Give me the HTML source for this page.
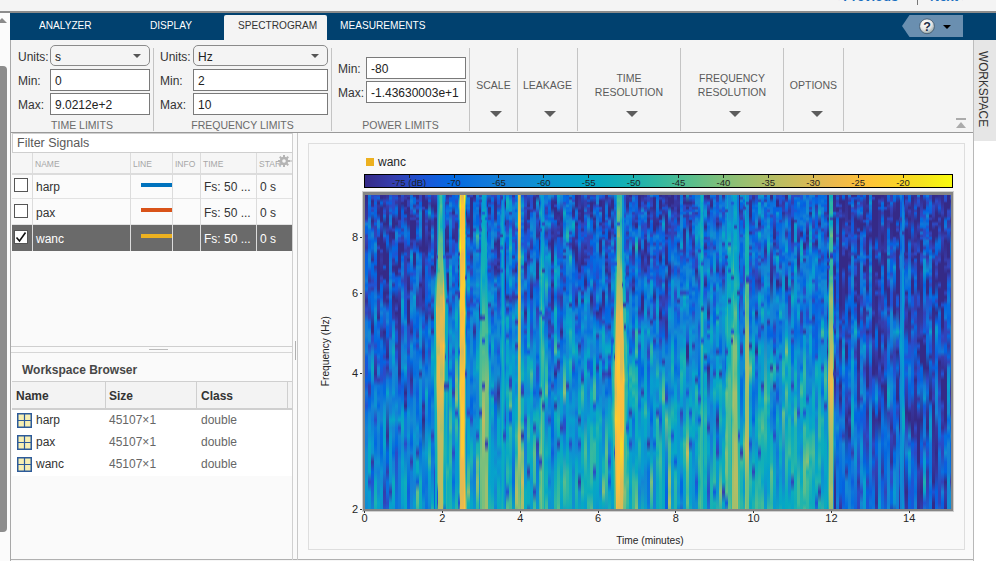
<!DOCTYPE html>
<html><head><meta charset="utf-8">
<style>
*{margin:0;padding:0;box-sizing:border-box}
html,body{width:996px;height:561px;overflow:hidden;background:#f4f4f4;font-family:"Liberation Sans",sans-serif;color:#333}
.a{position:absolute}
.t{position:absolute;white-space:nowrap;line-height:1}
.sep{position:absolute;width:1px;background:#c4c4c4;top:48px;height:83px}
.inp{position:absolute;background:#fff;border:1px solid #7a7a7a}
.dd{position:absolute;background:#f4f4f4;border:1px solid #8a8a8a;border-radius:5px}
.lbl{position:absolute;font-size:12px;line-height:1;color:#333;white-space:nowrap}
.val{position:absolute;font-size:12px;line-height:1;color:#222;white-space:nowrap}
.sec{position:absolute;font-size:10.5px;line-height:1;color:#6a6a6a;white-space:nowrap;text-align:center}
.btn{position:absolute;font-size:10.5px;line-height:13.6px;color:#5a5a5a;white-space:nowrap;text-align:center}
.arr{position:absolute;width:0;height:0;border-left:6px solid transparent;border-right:6px solid transparent;border-top:6px solid #5c5c5c}
.sarr{position:absolute;width:0;height:0;border-left:4px solid transparent;border-right:4px solid transparent;border-top:4px solid #555}
.spec{position:absolute;left:365px;top:195px;width:586px;height:314px;overflow:hidden}.spec i{position:absolute;top:0;height:314px;display:block}</style></head><body>
<!-- top strip -->
<div class="a" style="left:0;top:0;width:996px;height:11px;background:#f4f4f4"></div>
<div class="t" style="left:832px;top:-10px;font-size:13px;font-weight:bold;color:#1a6fc0">&lt; Previous</div>
<div class="a" style="left:917px;top:0;width:1px;height:5px;background:#777"></div>
<div class="t" style="left:930px;top:-10px;font-size:13px;font-weight:bold;color:#1a6fc0">Next &gt;</div>
<div class="a" style="left:0;top:11px;width:996px;height:2px;background:#8c8c8c"></div>
<!-- left scroll -->
<div class="a" style="left:0;top:13px;width:10px;height:548px;background:#fbfbfb"></div>
<div class="a" style="left:-3px;top:18px;width:0;height:0;border-left:5px solid transparent;border-right:5px solid transparent;border-bottom:5px solid #8a8a8a"></div>
<div class="a" style="left:0;top:66px;width:7px;height:466px;background:#8d8d8d;border-radius:0 4px 4px 0"></div>
<div class="a" style="left:10px;top:40px;width:1px;height:521px;background:#a8a8a8"></div>
<!-- blue bar -->
<div class="a" style="left:10px;top:13px;width:986px;height:27px;background:#01416f"></div>
<div class="t" style="left:39px;top:20px;font-size:11px;color:#fff;transform-origin:0 0;transform:scaleX(0.92)">ANALYZER</div>
<div class="t" style="left:150px;top:20px;font-size:11px;color:#fff;transform-origin:0 0;transform:scaleX(0.92)">DISPLAY</div>
<div class="a" style="left:224px;top:15px;width:103px;height:25px;background:#f4f4f4;border-radius:2px 2px 0 0"></div>
<div class="t" style="left:238px;top:20px;font-size:11px;color:#333;transform-origin:0 0;transform:scaleX(0.92)">SPECTROGRAM</div>
<div class="t" style="left:340px;top:20px;font-size:11px;color:#fff;transform-origin:0 0;transform:scaleX(0.92)">MEASUREMENTS</div>
<!-- help -->
<svg class="a" style="left:900px;top:14px" width="66" height="25" viewBox="0 0 66 25">
<polygon points="2,12 9.5,1 63,1 63,23 9.5,23" fill="#6a8fb0"/>
<defs><radialGradient id="hg" cx="0.4" cy="0.3" r="0.7"><stop offset="0" stop-color="#fff"/><stop offset="0.6" stop-color="#e6e6e6"/><stop offset="1" stop-color="#9aa"/></radialGradient></defs>
<circle cx="27" cy="12.3" r="7.4" fill="url(#hg)" stroke="#34495e" stroke-width="0.7"/>
<text x="27" y="17" font-family="Liberation Sans" font-weight="bold" font-size="12.5" text-anchor="middle" fill="#1f2f48">?</text>
<polygon points="43,11 51,11 47,15" fill="#000"/>
</svg>
<!-- toolstrip -->
<div class="a" style="left:11px;top:40px;width:962px;height:92px;background:#f4f4f4"></div>
<div class="a" style="left:11px;top:132px;width:962px;height:1px;background:#9a9a9a"></div>
<div class="sep" style="left:153px"></div>
<div class="sep" style="left:331px"></div>
<div class="sep" style="left:469px"></div>
<div class="sep" style="left:517px"></div>
<div class="sep" style="left:577px"></div>
<div class="sep" style="left:680px"></div>
<div class="sep" style="left:783px"></div>
<div class="sep" style="left:843px"></div>
<!-- time limits -->
<div class="lbl" style="left:18px;top:51px">Units:</div>
<div class="dd" style="left:50px;top:45px;width:100px;height:21px"></div>
<div class="val" style="left:55px;top:51px">s</div>
<div class="sarr" style="left:133px;top:54px"></div>
<div class="lbl" style="left:18px;top:75px">Min:</div>
<div class="inp" style="left:50px;top:69px;width:100px;height:22px"></div>
<div class="val" style="left:55px;top:75px">0</div>
<div class="lbl" style="left:18px;top:99px">Max:</div>
<div class="inp" style="left:50px;top:93px;width:100px;height:22px"></div>
<div class="val" style="left:55px;top:99px">9.0212e+2</div>
<div class="sec" style="left:11px;width:142px;top:120px">TIME LIMITS</div>
<!-- freq limits -->
<div class="lbl" style="left:160px;top:51px">Units:</div>
<div class="dd" style="left:193px;top:45px;width:135px;height:21px"></div>
<div class="val" style="left:198px;top:51px">Hz</div>
<div class="sarr" style="left:311px;top:54px"></div>
<div class="lbl" style="left:160px;top:75px">Min:</div>
<div class="inp" style="left:193px;top:69px;width:135px;height:22px"></div>
<div class="val" style="left:198px;top:75px">2</div>
<div class="lbl" style="left:160px;top:99px">Max:</div>
<div class="inp" style="left:193px;top:93px;width:135px;height:22px"></div>
<div class="val" style="left:198px;top:99px">10</div>
<div class="sec" style="left:154px;width:177px;top:120px">FREQUENCY LIMITS</div>
<!-- power limits -->
<div class="lbl" style="left:338px;top:63px">Min:</div>
<div class="inp" style="left:366px;top:57px;width:100px;height:22px"></div>
<div class="val" style="left:371px;top:63px">-80</div>
<div class="lbl" style="left:338px;top:87px">Max:</div>
<div class="inp" style="left:366px;top:81px;width:100px;height:22px"></div>
<div class="val" style="left:371px;top:87px">-1.43630003e+1</div>
<div class="sec" style="left:332px;width:137px;top:120px">POWER LIMITS</div>
<!-- buttons -->
<div class="btn" style="left:470px;width:47px;top:79px">SCALE</div>
<div class="arr" style="left:490px;top:111px"></div>
<div class="btn" style="left:518px;width:59px;top:79px">LEAKAGE</div>
<div class="arr" style="left:544px;top:111px"></div>
<div class="btn" style="left:578px;width:102px;top:72px">TIME<br>RESOLUTION</div>
<div class="arr" style="left:626px;top:111px"></div>
<div class="btn" style="left:681px;width:102px;top:72px">FREQUENCY<br>RESOLUTION</div>
<div class="arr" style="left:729px;top:111px"></div>
<div class="btn" style="left:784px;width:59px;top:79px">OPTIONS</div>
<div class="arr" style="left:811px;top:111px"></div>
<!-- collapse -->
<div class="a" style="left:956px;top:118px;width:10px;height:2px;background:#ababab"></div>
<div class="a" style="left:956px;top:122px;width:0;height:0;border-left:5px solid transparent;border-right:5px solid transparent;border-bottom:6px solid #ababab"></div>
<!-- workspace tab -->
<div class="a" style="left:973px;top:40px;width:23px;height:101px;background:#e6e6e6;border-left:1px solid #bdbdbd"></div>
<div class="a" style="left:973px;top:141px;width:23px;height:420px;background:#fff"></div>
<div class="t" style="left:979px;top:51px;font-size:13px;color:#333;transform-origin:0 0;transform:translate(11px,0) rotate(90deg) scaleX(0.91)">WORKSPACE</div>

<!-- left panel -->
<div class="a" style="left:11px;top:133px;width:286px;height:427px;background:#fafafa"></div>
<div class="a" style="left:11px;top:559px;width:962px;height:1px;background:#b0b0b0"></div><div class="a" style="left:11px;top:560px;width:962px;height:1px;background:#f6f6f6"></div>
<div class="a" style="left:12px;top:133px;width:281px;height:20px;background:#fff;border:1px solid #cfcfcf"></div>
<div class="t" style="left:17px;top:137px;font-size:12.5px;color:#595959">Filter Signals</div>
<!-- table header -->
<div class="a" style="left:12px;top:153px;width:281px;height:22px;background:#f6f6f6;border-bottom:2px solid #dcdcdc"></div>
<div class="t" style="left:35px;top:160px;font-size:8.5px;color:#a6a6a6">NAME</div>
<div class="t" style="left:133px;top:160px;font-size:8.5px;color:#a6a6a6">LINE</div>
<div class="t" style="left:175px;top:160px;font-size:8.5px;color:#a6a6a6">INFO</div>
<div class="t" style="left:203px;top:160px;font-size:8.5px;color:#a6a6a6">TIME</div>
<div class="t" style="left:259px;top:160px;font-size:8.5px;color:#a6a6a6">STAR</div>
<svg class="a" style="left:277px;top:154px" width="16" height="14" viewBox="0 0 16 14"><g fill="#b4b4b4"><circle cx="7" cy="7" r="4.2"/><rect x="6" y="1" width="2" height="12"/><rect x="1" y="6" width="12" height="2"/><rect x="6" y="1" width="2" height="12" transform="rotate(45 7 7)"/><rect x="6" y="1" width="2" height="12" transform="rotate(-45 7 7)"/></g><circle cx="7" cy="7" r="1.8" fill="#f6f6f6"/><rect x="13" y="6.5" width="3" height="1" fill="#b4b4b4"/></svg>
<!-- rows -->
<div class="a" style="left:12px;top:175px;width:281px;height:24px;background:#fbfbfb;border-bottom:1px solid #e2e2e2"></div>
<div class="a" style="left:12px;top:199px;width:281px;height:26px;background:#fbfbfb;border-bottom:1px solid #e2e2e2"></div>
<div class="a" style="left:12px;top:225px;width:281px;height:26px;background:#6a6a6a"></div>
<div class="a" style="left:32px;top:153px;width:1px;height:98px;background:#dcdcdc"></div>
<div class="a" style="left:130px;top:153px;width:1px;height:98px;background:#dcdcdc"></div>
<div class="a" style="left:172px;top:153px;width:1px;height:98px;background:#dcdcdc"></div>
<div class="a" style="left:200px;top:153px;width:1px;height:98px;background:#dcdcdc"></div>
<div class="a" style="left:256px;top:153px;width:1px;height:98px;background:#dcdcdc"></div>
<div class="a" style="left:292px;top:133px;width:1px;height:427px;background:#d0d0d0"></div>
<div class="a" style="left:14px;top:178px;width:14px;height:14px;background:#fff;border:1.5px solid #555"></div>
<div class="a" style="left:14px;top:204px;width:14px;height:14px;background:#fff;border:1.5px solid #555"></div>
<div class="a" style="left:14px;top:230px;width:14px;height:14px;background:#fff;border:1.5px solid #555"></div>
<svg class="a" style="left:14px;top:230px" width="14" height="14"><polyline points="2.5,7.5 5.5,11 11.5,2.5" fill="none" stroke="#111" stroke-width="1.6"/></svg>
<div class="t" style="left:36px;top:181px;font-size:12px;color:#333">harp</div>
<div class="t" style="left:36px;top:207px;font-size:12px;color:#333">pax</div>
<div class="t" style="left:36px;top:233px;font-size:12px;color:#fff">wanc</div>
<div class="a" style="left:141px;top:183px;width:31px;height:4px;background:#0072bd"></div>
<div class="a" style="left:141px;top:208px;width:31px;height:4px;background:#d95319"></div>
<div class="a" style="left:141px;top:234px;width:31px;height:4px;background:#edb120"></div>
<div class="t" style="left:204px;top:181px;font-size:12px;color:#333">Fs: 50 ...</div>
<div class="t" style="left:204px;top:207px;font-size:12px;color:#333">Fs: 50 ...</div>
<div class="t" style="left:204px;top:233px;font-size:12px;color:#fff">Fs: 50 ...</div>
<div class="t" style="left:260px;top:181px;font-size:12px;color:#333">0 s</div>
<div class="t" style="left:260px;top:207px;font-size:12px;color:#333">0 s</div>
<div class="t" style="left:260px;top:233px;font-size:12px;color:#fff">0 s</div>
<!-- splitter -->
<div class="a" style="left:11px;top:346px;width:282px;height:1px;background:#cfcfcf"></div>
<div class="a" style="left:11px;top:352px;width:282px;height:1px;background:#d6d6d6"></div>
<div class="a" style="left:149px;top:349px;width:19px;height:1px;background:#bcbcbc"></div>



<!-- workspace browser -->
<div class="t" style="left:22px;top:364px;font-size:12px;font-weight:bold;color:#474747">Workspace Browser</div>
<div class="a" style="left:12px;top:381px;width:280px;height:29px;background:#f3f3f3;border-top:1px solid #cfcfcf;border-bottom:2px solid #cfcfcf"></div>
<div class="a" style="left:105px;top:381px;width:1px;height:28px;background:#cfcfcf"></div>
<div class="a" style="left:196px;top:381px;width:1px;height:28px;background:#cfcfcf"></div>
<div class="a" style="left:287px;top:381px;width:1px;height:28px;background:#cfcfcf"></div>
<div class="t" style="left:16px;top:390px;font-size:12px;font-weight:bold;color:#333">Name</div>
<div class="t" style="left:109px;top:390px;font-size:12px;font-weight:bold;color:#333">Size</div>
<div class="t" style="left:201px;top:390px;font-size:12px;font-weight:bold;color:#333">Class</div>
<div class="a" style="left:12px;top:410px;width:280px;height:66px;background:#fff"></div>
<svg class="a" style="left:17px;top:413px" width="15" height="15"><rect x="0.75" y="0.75" width="13.5" height="13.5" fill="#f7efb3" stroke="#2d5b9a" stroke-width="1.5"/><path d="M7.5 1v13M1 7.5h13" stroke="#2d5b9a" stroke-width="1.2"/></svg>
<svg class="a" style="left:17px;top:435px" width="15" height="15"><rect x="0.75" y="0.75" width="13.5" height="13.5" fill="#f7efb3" stroke="#2d5b9a" stroke-width="1.5"/><path d="M7.5 1v13M1 7.5h13" stroke="#2d5b9a" stroke-width="1.2"/></svg>
<svg class="a" style="left:17px;top:457px" width="15" height="15"><rect x="0.75" y="0.75" width="13.5" height="13.5" fill="#f7efb3" stroke="#2d5b9a" stroke-width="1.5"/><path d="M7.5 1v13M1 7.5h13" stroke="#2d5b9a" stroke-width="1.2"/></svg>
<div class="t" style="left:36px;top:414px;font-size:12px;color:#333">harp</div>
<div class="t" style="left:36px;top:436px;font-size:12px;color:#333">pax</div>
<div class="t" style="left:36px;top:458px;font-size:12px;color:#333">wanc</div>
<div class="t" style="left:109px;top:414px;font-size:12px;color:#666">45107×1</div>
<div class="t" style="left:109px;top:436px;font-size:12px;color:#666">45107×1</div>
<div class="t" style="left:109px;top:458px;font-size:12px;color:#666">45107×1</div>
<div class="t" style="left:201px;top:414px;font-size:12px;color:#666">double</div>
<div class="t" style="left:201px;top:436px;font-size:12px;color:#666">double</div>
<div class="t" style="left:201px;top:458px;font-size:12px;color:#666">double</div>

<!-- plot area -->
<div class="a" style="left:293px;top:133px;width:680px;height:426px;background:#fafafa"></div>
<div class="a" style="left:297px;top:133px;width:1px;height:427px;background:#c8c8c8"></div>
<div class="a" style="left:295px;top:341px;width:1px;height:19px;background:#b0b0b0"></div>
<div class="a" style="left:973px;top:133px;width:1px;height:428px;background:#b8b8b8"></div>
<div class="a" style="left:308px;top:143px;width:657px;height:407px;border:1px solid #dedede;background:#f9f9f9"></div>
<div class="a" style="left:366px;top:158px;width:8px;height:8px;background:#edb120"></div>
<div class="t" style="left:378px;top:156px;font-size:12px;color:#262626">wanc</div>
<div class="a" style="left:364px;top:174px;width:589px;height:14px;border:1px solid #000;background:linear-gradient(90deg,#352a87 0.00%,#353eaf 5.00%,#1b55d7 10.00%,#036ae1 15.00%,#0f77db 20.00%,#1484d4 25.00%,#0d93d2 30.00%,#06a0cd 35.00%,#07aac1 40.00%,#18b1b2 45.00%,#33b8a1 50.00%,#55bd8e 55.00%,#7abf7c 60.00%,#9bbf6f 65.00%,#b8bd63 70.00%,#d3bb58 75.00%,#ecb94c 80.00%,#fec13a 85.00%,#fad12b 90.00%,#f5e31e 95.00%,#f9fb0e 100.00%)"></div>
<div class="a" style="left:408.6px;top:175px;width:1px;height:3px;background:#222"></div>
<div class="t" style="left:379.1px;top:177.5px;width:60px;text-align:center;font-size:9.5px;color:#1e1e1e">-75 (dB)</div>
<div class="a" style="left:453.5px;top:175px;width:1px;height:3px;background:#222"></div>
<div class="t" style="left:424.0px;top:177.5px;width:60px;text-align:center;font-size:9.5px;color:#1e1e1e">-70</div>
<div class="a" style="left:498.4px;top:175px;width:1px;height:3px;background:#222"></div>
<div class="t" style="left:468.9px;top:177.5px;width:60px;text-align:center;font-size:9.5px;color:#1e1e1e">-65</div>
<div class="a" style="left:543.3px;top:175px;width:1px;height:3px;background:#222"></div>
<div class="t" style="left:513.8px;top:177.5px;width:60px;text-align:center;font-size:9.5px;color:#1e1e1e">-60</div>
<div class="a" style="left:588.2px;top:175px;width:1px;height:3px;background:#222"></div>
<div class="t" style="left:558.7px;top:177.5px;width:60px;text-align:center;font-size:9.5px;color:#1e1e1e">-55</div>
<div class="a" style="left:633.1px;top:175px;width:1px;height:3px;background:#222"></div>
<div class="t" style="left:603.6px;top:177.5px;width:60px;text-align:center;font-size:9.5px;color:#1e1e1e">-50</div>
<div class="a" style="left:678.0px;top:175px;width:1px;height:3px;background:#222"></div>
<div class="t" style="left:648.5px;top:177.5px;width:60px;text-align:center;font-size:9.5px;color:#1e1e1e">-45</div>
<div class="a" style="left:722.9px;top:175px;width:1px;height:3px;background:#222"></div>
<div class="t" style="left:693.4px;top:177.5px;width:60px;text-align:center;font-size:9.5px;color:#1e1e1e">-40</div>
<div class="a" style="left:767.8px;top:175px;width:1px;height:3px;background:#222"></div>
<div class="t" style="left:738.3px;top:177.5px;width:60px;text-align:center;font-size:9.5px;color:#1e1e1e">-35</div>
<div class="a" style="left:812.7px;top:175px;width:1px;height:3px;background:#222"></div>
<div class="t" style="left:783.2px;top:177.5px;width:60px;text-align:center;font-size:9.5px;color:#1e1e1e">-30</div>
<div class="a" style="left:857.6px;top:175px;width:1px;height:3px;background:#222"></div>
<div class="t" style="left:828.1px;top:177.5px;width:60px;text-align:center;font-size:9.5px;color:#1e1e1e">-25</div>
<div class="a" style="left:902.5px;top:175px;width:1px;height:3px;background:#222"></div>
<div class="t" style="left:873.0px;top:177.5px;width:60px;text-align:center;font-size:9.5px;color:#1e1e1e">-20</div>
<div class="a" style="left:362px;top:191px;width:592px;height:321px;border:1px solid #cfcfcf;background:#868686"></div>
<div class="spec"><i style="left:0px;width:3px;background:linear-gradient(#353dad -6px,#352a87 -1px,#3637a0 24px,#2c4ac7 26px,#1481d6 29px,#0363e1 32px,#0f5cdd 38px,#353dad 41px,#3243ba 43px,#3637a0 53px,#0f5cdd 59px,#0363e1 69px,#0268e1 79px,#1079da 86px,#0363e1 90px,#0871de 94px,#2c4ac7 98px,#363093 106px,#2c4ac7 114px,#3243ba 118px,#1079da 127px,#1481d6 141px,#0d75dc 146px,#127dd8 157px,#0f5cdd 162px,#2053d4 179px,#0363e1 185px,#2053d4 191px,#0d75dc 198px,#2053d4 211px,#0871de 218px,#1481d6 233px,#127dd8 249px,#108ed2 258px,#108ed2 277px,#079ccf 287px,#1485d4 320px)"></i><i style="left:3px;width:3px;background:linear-gradient(#1481d6 -6px,#046de0 -4px,#1079da 1px,#046de0 3px,#1079da 8px,#046de0 11px,#0f5cdd 18px,#0f5cdd 21px,#1481d6 24px,#1481d6 29px,#0c93d2 32px,#0871de 35px,#0d75dc 43px,#0f5cdd 46px,#0363e1 53px,#127dd8 59px,#1389d3 65px,#0d75dc 72px,#2053d4 76px,#3637a0 86px,#2053d4 90px,#3243ba 94px,#0268e1 102px,#353dad 118px,#3243ba 123px,#046de0 127px,#046de0 132px,#1389d3 137px,#1485d4 146px,#2c4ac7 151px,#1481d6 162px,#127dd8 173px,#0268e1 179px,#0363e1 185px,#353dad 191px,#353dad 198px,#0363e1 204px,#0268e1 211px,#1481d6 218px,#0998d1 233px,#0c93d2 241px,#06a7c6 249px,#07a9c2 277px,#2c4ac7 287px,#079ccf 297px,#0c93d2 320px)"></i><i style="left:6px;width:3px;background:linear-gradient(#352a87 -6px,#3637a0 -4px,#0363e1 -1px,#3243ba 1px,#2c4ac7 3px,#352a87 6px,#363093 11px,#2053d4 13px,#3243ba 16px,#046de0 18px,#352a87 26px,#353dad 32px,#0f5cdd 35px,#127dd8 38px,#1481d6 41px,#0268e1 46px,#0871de 53px,#363093 65px,#0268e1 69px,#0268e1 79px,#3243ba 86px,#2053d4 90px,#353dad 94px,#046de0 98px,#046de0 114px,#352a87 132px,#352a87 137px,#2c4ac7 141px,#2c4ac7 146px,#1485d4 157px,#07a9c2 173px,#108ed2 185px,#0871de 191px,#0871de 204px,#1485d4 211px,#1079da 225px,#0998d1 249px,#0c93d2 258px,#3637a0 267px,#0363e1 277px,#2053d4 287px,#108ed2 320px)"></i><i style="left:9px;width:3px;background:linear-gradient(#352a87 -6px,#363093 -1px,#2053d4 1px,#2053d4 6px,#0268e1 8px,#2053d4 11px,#0268e1 16px,#0f5cdd 18px,#0268e1 21px,#3243ba 26px,#0363e1 29px,#353dad 32px,#3243ba 38px,#3243ba 41px,#0268e1 46px,#1389d3 49px,#1389d3 56px,#046de0 59px,#0f5cdd 65px,#0363e1 69px,#3637a0 72px,#0268e1 79px,#2053d4 90px,#127dd8 102px,#0871de 106px,#1079da 110px,#108ed2 114px,#1389d3 118px,#0998d1 123px,#0871de 132px,#0268e1 146px,#2c4ac7 151px,#0268e1 157px,#3243ba 162px,#363093 179px,#3243ba 185px,#1079da 191px,#108ed2 198px,#0c93d2 211px,#2c4ac7 225px,#0d75dc 233px,#0268e1 249px,#108ed2 267px,#1485d4 277px,#07a9c2 287px,#1db3af 308px,#06a4ca 320px)"></i><i style="left:12px;width:3px;background:linear-gradient(#0f5cdd -6px,#353dad -4px,#2c4ac7 1px,#046de0 3px,#3637a0 6px,#352a87 8px,#3637a0 11px,#352a87 18px,#0f5cdd 24px,#1481d6 26px,#1485d4 32px,#0268e1 35px,#2053d4 41px,#363093 43px,#352a87 49px,#2c4ac7 53px,#352a87 56px,#352a87 94px,#0363e1 102px,#353dad 106px,#353dad 114px,#352a87 123px,#0f5cdd 127px,#0f5cdd 132px,#1079da 137px,#0363e1 146px,#0363e1 157px,#0d75dc 162px,#2053d4 167px,#1485d4 173px,#1481d6 179px,#353dad 185px,#0d75dc 191px,#046de0 198px,#1079da 204px,#0268e1 211px,#1485d4 218px,#108ed2 233px,#127dd8 241px,#127dd8 258px,#0c93d2 267px,#127dd8 277px,#1389d3 287px,#1485d4 297px,#06a4ca 308px,#079ccf 320px)"></i><i style="left:15px;width:3px;background:linear-gradient(#3637a0 -6px,#352a87 3px,#0268e1 8px,#352a87 13px,#352a87 26px,#2053d4 29px,#352a87 41px,#352a87 53px,#2c4ac7 56px,#363093 59px,#3637a0 65px,#352a87 79px,#3243ba 83px,#353dad 86px,#0363e1 90px,#0268e1 94px,#0f5cdd 102px,#1481d6 110px,#0871de 114px,#1481d6 118px,#046de0 123px,#046de0 127px,#3637a0 137px,#3637a0 141px,#0871de 146px,#0d75dc 151px,#0363e1 162px,#0f5cdd 173px,#2c4ac7 185px,#0871de 191px,#1481d6 225px,#046de0 233px,#0268e1 258px,#0c93d2 277px,#1389d3 287px,#079ccf 297px,#108ed2 320px)"></i><i style="left:18px;width:3px;background:linear-gradient(#352a87 -6px,#363093 3px,#3243ba 6px,#363093 11px,#2053d4 16px,#2c4ac7 18px,#0871de 21px,#352a87 29px,#0d75dc 41px,#2c4ac7 43px,#352a87 49px,#352a87 69px,#0f5cdd 72px,#352a87 76px,#352a87 83px,#0f5cdd 86px,#352a87 98px,#363093 106px,#0d75dc 114px,#2c4ac7 132px,#352a87 137px,#0363e1 157px,#3243ba 162px,#0268e1 167px,#2c4ac7 173px,#2c4ac7 179px,#0268e1 191px,#0268e1 198px,#108ed2 211px,#06a4ca 225px,#06a0cd 241px,#06a7c6 249px,#127dd8 267px,#1079da 277px,#353dad 297px,#3243ba 308px,#0d75dc 320px)"></i><i style="left:21px;width:3px;background:linear-gradient(#352a87 -6px,#3637a0 3px,#0f5cdd 8px,#353dad 11px,#352a87 24px,#352a87 29px,#353dad 35px,#3637a0 38px,#0f5cdd 41px,#0268e1 49px,#352a87 59px,#352a87 86px,#353dad 90px,#352a87 98px,#353dad 102px,#352a87 106px,#2053d4 114px,#127dd8 118px,#1079da 123px,#1485d4 127px,#0268e1 132px,#0363e1 141px,#353dad 146px,#352a87 162px,#2053d4 167px,#3637a0 173px,#1079da 185px,#1485d4 191px,#06a7c6 198px,#1389d3 204px,#363093 241px,#0268e1 258px,#0363e1 267px,#353dad 277px,#0871de 287px,#0871de 297px,#2c4ac7 308px,#1079da 320px)"></i><i style="left:24px;width:3px;background:linear-gradient(#2c4ac7 -6px,#1079da -4px,#2053d4 1px,#0871de 3px,#2053d4 6px,#0363e1 8px,#2c4ac7 11px,#0871de 16px,#2c4ac7 18px,#1079da 21px,#1079da 26px,#1481d6 29px,#2053d4 32px,#352a87 38px,#363093 46px,#046de0 59px,#1079da 69px,#0d75dc 76px,#127dd8 79px,#0871de 83px,#1389d3 86px,#0c93d2 90px,#0871de 98px,#1079da 102px,#0268e1 106px,#0268e1 123px,#2c4ac7 141px,#1481d6 146px,#1389d3 157px,#127dd8 162px,#1079da 173px,#2c4ac7 179px,#0871de 185px,#1485d4 204px,#127dd8 211px,#1481d6 218px,#06a4ca 225px,#108ed2 233px,#079ccf 241px,#0998d1 277px,#108ed2 287px,#353dad 297px,#079ccf 308px,#07a9c2 320px)"></i><i style="left:27px;width:3px;background:linear-gradient(#2c4ac7 -6px,#3637a0 -1px,#2c4ac7 1px,#2c4ac7 13px,#0f5cdd 18px,#352a87 24px,#352a87 32px,#2c4ac7 35px,#352a87 38px,#352a87 43px,#2c4ac7 46px,#2c4ac7 49px,#0268e1 53px,#2053d4 62px,#3637a0 65px,#353dad 69px,#352a87 72px,#363093 76px,#0f5cdd 79px,#0f5cdd 83px,#0871de 86px,#3637a0 90px,#0363e1 94px,#352a87 102px,#3637a0 118px,#353dad 123px,#0d75dc 127px,#06a0cd 141px,#1389d3 146px,#0aacbe 157px,#079ccf 162px,#06a0cd 167px,#1485d4 173px,#1389d3 191px,#0998d1 198px,#1079da 204px,#0c93d2 218px,#06a7c6 225px,#1485d4 233px,#1485d4 241px,#0268e1 258px,#1481d6 267px,#1389d3 277px,#0aacbe 287px,#06a4ca 308px,#108ed2 320px)"></i><i style="left:30px;width:3px;background:linear-gradient(#352a87 -6px,#2c4ac7 -1px,#3243ba 1px,#0f5cdd 3px,#353dad 6px,#3637a0 8px,#046de0 13px,#046de0 18px,#3637a0 24px,#352a87 29px,#0268e1 35px,#1485d4 38px,#1481d6 43px,#0f5cdd 49px,#0268e1 53px,#2053d4 59px,#0268e1 62px,#0268e1 65px,#352a87 72px,#352a87 79px,#0f5cdd 83px,#0f5cdd 94px,#352a87 106px,#2c4ac7 114px,#352a87 118px,#3243ba 127px,#3637a0 132px,#2053d4 137px,#0f5cdd 146px,#3637a0 151px,#2053d4 157px,#2053d4 162px,#1485d4 173px,#0d75dc 198px,#1079da 204px,#0c93d2 211px,#1481d6 218px,#108ed2 225px,#0d75dc 233px,#0268e1 249px,#2c4ac7 258px,#0d75dc 308px,#0d75dc 320px)"></i><i style="left:33px;width:3px;background:linear-gradient(#2c4ac7 -6px,#352a87 1px,#3637a0 3px,#352a87 18px,#352a87 24px,#3243ba 26px,#353dad 32px,#0363e1 35px,#2053d4 38px,#0d75dc 41px,#2c4ac7 43px,#2c4ac7 46px,#352a87 49px,#352a87 72px,#2053d4 76px,#3637a0 79px,#0363e1 83px,#0d75dc 90px,#353dad 98px,#352a87 114px,#3637a0 157px,#352a87 179px,#2053d4 191px,#0f5cdd 198px,#1079da 204px,#1079da 218px,#06a4ca 225px,#2c4ac7 233px,#1481d6 241px,#0d75dc 258px,#1481d6 267px,#127dd8 297px,#127dd8 320px)"></i><i style="left:36px;width:3px;background:linear-gradient(#2053d4 -6px,#0268e1 -4px,#3243ba 3px,#3243ba 6px,#352a87 8px,#0363e1 16px,#2053d4 24px,#046de0 32px,#353dad 35px,#0268e1 38px,#353dad 43px,#3243ba 46px,#352a87 49px,#352a87 56px,#046de0 62px,#0363e1 65px,#1079da 69px,#0871de 72px,#127dd8 79px,#3243ba 86px,#0f5cdd 90px,#108ed2 98px,#1485d4 102px,#06a4ca 106px,#079ccf 118px,#127dd8 127px,#2053d4 132px,#2c4ac7 137px,#127dd8 151px,#108ed2 173px,#0268e1 179px,#0871de 185px,#0f5cdd 191px,#0871de 204px,#06a4ca 218px,#0aacbe 233px,#1389d3 249px,#06a4ca 267px,#079ccf 277px,#07a9c2 287px,#06a0cd 308px,#1485d4 320px)"></i><i style="left:39px;width:3px;background:linear-gradient(#0268e1 -6px,#363093 -1px,#353dad 3px,#352a87 6px,#352a87 11px,#353dad 13px,#352a87 18px,#0363e1 21px,#3637a0 24px,#0871de 32px,#1079da 41px,#2053d4 46px,#3243ba 53px,#3637a0 56px,#0f5cdd 59px,#353dad 62px,#353dad 72px,#353dad 86px,#2c4ac7 94px,#0f5cdd 118px,#0871de 123px,#108ed2 127px,#0d75dc 132px,#1485d4 146px,#0d75dc 151px,#108ed2 162px,#1485d4 167px,#06a4ca 173px,#0871de 185px,#352a87 198px,#353dad 204px,#352a87 211px,#046de0 218px,#1079da 225px,#1079da 241px,#2c4ac7 249px,#1079da 258px,#0faeb9 287px,#06a4ca 320px)"></i><i style="left:42px;width:3px;background:linear-gradient(#352a87 -6px,#352a87 -1px,#353dad 1px,#352a87 3px,#3243ba 6px,#3243ba 11px,#352a87 13px,#363093 29px,#0871de 38px,#0363e1 49px,#3637a0 53px,#353dad 62px,#352a87 65px,#2053d4 69px,#0363e1 76px,#363093 83px,#352a87 94px,#2c4ac7 102px,#352a87 106px,#352a87 127px,#3243ba 132px,#2053d4 151px,#3243ba 157px,#0268e1 162px,#2c4ac7 179px,#0d75dc 204px,#0d75dc 211px,#0998d1 218px,#1389d3 233px,#0998d1 241px,#127dd8 249px,#1389d3 258px,#046de0 287px,#0f5cdd 297px,#0871de 320px)"></i><i style="left:45px;width:3px;background:linear-gradient(#3637a0 -6px,#352a87 -4px,#0871de 1px,#0871de 3px,#1481d6 6px,#0871de 11px,#0d75dc 13px,#2c4ac7 16px,#2c4ac7 18px,#363093 21px,#3243ba 24px,#352a87 26px,#352a87 43px,#353dad 46px,#363093 49px,#353dad 53px,#1079da 56px,#079ccf 62px,#1079da 69px,#046de0 76px,#2c4ac7 79px,#0268e1 83px,#3243ba 94px,#1481d6 98px,#127dd8 102px,#0c93d2 114px,#0d75dc 123px,#2c4ac7 127px,#363093 137px,#2c4ac7 141px,#0c93d2 151px,#1485d4 162px,#0268e1 167px,#363093 185px,#3243ba 198px,#0871de 204px,#1389d3 225px,#046de0 241px,#0363e1 249px,#127dd8 258px,#353dad 267px,#127dd8 277px,#1481d6 297px,#108ed2 320px)"></i><i style="left:48px;width:3px;background:linear-gradient(#352a87 -6px,#363093 1px,#0268e1 3px,#046de0 8px,#3637a0 11px,#127dd8 16px,#046de0 18px,#3637a0 21px,#3243ba 24px,#352a87 26px,#352a87 43px,#3243ba 46px,#0f5cdd 56px,#352a87 59px,#352a87 69px,#0f5cdd 76px,#2053d4 79px,#0871de 83px,#0363e1 86px,#1079da 90px,#1079da 98px,#06a4ca 102px,#0c93d2 106px,#0c93d2 110px,#0871de 123px,#0871de 127px,#0363e1 132px,#1079da 146px,#0268e1 151px,#127dd8 157px,#046de0 179px,#127dd8 185px,#0d75dc 198px,#1485d4 204px,#108ed2 225px,#1389d3 233px,#079ccf 241px,#108ed2 249px,#0998d1 267px,#0998d1 277px,#1481d6 287px,#1485d4 297px,#06a0cd 308px,#108ed2 320px)"></i><i style="left:51px;width:3px;background:linear-gradient(#352a87 -6px,#352a87 3px,#2c4ac7 6px,#363093 8px,#2c4ac7 11px,#2053d4 13px,#363093 16px,#2053d4 21px,#363093 24px,#2c4ac7 26px,#353dad 29px,#0363e1 35px,#046de0 38px,#2053d4 41px,#0268e1 43px,#363093 49px,#0363e1 56px,#127dd8 59px,#1485d4 62px,#0871de 69px,#1485d4 72px,#127dd8 76px,#1485d4 83px,#1481d6 90px,#3637a0 102px,#3637a0 110px,#0871de 118px,#0363e1 123px,#0363e1 132px,#353dad 141px,#0268e1 146px,#3243ba 151px,#046de0 157px,#0d75dc 167px,#0871de 173px,#0d75dc 185px,#0f5cdd 198px,#046de0 211px,#0268e1 218px,#0d75dc 225px,#0998d1 233px,#1389d3 241px,#0c93d2 249px,#353dad 258px,#0aacbe 267px,#07a9c2 277px,#0f5cdd 287px,#65be86 297px,#59bd8c 308px,#15b1b4 320px)"></i><i style="left:54px;width:3px;background:linear-gradient(#352a87 -6px,#3243ba -1px,#2c4ac7 6px,#0268e1 8px,#0f5cdd 11px,#108ed2 18px,#1079da 29px,#1485d4 35px,#127dd8 41px,#0871de 43px,#353dad 46px,#352a87 53px,#363093 56px,#0363e1 59px,#1079da 65px,#0d75dc 69px,#1481d6 72px,#2c4ac7 86px,#352a87 90px,#353dad 94px,#353dad 110px,#1079da 123px,#0998d1 137px,#1389d3 151px,#0363e1 157px,#1389d3 167px,#0c93d2 173px,#3637a0 179px,#108ed2 185px,#0c93d2 204px,#046de0 233px,#127dd8 241px,#0363e1 249px,#0c93d2 277px,#0faeb9 287px,#07a9c2 320px)"></i><i style="left:57px;width:3px;background:linear-gradient(#2c4ac7 -6px,#2c4ac7 -4px,#352a87 -1px,#352a87 11px,#2c4ac7 13px,#352a87 16px,#352a87 56px,#353dad 59px,#352a87 79px,#3637a0 86px,#352a87 102px,#353dad 110px,#3637a0 114px,#046de0 123px,#2c4ac7 132px,#0871de 137px,#363093 157px,#3637a0 162px,#1079da 173px,#1481d6 179px,#0f5cdd 204px,#363093 211px,#353dad 218px,#352a87 225px,#0c93d2 258px,#0d75dc 287px,#0871de 297px,#0c93d2 308px,#108ed2 320px)"></i><i style="left:60px;width:3px;background:linear-gradient(#352a87 -6px,#2c4ac7 1px,#352a87 6px,#352a87 13px,#0363e1 16px,#353dad 24px,#2c4ac7 26px,#3637a0 29px,#2c4ac7 32px,#352a87 53px,#363093 59px,#2053d4 65px,#2c4ac7 69px,#046de0 72px,#2053d4 98px,#0363e1 106px,#363093 123px,#0363e1 132px,#0268e1 141px,#1079da 151px,#046de0 157px,#0d75dc 167px,#0363e1 173px,#1389d3 185px,#1389d3 191px,#0aacbe 198px,#108ed2 211px,#1389d3 218px,#1079da 225px,#0c93d2 241px,#108ed2 249px,#06a0cd 258px,#0871de 287px,#1079da 297px,#0871de 320px)"></i><i style="left:63px;width:3px;background:linear-gradient(#3243ba -6px,#0363e1 -4px,#0268e1 1px,#3243ba 3px,#0268e1 6px,#353dad 8px,#06a0cd 18px,#363093 26px,#352a87 35px,#3637a0 38px,#352a87 43px,#3243ba 56px,#0871de 59px,#0363e1 62px,#046de0 65px,#2053d4 69px,#2c4ac7 76px,#0363e1 83px,#1079da 90px,#0363e1 98px,#046de0 102px,#0363e1 106px,#3637a0 110px,#2c4ac7 114px,#353dad 118px,#1079da 127px,#127dd8 132px,#0c93d2 137px,#0f5cdd 146px,#0363e1 151px,#2c4ac7 157px,#127dd8 173px,#1481d6 185px,#0363e1 204px,#046de0 225px,#0aacbe 249px,#38b99e 267px,#06a4ca 277px,#108ed2 308px,#1079da 320px)"></i><i style="left:66px;width:3px;background:linear-gradient(#1481d6 -6px,#353dad 1px,#352a87 11px,#046de0 21px,#353dad 26px,#3637a0 29px,#1079da 35px,#0871de 38px,#1389d3 41px,#2053d4 49px,#2053d4 53px,#046de0 56px,#0363e1 59px,#127dd8 62px,#2c4ac7 65px,#0363e1 69px,#352a87 72px,#353dad 79px,#1481d6 86px,#1389d3 94px,#1485d4 98px,#3243ba 106px,#0871de 110px,#352a87 123px,#0363e1 127px,#0363e1 132px,#3637a0 137px,#0d75dc 141px,#0aacbe 162px,#06a0cd 167px,#079ccf 179px,#0268e1 198px,#1389d3 211px,#127dd8 218px,#1481d6 233px,#3243ba 241px,#0d75dc 249px,#0871de 258px,#127dd8 267px,#1079da 277px,#07a9c2 308px,#42bb98 320px)"></i><i style="left:69px;width:1px;background:linear-gradient(#363093 -6px,#2c4ac7 -1px,#352a87 11px,#352a87 16px,#3243ba 21px,#352a87 24px,#3637a0 49px,#352a87 69px,#3637a0 72px,#352a87 76px,#0d75dc 83px,#0998d1 94px,#108ed2 102px,#0faeb9 114px,#0aacbe 123px,#0aacbe 151px,#07a9c2 167px,#1db3af 185px,#06a7c6 211px,#079ccf 218px,#079ccf 233px,#108ed2 241px,#1389d3 249px,#0d75dc 258px,#127dd8 267px,#2c4ac7 277px,#0363e1 308px,#0871de 320px)"></i><i style="left:70px;width:1px;background:linear-gradient(#363093 -6px,#2c4ac7 -1px,#352a87 11px,#352a87 16px,#3243ba 21px,#352a87 24px,#3637a0 49px,#352a87 69px,#352a87 76px,#1389d3 83px,#1db3af 94px,#15b1b4 114px,#07a9c2 118px,#0faeb9 137px,#07a9c2 167px,#1db3af 185px,#15b1b4 249px,#0faeb9 267px,#06a4ca 277px,#0aacbe 320px)"></i><i style="left:71px;width:1px;background:linear-gradient(#363093 -6px,#2c4ac7 -1px,#352a87 11px,#352a87 16px,#3243ba 21px,#352a87 24px,#3637a0 49px,#363093 56px,#2c4ac7 62px,#108ed2 72px,#2eb7a4 90px,#e1b952 114px,#d1bb59 127px,#a5be6b 151px,#87bf77 167px,#92bf73 185px,#15b1b4 218px,#15b1b4 249px,#0faeb9 267px,#06a4ca 277px,#0aacbe 320px)"></i><i style="left:72px;width:1px;background:linear-gradient(#1485d4 -6px,#1485d4 3px,#127dd8 8px,#108ed2 21px,#108ed2 35px,#079ccf 56px,#06a4ca 59px,#353dad 62px,#0aacbe 65px,#15b1b4 76px,#4dbc92 79px,#aebe67 90px,#c0bc60 110px,#d1bb59 114px,#d1bb59 123px,#e9b94e 141px,#c0bc60 157px,#e1b952 162px,#e9b94e 173px,#d9ba56 211px,#a5be6b 233px,#71bf80 258px,#59bd8c 287px,#0f5cdd 297px,#2c4ac7 308px,#65be86 320px)"></i><i style="left:73px;width:1px;background:linear-gradient(#06a0cd -6px,#06a4ca 3px,#079ccf 8px,#15b1b4 21px,#25b5a9 35px,#7cbf7b 62px,#71bf80 72px,#4dbc92 76px,#7cbf7b 79px,#aebe67 90px,#c0bc60 110px,#d1bb59 114px,#d1bb59 123px,#e9b94e 141px,#c0bc60 157px,#e1b952 162px,#e9b94e 173px,#d9ba56 211px,#c8bc5d 218px,#d1bb59 225px,#c0bc60 249px,#b7bd64 287px,#a5be6b 308px,#b7bd64 320px)"></i><i style="left:74px;width:1px;background:linear-gradient(#1db3af -6px,#25b5a9 3px,#15b1b4 8px,#42bb98 21px,#4dbc92 35px,#7cbf7b 65px,#71bf80 72px,#4dbc92 76px,#7cbf7b 79px,#aebe67 90px,#c0bc60 110px,#d1bb59 114px,#d1bb59 123px,#e9b94e 141px,#c0bc60 157px,#e1b952 162px,#e9b94e 173px,#d9ba56 211px,#c8bc5d 218px,#d1bb59 225px,#c0bc60 249px,#b7bd64 287px,#a5be6b 308px,#b7bd64 320px)"></i><i style="left:75px;width:2px;background:linear-gradient(#38b99e -6px,#42bb98 8px,#59bd8c 11px,#25b5a9 24px,#15b1b4 32px,#42bb98 38px,#65be86 46px,#59bd8c 49px,#7cbf7b 69px,#87bf77 86px,#aebe67 94px,#aebe67 98px,#d1bb59 102px,#d1bb59 110px,#e9b94e 123px,#d9ba56 141px,#f1b94a 151px,#b7bd64 179px,#e9b94e 198px,#aebe67 233px,#c0bc60 241px,#c0bc60 287px,#b7bd64 320px)"></i><i style="left:77px;width:1px;background:linear-gradient(#07a9c2 -6px,#0faeb9 8px,#1db3af 11px,#07a9c2 24px,#07a9c2 32px,#2eb7a4 38px,#59bd8c 46px,#4dbc92 49px,#87bf77 65px,#87bf77 86px,#aebe67 94px,#aebe67 98px,#d1bb59 102px,#d1bb59 110px,#e9b94e 123px,#d9ba56 141px,#f1b94a 151px,#b7bd64 179px,#e9b94e 198px,#aebe67 233px,#c0bc60 241px,#c0bc60 287px,#b7bd64 320px)"></i><i style="left:78px;width:1px;background:linear-gradient(#1485d4 -6px,#0998d1 1px,#1389d3 11px,#108ed2 26px,#108ed2 32px,#1485d4 35px,#1389d3 56px,#0998d1 59px,#2053d4 62px,#0aacbe 65px,#7cbf7b 79px,#d9ba56 90px,#f8bb44 106px,#d1bb59 137px,#e9b94e 146px,#ffc337 151px,#d9ba56 173px,#d9ba56 185px,#c0bc60 198px,#7cbf7b 249px,#25b5a9 287px,#38b99e 308px,#2c4ac7 320px)"></i><i style="left:79px;width:1px;background:linear-gradient(#1485d4 -6px,#0998d1 1px,#1389d3 11px,#108ed2 26px,#108ed2 32px,#1485d4 35px,#108ed2 59px,#2053d4 62px,#0998d1 65px,#06a4ca 79px,#4dbc92 94px,#c0bc60 106px,#e9b94e 114px,#b7bd64 137px,#c0bc60 146px,#d9ba56 151px,#87bf77 173px,#7cbf7b 185px,#353dad 191px,#2eb7a4 198px,#06a4ca 218px,#1db3af 258px,#06a0cd 287px,#06a7c6 308px,#2c4ac7 320px)"></i><i style="left:80px;width:1px;background:linear-gradient(#353dad -6px,#1079da -1px,#0363e1 6px,#353dad 8px,#0363e1 16px,#2c4ac7 18px,#0268e1 21px,#2053d4 24px,#2053d4 32px,#352a87 35px,#352a87 56px,#2053d4 62px,#1079da 65px,#0aacbe 86px,#25b5a9 106px,#07a9c2 137px,#15b1b4 146px,#38b99e 151px,#1db3af 157px,#2c4ac7 162px,#1db3af 167px,#0faeb9 179px,#0faeb9 185px,#353dad 191px,#06a7c6 198px,#06a0cd 218px,#1db3af 258px,#06a0cd 287px,#06a7c6 308px,#2c4ac7 320px)"></i><i style="left:81px;width:1px;background:linear-gradient(#363093 -6px,#353dad -4px,#352a87 -1px,#3243ba 6px,#3637a0 8px,#0363e1 11px,#0d75dc 16px,#0268e1 21px,#0d75dc 24px,#2053d4 26px,#2c4ac7 29px,#363093 32px,#352a87 43px,#353dad 46px,#352a87 53px,#352a87 56px,#2c4ac7 59px,#3637a0 62px,#2c4ac7 65px,#2c4ac7 72px,#046de0 76px,#3243ba 79px,#0d75dc 90px,#06a0cd 98px,#06a7c6 102px,#3243ba 106px,#06a7c6 110px,#0faeb9 137px,#06a4ca 157px,#0faeb9 185px,#353dad 191px,#1db3af 198px,#15b1b4 241px,#15b1b4 267px,#38b99e 277px,#25b5a9 320px)"></i><i style="left:82px;width:1px;background:linear-gradient(#363093 -6px,#353dad -4px,#352a87 -1px,#3243ba 6px,#3637a0 8px,#0363e1 11px,#0d75dc 16px,#0268e1 21px,#0d75dc 24px,#2053d4 26px,#2c4ac7 29px,#363093 32px,#352a87 43px,#353dad 46px,#352a87 53px,#352a87 56px,#2c4ac7 59px,#3637a0 62px,#2c4ac7 65px,#2c4ac7 72px,#046de0 76px,#352a87 79px,#352a87 94px,#127dd8 102px,#3243ba 106px,#0998d1 110px,#07a9c2 114px,#0faeb9 137px,#06a4ca 157px,#0faeb9 185px,#353dad 191px,#0faeb9 198px,#079ccf 233px,#07a9c2 258px,#06a4ca 267px,#2eb7a4 277px,#0faeb9 287px,#15b1b4 320px)"></i><i style="left:83px;width:1px;background:linear-gradient(#363093 -6px,#353dad -4px,#352a87 -1px,#3243ba 6px,#3637a0 8px,#0363e1 11px,#0d75dc 16px,#0268e1 21px,#0d75dc 24px,#2053d4 26px,#2c4ac7 29px,#363093 32px,#352a87 43px,#353dad 46px,#352a87 53px,#352a87 56px,#2c4ac7 59px,#3637a0 62px,#2c4ac7 65px,#2c4ac7 72px,#046de0 76px,#352a87 79px,#352a87 94px,#0268e1 102px,#3243ba 106px,#0871de 114px,#046de0 118px,#127dd8 123px,#1481d6 137px,#0f5cdd 146px,#3243ba 157px,#2053d4 167px,#0268e1 173px,#0268e1 179px,#1481d6 185px,#353dad 191px,#0c93d2 198px,#0998d1 204px,#1389d3 211px,#108ed2 233px,#07a9c2 258px,#06a4ca 267px,#2eb7a4 277px,#0faeb9 287px,#15b1b4 320px)"></i><i style="left:84px;width:3px;background:linear-gradient(#3243ba -6px,#0f5cdd -4px,#3637a0 1px,#0f5cdd 3px,#0363e1 6px,#127dd8 8px,#1485d4 11px,#046de0 13px,#1079da 16px,#2c4ac7 18px,#1485d4 26px,#0871de 41px,#0363e1 43px,#0871de 46px,#2053d4 59px,#353dad 62px,#1481d6 65px,#1481d6 69px,#06a7c6 72px,#0998d1 76px,#07a9c2 79px,#0c93d2 83px,#108ed2 90px,#0871de 94px,#1481d6 98px,#0d75dc 106px,#353dad 114px,#1079da 123px,#1485d4 132px,#06a0cd 137px,#1389d3 141px,#1485d4 146px,#0998d1 151px,#0998d1 157px,#1481d6 162px,#06a0cd 167px,#0998d1 173px,#0f5cdd 179px,#06a4ca 185px,#15b1b4 198px,#0faeb9 211px,#38b99e 218px,#4dbc92 233px,#1db3af 241px,#2eb7a4 267px,#0faeb9 277px,#1db3af 320px)"></i><i style="left:87px;width:3px;background:linear-gradient(#363093 -6px,#352a87 -4px,#0363e1 1px,#0f5cdd 6px,#046de0 11px,#352a87 18px,#2c4ac7 21px,#2c4ac7 32px,#3637a0 35px,#352a87 43px,#2053d4 46px,#3243ba 56px,#2053d4 59px,#1079da 62px,#0d75dc 69px,#0f5cdd 72px,#0f5cdd 79px,#0d75dc 83px,#0871de 86px,#3243ba 90px,#0871de 94px,#0871de 98px,#3243ba 102px,#046de0 110px,#1079da 118px,#1485d4 123px,#0871de 127px,#0d75dc 132px,#0998d1 141px,#1485d4 151px,#2053d4 157px,#1079da 162px,#0f5cdd 185px,#0363e1 191px,#353dad 198px,#0d75dc 204px,#079ccf 218px,#06a0cd 225px,#108ed2 233px,#1481d6 249px,#2c4ac7 258px,#1079da 267px,#1481d6 277px,#046de0 287px,#1079da 297px,#079ccf 308px,#0aacbe 320px)"></i><i style="left:90px;width:3px;background:linear-gradient(#0d75dc -6px,#0268e1 3px,#2c4ac7 6px,#046de0 13px,#1079da 18px,#3243ba 21px,#0363e1 24px,#363093 29px,#363093 46px,#2053d4 49px,#0268e1 56px,#127dd8 59px,#0d75dc 65px,#1485d4 76px,#046de0 79px,#0f5cdd 86px,#046de0 90px,#046de0 94px,#353dad 98px,#1485d4 102px,#1389d3 110px,#0aacbe 118px,#0aacbe 123px,#06a0cd 132px,#1389d3 137px,#0aacbe 162px,#38b99e 167px,#59bd8c 179px,#7cbf7b 185px,#65be86 191px,#92bf73 204px,#4dbc92 211px,#2c4ac7 218px,#25b5a9 225px,#38b99e 233px,#06a7c6 249px,#079ccf 267px,#079ccf 287px,#1db3af 308px,#2eb7a4 320px)"></i><i style="left:93px;width:1px;background:linear-gradient(#3243ba -6px,#2053d4 -1px,#3243ba 1px,#1389d3 6px,#06a4ca 11px,#0d75dc 16px,#0d75dc 24px,#0363e1 26px,#0363e1 32px,#1485d4 35px,#127dd8 41px,#0aacbe 49px,#07a9c2 53px,#1389d3 56px,#3637a0 59px,#0363e1 62px,#353dad 65px,#2c4ac7 69px,#352a87 72px,#2c4ac7 76px,#3637a0 79px,#3243ba 83px,#352a87 90px,#0268e1 94px,#353dad 98px,#353dad 102px,#1481d6 106px,#108ed2 110px,#127dd8 114px,#0871de 127px,#127dd8 151px,#0f5cdd 157px,#1079da 162px,#1481d6 167px,#079ccf 173px,#0c93d2 179px,#15b1b4 191px,#07a9c2 204px,#0998d1 218px,#0d75dc 225px,#1389d3 233px,#108ed2 249px,#06a0cd 258px,#108ed2 287px,#079ccf 297px,#2053d4 308px,#1db3af 320px)"></i><i style="left:94px;width:1px;background:linear-gradient(#1db3af -6px,#2eb7a4 -1px,#1db3af 1px,#7cbf7b 6px,#a5be6b 11px,#59bd8c 16px,#4dbc92 24px,#2eb7a4 26px,#38b99e 32px,#71bf80 35px,#59bd8c 41px,#b7bd64 49px,#b7bd64 53px,#7cbf7b 56px,#3637a0 59px,#2eb7a4 62px,#15b1b4 65px,#1db3af 69px,#0aacbe 72px,#15b1b4 76px,#0faeb9 79px,#0faeb9 86px,#06a7c6 90px,#2eb7a4 94px,#353dad 98px,#353dad 102px,#59bd8c 106px,#71bf80 110px,#2eb7a4 123px,#42bb98 151px,#0f5cdd 157px,#38b99e 162px,#71bf80 173px,#65be86 179px,#a5be6b 191px,#59bd8c 218px,#25b5a9 225px,#42bb98 241px,#65be86 267px,#42bb98 287px,#59bd8c 297px,#2053d4 308px,#92bf73 320px)"></i><i style="left:95px;width:1px;background:linear-gradient(#ffc337 -6px,#ffc337 1px,#f5eb18 11px,#fad32a 18px,#fec832 32px,#f7d826 35px,#fad32a 41px,#f6f313 53px,#f8bb44 65px,#e1b952 90px,#fdbe3d 94px,#fcce2e 110px,#f8bb44 127px,#f8bb44 151px,#f1b94a 162px,#fcce2e 198px,#d9ba56 225px,#e9b94e 267px,#e1b952 308px,#f8bb44 320px)"></i><i style="left:96px;width:3px;background:linear-gradient(#fcce2e -6px,#d9ba56 -1px,#fec832 11px,#fdbe3d 16px,#fec832 53px,#f1b94a 59px,#fcce2e 94px,#ffc337 114px,#f8bb44 118px,#ffc337 137px,#d9ba56 157px,#fec832 185px,#fdbe3d 198px,#fcce2e 218px,#fec832 258px,#f1b94a 267px,#e1b952 297px,#f1b94a 320px)"></i><i style="left:99px;width:1px;background:linear-gradient(#f5e41d -6px,#f5e41d -1px,#f9fb0e 1px,#fec832 11px,#f8bb44 21px,#fec832 35px,#ffc337 38px,#fcce2e 41px,#fec832 43px,#fec832 49px,#fec832 76px,#fcce2e 90px,#f1b94a 102px,#fcce2e 118px,#e9b94e 137px,#ffc337 157px,#f1b94a 191px,#e1b952 218px,#e9b94e 225px,#d1bb59 258px,#f1b94a 287px,#fec832 320px)"></i><i style="left:100px;width:1px;background:linear-gradient(#92bf73 -6px,#9cbf6f -4px,#87bf77 -1px,#b7bd64 1px,#71bf80 6px,#2eb7a4 11px,#38b99e 13px,#07a9c2 18px,#2eb7a4 29px,#1db3af 32px,#2eb7a4 35px,#1db3af 38px,#4dbc92 41px,#2eb7a4 43px,#4dbc92 46px,#38b99e 53px,#4dbc92 76px,#42bb98 79px,#3243ba 83px,#59bd8c 86px,#71bf80 90px,#15b1b4 102px,#25b5a9 110px,#7cbf7b 118px,#4dbc92 123px,#42bb98 127px,#15b1b4 137px,#2eb7a4 146px,#65be86 151px,#71bf80 167px,#42bb98 173px,#3243ba 179px,#2eb7a4 185px,#38b99e 204px,#2eb7a4 218px,#59bd8c 225px,#25b5a9 241px,#42bb98 277px,#c0bc60 308px,#d1bb59 320px)"></i><i style="left:101px;width:1px;background:linear-gradient(#0998d1 -6px,#06a0cd -4px,#0c93d2 -1px,#0aacbe 1px,#108ed2 3px,#1079da 8px,#0f5cdd 11px,#0363e1 13px,#352a87 18px,#353dad 26px,#0f5cdd 29px,#2c4ac7 32px,#0363e1 35px,#2c4ac7 38px,#0871de 41px,#0f5cdd 43px,#0871de 46px,#0363e1 53px,#046de0 56px,#0268e1 62px,#127dd8 72px,#0871de 79px,#3243ba 83px,#1481d6 86px,#1389d3 90px,#2c4ac7 102px,#0363e1 110px,#0c93d2 118px,#127dd8 123px,#127dd8 127px,#0363e1 132px,#2053d4 137px,#0871de 146px,#108ed2 151px,#0998d1 157px,#0c93d2 167px,#1481d6 173px,#3243ba 179px,#0d75dc 185px,#1481d6 198px,#127dd8 218px,#0c93d2 225px,#127dd8 241px,#108ed2 277px,#0aacbe 287px,#65be86 308px,#7cbf7b 320px)"></i><i style="left:102px;width:3px;background:linear-gradient(#2053d4 -6px,#0d75dc -1px,#3637a0 1px,#1079da 3px,#127dd8 8px,#0871de 11px,#1079da 13px,#0f5cdd 16px,#352a87 26px,#046de0 38px,#3637a0 41px,#0d75dc 43px,#127dd8 49px,#2053d4 59px,#0363e1 62px,#2053d4 65px,#0871de 69px,#3243ba 72px,#1485d4 79px,#06a7c6 86px,#079ccf 90px,#0aacbe 94px,#1485d4 98px,#046de0 102px,#3243ba 110px,#0363e1 114px,#3243ba 118px,#046de0 127px,#0268e1 132px,#127dd8 137px,#0871de 146px,#108ed2 173px,#1389d3 185px,#108ed2 198px,#1485d4 211px,#2c4ac7 218px,#079ccf 225px,#07a9c2 241px,#06a4ca 258px,#42bb98 277px,#42bb98 287px,#87bf77 297px,#15b1b4 308px,#06a7c6 320px)"></i><i style="left:105px;width:3px;background:linear-gradient(#353dad -6px,#2c4ac7 1px,#352a87 3px,#352a87 41px,#0f5cdd 49px,#0d75dc 53px,#363093 62px,#0f5cdd 72px,#3243ba 76px,#3243ba 79px,#046de0 83px,#1481d6 90px,#2053d4 94px,#0f5cdd 98px,#353dad 106px,#2053d4 110px,#1079da 114px,#0f5cdd 118px,#1485d4 123px,#108ed2 127px,#1481d6 132px,#108ed2 157px,#1079da 167px,#1079da 179px,#0268e1 185px,#127dd8 191px,#127dd8 198px,#0268e1 204px,#0363e1 211px,#046de0 218px,#2c4ac7 225px,#1389d3 233px,#0c93d2 241px,#0aacbe 249px,#1db3af 267px,#1389d3 287px,#06a7c6 308px,#06a0cd 320px)"></i><i style="left:108px;width:3px;background:linear-gradient(#3637a0 -6px,#352a87 1px,#353dad 6px,#0871de 8px,#046de0 13px,#1079da 21px,#046de0 29px,#127dd8 32px,#3243ba 35px,#1485d4 38px,#1389d3 41px,#127dd8 43px,#1481d6 46px,#0363e1 53px,#1485d4 59px,#0871de 83px,#1481d6 90px,#1079da 94px,#1485d4 98px,#046de0 102px,#1079da 106px,#2053d4 110px,#127dd8 114px,#0c93d2 118px,#127dd8 127px,#353dad 132px,#363093 137px,#0268e1 146px,#0871de 157px,#108ed2 167px,#079ccf 179px,#1481d6 185px,#108ed2 191px,#0871de 204px,#1485d4 211px,#0d75dc 218px,#0c93d2 225px,#108ed2 249px,#0998d1 258px,#1481d6 267px,#1079da 277px,#079ccf 320px)"></i><i style="left:111px;width:3px;background:linear-gradient(#0363e1 -6px,#1481d6 -1px,#1485d4 1px,#0268e1 6px,#0871de 8px,#0f5cdd 11px,#127dd8 13px,#0871de 16px,#0d75dc 18px,#0363e1 21px,#0268e1 29px,#07a9c2 38px,#42bb98 41px,#1389d3 53px,#2c4ac7 56px,#0998d1 59px,#1485d4 62px,#1481d6 65px,#0871de 69px,#0871de 72px,#1485d4 76px,#1079da 79px,#1389d3 86px,#06a0cd 90px,#1481d6 94px,#1389d3 98px,#1079da 102px,#2053d4 106px,#1485d4 110px,#127dd8 114px,#0998d1 118px,#0998d1 123px,#1481d6 132px,#0c93d2 151px,#06a4ca 157px,#0faeb9 173px,#0998d1 179px,#1485d4 191px,#1481d6 211px,#079ccf 233px,#2c4ac7 241px,#15b1b4 249px,#25b5a9 258px,#71bf80 267px,#65be86 277px,#92bf73 287px,#7cbf7b 297px,#38b99e 308px,#1db3af 320px)"></i><i style="left:114px;width:1px;background:linear-gradient(#1485d4 -6px,#108ed2 -4px,#1389d3 -1px,#353dad 1px,#0d75dc 3px,#353dad 6px,#2c4ac7 8px,#352a87 16px,#2c4ac7 24px,#2053d4 29px,#3243ba 32px,#2c4ac7 35px,#1481d6 38px,#0363e1 41px,#1079da 43px,#0f5cdd 46px,#0363e1 49px,#3243ba 56px,#0871de 59px,#046de0 69px,#1485d4 76px,#0d75dc 79px,#1485d4 90px,#1079da 94px,#1079da 98px,#0268e1 106px,#353dad 110px,#352a87 114px,#3637a0 123px,#0d75dc 127px,#1079da 132px,#079ccf 137px,#06a4ca 146px,#15b1b4 151px,#38b99e 191px,#1db3af 211px,#3243ba 218px,#0aacbe 225px,#1db3af 267px,#06a0cd 287px,#108ed2 308px,#0c93d2 320px)"></i><i style="left:115px;width:1px;background:linear-gradient(#1485d4 -6px,#108ed2 -4px,#1389d3 -1px,#353dad 1px,#0d75dc 3px,#353dad 6px,#2c4ac7 8px,#352a87 16px,#2c4ac7 24px,#2053d4 29px,#3243ba 32px,#2c4ac7 35px,#1481d6 38px,#0363e1 41px,#1079da 43px,#0f5cdd 46px,#0363e1 49px,#3243ba 56px,#0d75dc 59px,#127dd8 69px,#0998d1 76px,#0c93d2 79px,#06a7c6 90px,#07a9c2 118px,#3637a0 123px,#1db3af 127px,#42bb98 141px,#4dbc92 179px,#42bb98 211px,#3243ba 218px,#42bb98 225px,#7cbf7b 267px,#59bd8c 320px)"></i><i style="left:116px;width:1px;background:linear-gradient(#079ccf -6px,#079ccf -1px,#353dad 1px,#108ed2 3px,#353dad 6px,#127dd8 8px,#1079da 18px,#1389d3 24px,#3243ba 26px,#0c93d2 29px,#108ed2 32px,#2c4ac7 35px,#07a9c2 38px,#06a0cd 41px,#07a9c2 43px,#06a7c6 56px,#0faeb9 62px,#25b5a9 90px,#07a9c2 118px,#3637a0 123px,#1db3af 127px,#42bb98 141px,#4dbc92 179px,#42bb98 211px,#3243ba 218px,#42bb98 225px,#7cbf7b 267px,#59bd8c 320px)"></i><i style="left:117px;width:3px;background:linear-gradient(#353dad -6px,#0faeb9 -4px,#06a4ca 1px,#06a0cd 6px,#079ccf 13px,#07a9c2 16px,#2053d4 18px,#0aacbe 21px,#07a9c2 29px,#15b1b4 35px,#0faeb9 56px,#15b1b4 76px,#06a4ca 86px,#4dbc92 118px,#3243ba 123px,#4dbc92 127px,#4dbc92 141px,#2053d4 146px,#42bb98 151px,#59bd8c 157px,#4dbc92 162px,#71bf80 185px,#3243ba 191px,#92bf73 198px,#c0bc60 225px,#7cbf7b 267px,#7cbf7b 308px,#87bf77 320px)"></i><i style="left:120px;width:1px;background:linear-gradient(#0998d1 -6px,#06a4ca 1px,#0c93d2 8px,#07a9c2 21px,#0f5cdd 24px,#06a7c6 26px,#06a0cd 29px,#06a7c6 35px,#06a4ca 41px,#15b1b4 49px,#0aacbe 72px,#06a4ca 76px,#1db3af 102px,#4dbc92 137px,#2eb7a4 141px,#87bf77 191px,#71bf80 211px,#71bf80 225px,#71bf80 241px,#353dad 249px,#7cbf7b 258px,#7cbf7b 267px,#9cbf6f 287px,#9cbf6f 320px)"></i><i style="left:121px;width:1px;background:linear-gradient(#0d75dc -6px,#1079da -1px,#1389d3 1px,#0871de 6px,#0871de 11px,#1485d4 13px,#0998d1 21px,#0f5cdd 24px,#0998d1 26px,#1389d3 29px,#079ccf 35px,#0998d1 41px,#0faeb9 49px,#0aacbe 72px,#06a4ca 76px,#1db3af 102px,#4dbc92 137px,#2eb7a4 141px,#87bf77 191px,#71bf80 211px,#71bf80 225px,#71bf80 241px,#353dad 249px,#7cbf7b 258px,#7cbf7b 267px,#9cbf6f 287px,#9cbf6f 320px)"></i><i style="left:122px;width:1px;background:linear-gradient(#353dad -6px,#3637a0 -4px,#3243ba -1px,#046de0 1px,#3637a0 6px,#363093 11px,#0f5cdd 13px,#0f5cdd 16px,#0871de 21px,#0f5cdd 24px,#0268e1 26px,#3243ba 29px,#0f5cdd 35px,#3637a0 38px,#0363e1 46px,#127dd8 49px,#0871de 53px,#1079da 56px,#046de0 59px,#046de0 62px,#127dd8 65px,#0871de 69px,#0d75dc 72px,#0363e1 76px,#108ed2 86px,#079ccf 94px,#0aacbe 102px,#25b5a9 118px,#4dbc92 137px,#2eb7a4 141px,#87bf77 191px,#71bf80 211px,#71bf80 225px,#71bf80 241px,#353dad 249px,#7cbf7b 258px,#7cbf7b 267px,#9cbf6f 287px,#9cbf6f 320px)"></i><i style="left:123px;width:1px;background:linear-gradient(#0d75dc -6px,#046de0 -4px,#0d75dc -1px,#363093 6px,#0f5cdd 11px,#352a87 13px,#363093 18px,#2c4ac7 21px,#353dad 24px,#046de0 26px,#0d75dc 29px,#2053d4 35px,#046de0 38px,#0268e1 46px,#1079da 53px,#0871de 56px,#127dd8 62px,#2c4ac7 69px,#0363e1 72px,#353dad 76px,#0268e1 79px,#0f5cdd 83px,#127dd8 90px,#127dd8 94px,#0998d1 98px,#079ccf 106px,#353dad 110px,#1079da 114px,#1079da 118px,#0faeb9 137px,#079ccf 141px,#079ccf 157px,#38b99e 167px,#87bf77 185px,#4dbc92 198px,#65be86 204px,#59bd8c 225px,#25b5a9 267px,#0aacbe 287px,#2eb7a4 320px)"></i><i style="left:124px;width:2px;background:linear-gradient(#0d75dc -6px,#046de0 -4px,#0d75dc -1px,#363093 6px,#0f5cdd 11px,#352a87 13px,#363093 18px,#2c4ac7 21px,#353dad 24px,#046de0 26px,#0d75dc 29px,#2053d4 35px,#046de0 38px,#0268e1 46px,#1079da 53px,#0871de 56px,#127dd8 62px,#2c4ac7 69px,#0363e1 72px,#353dad 76px,#0268e1 79px,#0f5cdd 83px,#127dd8 90px,#127dd8 94px,#0998d1 98px,#079ccf 106px,#353dad 110px,#1079da 114px,#0d75dc 118px,#06a4ca 137px,#1481d6 141px,#127dd8 146px,#0363e1 151px,#0f5cdd 157px,#0d75dc 162px,#079ccf 167px,#07a9c2 179px,#06a0cd 191px,#1389d3 198px,#06a0cd 204px,#079ccf 218px,#0aacbe 233px,#06a4ca 287px,#1db3af 308px,#2eb7a4 320px)"></i><i style="left:126px;width:3px;background:linear-gradient(#046de0 -6px,#2c4ac7 -4px,#2c4ac7 1px,#046de0 3px,#046de0 6px,#2c4ac7 8px,#046de0 11px,#0d75dc 16px,#0f5cdd 26px,#1079da 35px,#1389d3 38px,#1481d6 43px,#108ed2 46px,#1389d3 53px,#353dad 56px,#0d75dc 59px,#0871de 62px,#353dad 69px,#046de0 86px,#108ed2 94px,#1481d6 98px,#079ccf 102px,#1389d3 110px,#353dad 118px,#0f5cdd 123px,#0f5cdd 127px,#0d75dc 132px,#0871de 137px,#108ed2 141px,#0aacbe 151px,#1389d3 167px,#0d75dc 173px,#07a9c2 191px,#2053d4 198px,#0faeb9 204px,#06a4ca 211px,#0aacbe 218px,#1485d4 233px,#079ccf 249px,#06a4ca 297px,#2eb7a4 320px)"></i><i style="left:129px;width:3px;background:linear-gradient(#2053d4 -6px,#3243ba 1px,#352a87 8px,#363093 24px,#1485d4 29px,#046de0 35px,#127dd8 38px,#127dd8 41px,#352a87 49px,#2053d4 59px,#0363e1 62px,#3243ba 65px,#3243ba 69px,#352a87 72px,#3637a0 79px,#0c93d2 86px,#2c4ac7 90px,#1389d3 94px,#0871de 98px,#046de0 106px,#127dd8 110px,#046de0 114px,#1481d6 118px,#1481d6 127px,#0871de 132px,#1389d3 141px,#0d75dc 146px,#0871de 157px,#1481d6 162px,#1389d3 185px,#3243ba 204px,#0268e1 211px,#1485d4 249px,#0998d1 258px,#108ed2 267px,#06a4ca 277px,#1485d4 297px,#0c93d2 308px,#127dd8 320px)"></i><i style="left:132px;width:3px;background:linear-gradient(#0363e1 -6px,#0363e1 -4px,#0871de -1px,#046de0 3px,#2053d4 6px,#0f5cdd 8px,#353dad 11px,#0268e1 16px,#1389d3 18px,#046de0 21px,#046de0 29px,#2c4ac7 32px,#0363e1 35px,#3243ba 38px,#2c4ac7 41px,#352a87 46px,#363093 62px,#353dad 65px,#352a87 69px,#353dad 72px,#352a87 76px,#0268e1 83px,#0268e1 86px,#0d75dc 90px,#3637a0 98px,#2c4ac7 110px,#0871de 123px,#1485d4 127px,#108ed2 141px,#2053d4 157px,#0871de 162px,#0871de 167px,#1485d4 173px,#108ed2 179px,#363093 198px,#06a7c6 225px,#07a9c2 249px,#1485d4 258px,#06a0cd 267px,#0c93d2 277px,#07a9c2 287px,#0faeb9 297px,#06a7c6 320px)"></i><i style="left:135px;width:1px;background:linear-gradient(#046de0 -6px,#2c4ac7 -4px,#3637a0 8px,#2c4ac7 13px,#0871de 16px,#046de0 18px,#1481d6 21px,#1481d6 26px,#0c93d2 29px,#0d75dc 35px,#1079da 38px,#3637a0 41px,#1481d6 43px,#0998d1 49px,#2053d4 53px,#1389d3 56px,#0f5cdd 59px,#0268e1 65px,#0871de 72px,#2c4ac7 76px,#0d75dc 79px,#1079da 90px,#0363e1 94px,#0363e1 102px,#0871de 106px,#0268e1 110px,#1481d6 118px,#0871de 123px,#1485d4 127px,#0871de 132px,#046de0 137px,#0998d1 146px,#06a0cd 157px,#046de0 173px,#0871de 179px,#0998d1 198px,#108ed2 211px,#0998d1 225px,#0c93d2 241px,#06a0cd 249px,#1389d3 258px,#06a0cd 267px,#0c93d2 287px,#06a4ca 297px,#0faeb9 320px)"></i><i style="left:136px;width:1px;background:linear-gradient(#1485d4 -6px,#0871de -1px,#3243ba 1px,#3637a0 3px,#046de0 6px,#1079da 13px,#1389d3 16px,#1485d4 18px,#0998d1 21px,#0998d1 26px,#06a4ca 29px,#108ed2 35px,#0c93d2 38px,#3637a0 41px,#0998d1 43px,#06a7c6 49px,#2053d4 53px,#06a0cd 56px,#1481d6 59px,#108ed2 72px,#2c4ac7 76px,#0c93d2 79px,#0c93d2 90px,#1485d4 94px,#1389d3 110px,#079ccf 118px,#108ed2 123px,#06a0cd 127px,#108ed2 132px,#0998d1 141px,#06a7c6 146px,#0aacbe 157px,#108ed2 173px,#06a7c6 198px,#06a4ca 241px,#07a9c2 249px,#079ccf 258px,#07a9c2 267px,#06a0cd 287px,#15b1b4 320px)"></i><i style="left:137px;width:1px;background:linear-gradient(#079ccf -6px,#108ed2 -1px,#3243ba 1px,#3637a0 3px,#108ed2 6px,#0aacbe 29px,#06a7c6 38px,#3637a0 41px,#0aacbe 43px,#15b1b4 49px,#2053d4 53px,#0faeb9 56px,#06a4ca 59px,#07a9c2 72px,#2c4ac7 76px,#0aacbe 79px,#07a9c2 110px,#0faeb9 118px,#07a9c2 123px,#15b1b4 127px,#07a9c2 137px,#25b5a9 157px,#07a9c2 179px,#15b1b4 204px,#15b1b4 249px,#0aacbe 258px,#0aacbe 277px,#1db3af 320px)"></i><i style="left:138px;width:1px;background:linear-gradient(#0998d1 -6px,#0998d1 3px,#1485d4 8px,#06a4ca 18px,#108ed2 29px,#0aacbe 41px,#0c93d2 56px,#0998d1 72px,#079ccf 79px,#06a0cd 102px,#15b1b4 127px,#07a9c2 146px,#0faeb9 179px,#0faeb9 204px,#079ccf 225px,#06a7c6 233px,#3243ba 241px,#0aacbe 249px,#0aacbe 267px,#06a7c6 308px,#0faeb9 320px)"></i><i style="left:139px;width:1px;background:linear-gradient(#1079da -6px,#127dd8 3px,#0f5cdd 8px,#0d75dc 13px,#1485d4 16px,#1389d3 21px,#0268e1 29px,#127dd8 32px,#1481d6 35px,#079ccf 38px,#06a0cd 41px,#0d75dc 49px,#0363e1 56px,#0268e1 59px,#2053d4 62px,#0268e1 72px,#1079da 76px,#046de0 94px,#0d75dc 102px,#0c93d2 114px,#108ed2 118px,#06a4ca 127px,#0c93d2 132px,#108ed2 146px,#0c93d2 157px,#108ed2 173px,#06a7c6 191px,#06a0cd 204px,#1079da 225px,#1389d3 233px,#3243ba 241px,#06a0cd 249px,#07a9c2 258px,#108ed2 287px,#0c93d2 308px,#06a7c6 320px)"></i><i style="left:140px;width:1px;background:linear-gradient(#2053d4 -6px,#0363e1 3px,#352a87 8px,#352a87 11px,#0871de 16px,#1079da 18px,#352a87 29px,#0f5cdd 32px,#0363e1 35px,#1389d3 38px,#108ed2 41px,#0268e1 46px,#3637a0 49px,#352a87 59px,#352a87 72px,#353dad 76px,#352a87 86px,#3637a0 102px,#2053d4 106px,#2053d4 110px,#0871de 114px,#0871de 118px,#1485d4 123px,#1389d3 127px,#0d75dc 132px,#046de0 146px,#127dd8 151px,#127dd8 167px,#0871de 173px,#0c93d2 185px,#0998d1 198px,#2c4ac7 225px,#0871de 233px,#3243ba 241px,#108ed2 249px,#06a0cd 258px,#1079da 287px,#127dd8 308px,#079ccf 320px)"></i><i style="left:141px;width:3px;background:linear-gradient(#0f5cdd -6px,#108ed2 1px,#07a9c2 3px,#15b1b4 6px,#07a9c2 13px,#1079da 18px,#046de0 24px,#353dad 26px,#2c4ac7 35px,#1079da 41px,#0363e1 43px,#0268e1 49px,#0f5cdd 53px,#1079da 56px,#046de0 59px,#0d75dc 62px,#0d75dc 65px,#079ccf 76px,#046de0 90px,#046de0 98px,#352a87 102px,#1485d4 110px,#3637a0 114px,#2053d4 118px,#0aacbe 123px,#06a7c6 132px,#1485d4 137px,#2c4ac7 141px,#0aacbe 146px,#06a0cd 151px,#07a9c2 167px,#0c93d2 173px,#06a4ca 179px,#06a0cd 185px,#1db3af 198px,#07a9c2 204px,#07a9c2 211px,#0c93d2 218px,#0c93d2 225px,#07a9c2 233px,#079ccf 241px,#0faeb9 249px,#07a9c2 258px,#2eb7a4 277px,#1db3af 287px,#2053d4 297px,#42bb98 308px,#7cbf7b 320px)"></i><i style="left:144px;width:3px;background:linear-gradient(#0f5cdd -6px,#0f5cdd -1px,#0d75dc 3px,#0998d1 6px,#06a0cd 8px,#0998d1 13px,#079ccf 16px,#353dad 18px,#127dd8 21px,#1481d6 24px,#0268e1 26px,#2053d4 29px,#0871de 32px,#0998d1 35px,#0998d1 38px,#07a9c2 41px,#06a0cd 43px,#07a9c2 46px,#0aacbe 49px,#25b5a9 53px,#079ccf 59px,#108ed2 69px,#0871de 72px,#127dd8 79px,#06a4ca 86px,#06a4ca 90px,#1079da 94px,#0d75dc 98px,#3243ba 102px,#353dad 106px,#0871de 110px,#0363e1 114px,#127dd8 118px,#0d75dc 132px,#0363e1 137px,#0c93d2 157px,#079ccf 167px,#06a7c6 173px,#06a4ca 179px,#3243ba 185px,#3243ba 191px,#38b99e 198px,#38b99e 204px,#65be86 211px,#0f5cdd 218px,#0f5cdd 225px,#2eb7a4 233px,#06a7c6 267px,#15b1b4 277px,#07a9c2 287px,#42bb98 308px,#38b99e 320px)"></i><i style="left:147px;width:3px;background:linear-gradient(#1485d4 -6px,#046de0 -1px,#363093 1px,#2c4ac7 3px,#2c4ac7 6px,#1079da 11px,#1485d4 13px,#1079da 16px,#127dd8 21px,#353dad 32px,#2c4ac7 41px,#0268e1 43px,#2c4ac7 46px,#0871de 49px,#046de0 59px,#3637a0 62px,#0871de 65px,#0363e1 69px,#0363e1 72px,#3637a0 76px,#1485d4 83px,#0871de 94px,#3243ba 98px,#3637a0 102px,#127dd8 114px,#07a9c2 123px,#1389d3 127px,#0c93d2 132px,#1481d6 141px,#079ccf 151px,#0c93d2 157px,#06a4ca 162px,#0998d1 179px,#06a0cd 191px,#0c93d2 204px,#06a4ca 218px,#0998d1 233px,#079ccf 241px,#0d75dc 267px,#046de0 287px,#0aacbe 320px)"></i><i style="left:150px;width:2px;background:linear-gradient(#0363e1 -6px,#1079da -4px,#046de0 -1px,#046de0 3px,#0f5cdd 6px,#1481d6 8px,#127dd8 13px,#0363e1 16px,#127dd8 18px,#1079da 26px,#0998d1 29px,#2c4ac7 35px,#0d75dc 38px,#0f5cdd 41px,#0f5cdd 43px,#3243ba 46px,#3243ba 53px,#0871de 62px,#046de0 65px,#3637a0 72px,#352a87 76px,#2053d4 79px,#046de0 86px,#2c4ac7 90px,#0d75dc 98px,#3637a0 102px,#1485d4 110px,#0998d1 118px,#1481d6 123px,#353dad 127px,#1485d4 132px,#0d75dc 137px,#1389d3 146px,#353dad 151px,#1481d6 157px,#0c93d2 162px,#1485d4 167px,#0c93d2 173px,#1389d3 179px,#079ccf 185px,#1481d6 191px,#1389d3 198px,#06a4ca 204px,#07a9c2 225px,#38b99e 241px,#15b1b4 258px,#7cbf7b 277px,#aebe67 297px,#a5be6b 308px,#42bb98 320px)"></i><i style="left:152px;width:1px;background:linear-gradient(#1389d3 -6px,#079ccf -4px,#108ed2 -1px,#108ed2 3px,#1485d4 6px,#06a0cd 8px,#06a0cd 13px,#1485d4 16px,#06a0cd 18px,#079ccf 26px,#0faeb9 29px,#079ccf 32px,#2c4ac7 35px,#0998d1 38px,#1485d4 41px,#1079da 53px,#0c93d2 62px,#108ed2 65px,#2c4ac7 69px,#0871de 72px,#0268e1 76px,#1485d4 83px,#108ed2 86px,#1079da 90px,#0c93d2 98px,#3637a0 102px,#1389d3 106px,#0aacbe 114px,#0aacbe 118px,#06a0cd 123px,#353dad 127px,#06a0cd 132px,#108ed2 137px,#06a4ca 146px,#353dad 151px,#079ccf 157px,#06a7c6 162px,#06a0cd 167px,#06a7c6 173px,#06a0cd 179px,#0aacbe 185px,#079ccf 191px,#06a0cd 198px,#0faeb9 204px,#15b1b4 225px,#59bd8c 241px,#2eb7a4 258px,#87bf77 277px,#b7bd64 297px,#aebe67 308px,#4dbc92 320px)"></i><i style="left:153px;width:2px;background:linear-gradient(#fec832 -6px,#d1bb59 6px,#fec832 26px,#e1b952 43px,#c0bc60 53px,#e1b952 62px,#c8bc5d 65px,#c0bc60 79px,#f8bb44 102px,#d1bb59 123px,#d1bb59 146px,#b7bd64 157px,#c8bc5d 162px,#b7bd64 179px,#aebe67 191px,#92bf73 225px,#c0bc60 241px,#c0bc60 258px,#71bf80 287px,#87bf77 308px,#9cbf6f 320px)"></i><i style="left:155px;width:1px;background:linear-gradient(#d9ba56 -6px,#92bf73 1px,#7cbf7b 6px,#aebe67 16px,#d9ba56 26px,#aebe67 41px,#7cbf7b 46px,#65be86 53px,#9cbf6f 62px,#71bf80 65px,#65be86 79px,#aebe67 98px,#c8bc5d 102px,#92bf73 118px,#9cbf6f 146px,#7cbf7b 157px,#92bf73 162px,#7cbf7b 173px,#92bf73 185px,#65be86 198px,#7cbf7b 218px,#65be86 225px,#a5be6b 241px,#aebe67 258px,#4dbc92 287px,#42bb98 297px,#87bf77 320px)"></i><i style="left:156px;width:3px;background:linear-gradient(#2053d4 -6px,#046de0 -4px,#2053d4 1px,#0d75dc 3px,#079ccf 11px,#1481d6 13px,#0d75dc 16px,#0c93d2 18px,#046de0 24px,#1481d6 26px,#0f5cdd 29px,#127dd8 32px,#0268e1 35px,#0871de 41px,#0363e1 43px,#0871de 46px,#2053d4 49px,#06a0cd 59px,#1db3af 62px,#06a4ca 69px,#2053d4 72px,#0c93d2 76px,#127dd8 79px,#1481d6 83px,#0d75dc 86px,#1485d4 94px,#0363e1 102px,#1481d6 110px,#1481d6 114px,#0998d1 118px,#127dd8 127px,#0d75dc 137px,#0998d1 162px,#07a9c2 167px,#15b1b4 179px,#0faeb9 185px,#2053d4 191px,#353dad 198px,#15b1b4 204px,#15b1b4 218px,#0aacbe 225px,#42bb98 233px,#3637a0 241px,#38b99e 249px,#87bf77 258px,#7cbf7b 267px,#c8bc5d 287px,#a5be6b 297px,#aebe67 308px,#9cbf6f 320px)"></i><i style="left:159px;width:3px;background:linear-gradient(#352a87 -6px,#3243ba 3px,#2053d4 11px,#353dad 13px,#2c4ac7 16px,#363093 29px,#363093 35px,#2053d4 41px,#2053d4 53px,#046de0 56px,#2053d4 59px,#0f5cdd 65px,#352a87 69px,#3637a0 79px,#3243ba 83px,#1481d6 86px,#108ed2 90px,#1079da 94px,#3637a0 98px,#2053d4 110px,#352a87 118px,#3243ba 127px,#0871de 132px,#3243ba 137px,#0871de 141px,#0f5cdd 146px,#046de0 157px,#1389d3 162px,#1485d4 167px,#079ccf 179px,#1389d3 198px,#0998d1 204px,#1485d4 218px,#2c4ac7 225px,#1079da 233px,#1485d4 267px,#0998d1 277px,#0998d1 287px,#0faeb9 297px,#0aacbe 320px)"></i><i style="left:162px;width:3px;background:linear-gradient(#353dad -6px,#2053d4 -1px,#352a87 11px,#3243ba 13px,#352a87 16px,#352a87 24px,#0363e1 26px,#353dad 29px,#3637a0 32px,#2053d4 35px,#0f5cdd 46px,#1079da 49px,#353dad 56px,#352a87 62px,#2c4ac7 69px,#0d75dc 72px,#1079da 83px,#0363e1 90px,#0268e1 102px,#079ccf 118px,#079ccf 132px,#06a7c6 137px,#06a4ca 146px,#15b1b4 151px,#0f5cdd 157px,#06a7c6 162px,#0faeb9 173px,#1389d3 198px,#06a0cd 204px,#06a4ca 218px,#1db3af 225px,#38b99e 241px,#0faeb9 249px,#0faeb9 267px,#353dad 277px,#07a9c2 287px,#0aacbe 308px,#3243ba 320px)"></i><i style="left:165px;width:3px;background:linear-gradient(#0363e1 -6px,#3243ba -4px,#0363e1 -1px,#2c4ac7 3px,#2053d4 13px,#3637a0 16px,#0f5cdd 18px,#0363e1 21px,#1079da 24px,#108ed2 32px,#1485d4 35px,#046de0 38px,#0d75dc 41px,#3243ba 46px,#3637a0 53px,#0f5cdd 56px,#1079da 62px,#3243ba 65px,#1481d6 69px,#0998d1 72px,#0998d1 76px,#3637a0 90px,#352a87 102px,#2053d4 106px,#0363e1 123px,#2c4ac7 137px,#1389d3 157px,#0c93d2 162px,#0faeb9 167px,#15b1b4 173px,#4dbc92 179px,#06a4ca 198px,#07a9c2 204px,#0c93d2 218px,#0998d1 225px,#07a9c2 233px,#06a4ca 241px,#0faeb9 258px,#06a7c6 267px,#06a4ca 277px,#0c93d2 287px,#06a4ca 297px,#0998d1 320px)"></i><i style="left:168px;width:3px;background:linear-gradient(#3243ba -6px,#3637a0 -4px,#2c4ac7 -1px,#352a87 3px,#352a87 13px,#2c4ac7 16px,#127dd8 18px,#127dd8 26px,#1389d3 41px,#0d75dc 49px,#0363e1 53px,#1481d6 59px,#1079da 62px,#0c93d2 69px,#108ed2 76px,#079ccf 79px,#2c4ac7 90px,#046de0 94px,#1485d4 114px,#0c93d2 118px,#1485d4 127px,#1389d3 132px,#0871de 137px,#0998d1 151px,#108ed2 162px,#0998d1 173px,#127dd8 191px,#0f5cdd 198px,#1481d6 204px,#127dd8 211px,#07a9c2 218px,#15b1b4 225px,#3243ba 233px,#1db3af 241px,#65be86 258px,#38b99e 287px,#3243ba 297px,#38b99e 308px,#59bd8c 320px)"></i><i style="left:171px;width:3px;background:linear-gradient(#0d75dc -6px,#353dad -4px,#363093 1px,#079ccf 8px,#1481d6 11px,#1079da 13px,#3243ba 18px,#3637a0 21px,#2053d4 26px,#363093 41px,#0268e1 46px,#046de0 53px,#0363e1 56px,#0363e1 62px,#352a87 69px,#352a87 83px,#3243ba 86px,#0f5cdd 94px,#0871de 102px,#0363e1 110px,#353dad 114px,#2c4ac7 123px,#1079da 137px,#1079da 157px,#0363e1 162px,#0d75dc 167px,#2c4ac7 173px,#2053d4 185px,#0871de 191px,#0871de 198px,#108ed2 211px,#0faeb9 218px,#15b1b4 225px,#108ed2 241px,#353dad 249px,#0871de 267px,#0c93d2 308px,#06a4ca 320px)"></i><i style="left:174px;width:1px;background:linear-gradient(#0d75dc -6px,#1481d6 1px,#363093 8px,#06a4ca 18px,#0871de 24px,#3637a0 26px,#352a87 29px,#3243ba 35px,#352a87 38px,#3637a0 43px,#352a87 46px,#352a87 53px,#1485d4 65px,#127dd8 69px,#06a4ca 76px,#06a7c6 79px,#1389d3 83px,#06a4ca 86px,#127dd8 94px,#108ed2 98px,#1481d6 102px,#0c93d2 106px,#1485d4 110px,#06a0cd 114px,#2053d4 118px,#06a4ca 123px,#06a0cd 137px,#108ed2 146px,#06a0cd 157px,#127dd8 173px,#1481d6 185px,#0c93d2 191px,#3637a0 198px,#0c93d2 204px,#06a4ca 211px,#079ccf 218px,#25b5a9 233px,#0faeb9 241px,#59bd8c 258px,#3243ba 267px,#38b99e 277px,#2eb7a4 287px,#59bd8c 297px,#25b5a9 320px)"></i><i style="left:175px;width:1px;background:linear-gradient(#1389d3 -6px,#0c93d2 1px,#0268e1 8px,#07a9c2 18px,#0f5cdd 29px,#0871de 32px,#3243ba 35px,#046de0 38px,#0268e1 41px,#0d75dc 43px,#0268e1 46px,#127dd8 56px,#06a0cd 65px,#079ccf 69px,#15b1b4 79px,#06a4ca 83px,#0faeb9 86px,#06a0cd 94px,#06a7c6 98px,#06a4ca 102px,#0aacbe 106px,#06a7c6 110px,#15b1b4 114px,#2053d4 118px,#1db3af 123px,#15b1b4 137px,#07a9c2 146px,#15b1b4 157px,#06a4ca 173px,#06a4ca 185px,#0aacbe 191px,#3637a0 198px,#0aacbe 204px,#1db3af 211px,#0faeb9 218px,#42bb98 233px,#38b99e 241px,#71bf80 258px,#3243ba 267px,#59bd8c 277px,#4dbc92 287px,#71bf80 297px,#4dbc92 320px)"></i><i style="left:176px;width:1px;background:linear-gradient(#06a0cd -6px,#06a0cd 3px,#108ed2 8px,#15b1b4 18px,#108ed2 29px,#0998d1 32px,#3243ba 35px,#0998d1 38px,#06a4ca 56px,#1db3af 65px,#25b5a9 72px,#42bb98 79px,#25b5a9 83px,#38b99e 86px,#1db3af 94px,#4dbc92 114px,#2053d4 118px,#4dbc92 123px,#42bb98 151px,#2eb7a4 185px,#42bb98 191px,#3637a0 198px,#42bb98 204px,#71bf80 233px,#87bf77 258px,#3243ba 267px,#7cbf7b 277px,#71bf80 320px)"></i><i style="left:177px;width:2px;background:linear-gradient(#1079da -6px,#0998d1 1px,#079ccf 8px,#108ed2 18px,#06a4ca 26px,#3243ba 29px,#06a4ca 32px,#108ed2 41px,#07a9c2 53px,#07a9c2 65px,#0faeb9 72px,#3637a0 76px,#15b1b4 79px,#07a9c2 106px,#1db3af 114px,#15b1b4 118px,#2c4ac7 123px,#0faeb9 127px,#07a9c2 137px,#4dbc92 157px,#1db3af 191px,#38b99e 204px,#353dad 211px,#38b99e 218px,#42bb98 320px)"></i><i style="left:179px;width:1px;background:linear-gradient(#363093 -6px,#1079da 1px,#0871de 3px,#1481d6 6px,#127dd8 8px,#046de0 11px,#0268e1 18px,#1485d4 26px,#3243ba 29px,#1485d4 32px,#0363e1 38px,#0f5cdd 41px,#1389d3 49px,#127dd8 62px,#0c93d2 72px,#3637a0 76px,#0998d1 79px,#108ed2 90px,#1079da 106px,#0c93d2 114px,#1389d3 118px,#2c4ac7 123px,#1485d4 127px,#0d75dc 132px,#0d75dc 137px,#1db3af 157px,#0998d1 191px,#07a9c2 204px,#353dad 211px,#07a9c2 218px,#0faeb9 241px,#06a7c6 249px,#0aacbe 277px,#0faeb9 320px)"></i><i style="left:180px;width:3px;background:linear-gradient(#108ed2 -6px,#0d75dc -4px,#0d75dc 1px,#127dd8 8px,#2053d4 11px,#353dad 13px,#3243ba 16px,#353dad 18px,#0f5cdd 21px,#2053d4 24px,#1481d6 26px,#0c93d2 29px,#3637a0 38px,#2c4ac7 43px,#046de0 46px,#046de0 49px,#108ed2 53px,#127dd8 59px,#06a0cd 62px,#1389d3 69px,#0c93d2 79px,#07a9c2 83px,#2eb7a4 90px,#127dd8 110px,#2053d4 114px,#3243ba 118px,#0871de 132px,#1079da 141px,#0c93d2 146px,#079ccf 151px,#108ed2 157px,#2eb7a4 173px,#2eb7a4 185px,#59bd8c 191px,#65be86 198px,#0faeb9 204px,#1485d4 218px,#1079da 225px,#15b1b4 258px,#06a4ca 267px,#0faeb9 277px,#15b1b4 287px,#07a9c2 297px,#38b99e 308px,#4dbc92 320px)"></i><i style="left:183px;width:3px;background:linear-gradient(#046de0 -6px,#0d75dc -4px,#0c93d2 -1px,#1485d4 3px,#0268e1 6px,#2053d4 8px,#046de0 13px,#0363e1 18px,#0d75dc 21px,#0363e1 24px,#079ccf 29px,#1481d6 32px,#2c4ac7 35px,#2053d4 43px,#363093 49px,#3243ba 53px,#079ccf 59px,#06a7c6 62px,#1079da 76px,#1485d4 90px,#0268e1 94px,#2053d4 98px,#0f5cdd 106px,#353dad 110px,#0268e1 114px,#2c4ac7 118px,#2053d4 123px,#3637a0 127px,#2c4ac7 137px,#3637a0 141px,#0871de 146px,#0268e1 151px,#1481d6 157px,#1485d4 162px,#0871de 173px,#1079da 179px,#0268e1 185px,#1079da 191px,#046de0 198px,#1079da 204px,#1079da 211px,#1389d3 218px,#2c4ac7 225px,#079ccf 233px,#06a7c6 258px,#0c93d2 267px,#079ccf 277px,#127dd8 287px,#06a0cd 297px,#0c93d2 308px,#0c93d2 320px)"></i><i style="left:186px;width:3px;background:linear-gradient(#3637a0 -6px,#1481d6 -1px,#1485d4 1px,#363093 6px,#352a87 13px,#127dd8 21px,#0f5cdd 24px,#046de0 26px,#2c4ac7 29px,#363093 38px,#353dad 41px,#352a87 46px,#352a87 65px,#0f5cdd 72px,#3637a0 76px,#2053d4 83px,#352a87 90px,#353dad 94px,#352a87 102px,#3637a0 114px,#0871de 118px,#1079da 127px,#353dad 132px,#3243ba 137px,#1079da 141px,#2053d4 146px,#0f5cdd 157px,#1485d4 179px,#1485d4 185px,#3243ba 191px,#0c93d2 198px,#046de0 225px,#0268e1 241px,#0d75dc 249px,#0f5cdd 258px,#108ed2 277px,#0998d1 308px,#108ed2 320px)"></i><i style="left:189px;width:3px;background:linear-gradient(#3243ba -6px,#353dad -4px,#0f5cdd -1px,#352a87 8px,#2c4ac7 11px,#352a87 13px,#363093 24px,#0268e1 26px,#353dad 35px,#3637a0 43px,#0871de 53px,#1485d4 59px,#079ccf 62px,#06a4ca 69px,#0c93d2 72px,#0faeb9 76px,#06a0cd 79px,#06a7c6 83px,#06a7c6 90px,#0871de 98px,#0363e1 102px,#1485d4 110px,#0faeb9 114px,#0faeb9 118px,#06a4ca 127px,#06a0cd 132px,#1389d3 137px,#0aacbe 141px,#59bd8c 157px,#0998d1 162px,#108ed2 167px,#2c4ac7 173px,#352a87 179px,#0268e1 185px,#1481d6 198px,#06a7c6 204px,#3637a0 211px,#07a9c2 218px,#0aacbe 225px,#108ed2 241px,#1485d4 258px,#079ccf 267px,#0faeb9 287px,#2eb7a4 308px,#25b5a9 320px)"></i><i style="left:192px;width:3px;background:linear-gradient(#1079da -6px,#1481d6 -4px,#07a9c2 1px,#0998d1 3px,#0998d1 6px,#0d75dc 11px,#0871de 13px,#352a87 18px,#3637a0 24px,#352a87 29px,#353dad 32px,#3637a0 35px,#2c4ac7 38px,#363093 41px,#0f5cdd 43px,#2053d4 62px,#0871de 65px,#0268e1 69px,#108ed2 72px,#06a0cd 76px,#06a0cd 79px,#1079da 86px,#127dd8 90px,#2c4ac7 98px,#353dad 102px,#0268e1 114px,#046de0 118px,#0f5cdd 127px,#0d75dc 141px,#1389d3 146px,#3243ba 151px,#06a0cd 157px,#0c93d2 162px,#3637a0 167px,#353dad 173px,#1481d6 179px,#1485d4 191px,#0998d1 198px,#1485d4 204px,#1db3af 225px,#07a9c2 241px,#353dad 249px,#06a7c6 258px,#25b5a9 277px,#42bb98 308px,#71bf80 320px)"></i><i style="left:195px;width:3px;background:linear-gradient(#1389d3 -6px,#127dd8 -4px,#1389d3 1px,#127dd8 6px,#3637a0 16px,#352a87 24px,#3637a0 29px,#352a87 41px,#3243ba 43px,#0268e1 56px,#2053d4 62px,#046de0 65px,#353dad 72px,#0f5cdd 76px,#353dad 79px,#0268e1 90px,#2053d4 98px,#3637a0 102px,#353dad 110px,#0363e1 118px,#3243ba 132px,#352a87 137px,#3637a0 141px,#0363e1 146px,#1079da 162px,#046de0 167px,#1481d6 173px,#108ed2 191px,#06a7c6 198px,#079ccf 218px,#1485d4 225px,#353dad 233px,#0c93d2 241px,#06a7c6 249px,#0faeb9 267px,#06a7c6 277px,#0faeb9 287px,#06a4ca 308px,#07a9c2 320px)"></i><i style="left:198px;width:3px;background:linear-gradient(#352a87 -6px,#2053d4 -4px,#0268e1 1px,#046de0 6px,#2c4ac7 8px,#1079da 13px,#0aacbe 18px,#046de0 29px,#0c93d2 41px,#0c93d2 43px,#127dd8 46px,#1485d4 49px,#0d75dc 53px,#3637a0 56px,#1389d3 59px,#3637a0 62px,#1079da 65px,#0f5cdd 72px,#0268e1 79px,#3243ba 83px,#353dad 86px,#0f5cdd 90px,#3637a0 94px,#0d75dc 98px,#1485d4 102px,#0871de 118px,#0998d1 127px,#0c93d2 132px,#1481d6 137px,#1485d4 141px,#0871de 146px,#127dd8 151px,#1079da 157px,#079ccf 162px,#42bb98 179px,#92bf73 198px,#1485d4 211px,#1481d6 218px,#2053d4 225px,#2c4ac7 233px,#1079da 241px,#0998d1 258px,#59bd8c 287px,#25b5a9 308px,#0c93d2 320px)"></i><i style="left:201px;width:3px;background:linear-gradient(#0f5cdd -6px,#2053d4 -4px,#3637a0 -1px,#0363e1 1px,#0268e1 3px,#0f5cdd 6px,#0363e1 8px,#1389d3 11px,#046de0 13px,#0d75dc 16px,#0268e1 18px,#127dd8 21px,#127dd8 24px,#0c93d2 26px,#1485d4 29px,#1db3af 38px,#2eb7a4 41px,#0aacbe 46px,#2c4ac7 49px,#108ed2 53px,#108ed2 59px,#127dd8 62px,#108ed2 72px,#1485d4 79px,#046de0 83px,#0871de 94px,#0363e1 98px,#127dd8 102px,#1079da 106px,#108ed2 110px,#06a4ca 127px,#079ccf 132px,#06a4ca 137px,#0c93d2 141px,#1389d3 162px,#06a0cd 167px,#0c93d2 185px,#353dad 191px,#079ccf 198px,#06a0cd 211px,#0998d1 218px,#07a9c2 241px,#079ccf 249px,#0aacbe 258px,#0aacbe 267px,#2eb7a4 277px,#2eb7a4 297px,#07a9c2 320px)"></i><i style="left:204px;width:3px;background:linear-gradient(#0363e1 -6px,#0d75dc -1px,#1389d3 1px,#3637a0 3px,#1389d3 6px,#0871de 11px,#0d75dc 16px,#0f5cdd 18px,#1485d4 24px,#108ed2 26px,#108ed2 29px,#079ccf 32px,#1485d4 35px,#3243ba 38px,#1079da 41px,#2c4ac7 43px,#0363e1 46px,#3637a0 49px,#2c4ac7 53px,#1481d6 56px,#0c93d2 59px,#25b5a9 62px,#1db3af 65px,#108ed2 72px,#127dd8 79px,#127dd8 83px,#0871de 86px,#127dd8 90px,#1485d4 98px,#06a0cd 102px,#06a4ca 106px,#3637a0 110px,#079ccf 114px,#0c93d2 118px,#06a7c6 127px,#06a4ca 132px,#25b5a9 137px,#0998d1 157px,#06a4ca 162px,#25b5a9 167px,#0faeb9 179px,#1079da 198px,#1079da 204px,#0c93d2 211px,#108ed2 218px,#06a0cd 225px,#0c93d2 233px,#0998d1 241px,#2c4ac7 249px,#0c93d2 258px,#0aacbe 277px,#15b1b4 308px,#06a4ca 320px)"></i><i style="left:207px;width:3px;background:linear-gradient(#2c4ac7 -6px,#353dad -4px,#0268e1 1px,#0268e1 3px,#3243ba 6px,#1079da 8px,#352a87 16px,#363093 21px,#2053d4 24px,#0c93d2 26px,#0aacbe 29px,#07a9c2 32px,#046de0 41px,#3637a0 43px,#352a87 53px,#046de0 65px,#0d75dc 76px,#0363e1 79px,#046de0 86px,#2053d4 94px,#0f5cdd 106px,#046de0 114px,#1389d3 118px,#06a4ca 146px,#15b1b4 157px,#108ed2 162px,#2c4ac7 173px,#0363e1 179px,#1079da 185px,#0d75dc 191px,#0c93d2 198px,#0998d1 211px,#1389d3 218px,#06a0cd 225px,#0998d1 233px,#079ccf 241px,#108ed2 249px,#0998d1 267px,#1485d4 277px,#0c93d2 287px,#108ed2 308px,#079ccf 320px)"></i><i style="left:210px;width:3px;background:linear-gradient(#0363e1 -6px,#352a87 -1px,#352a87 11px,#0871de 16px,#1079da 18px,#046de0 24px,#352a87 29px,#3637a0 32px,#363093 43px,#2c4ac7 46px,#352a87 53px,#352a87 65px,#0f5cdd 76px,#0f5cdd 83px,#127dd8 90px,#2053d4 94px,#352a87 106px,#3637a0 110px,#127dd8 114px,#1481d6 118px,#3243ba 123px,#1079da 127px,#2053d4 132px,#0f5cdd 137px,#1079da 141px,#1079da 146px,#0998d1 151px,#06a7c6 157px,#046de0 179px,#108ed2 204px,#1389d3 211px,#0d75dc 218px,#108ed2 225px,#127dd8 241px,#108ed2 258px,#07a9c2 267px,#25b5a9 297px,#07a9c2 320px)"></i><i style="left:213px;width:3px;background:linear-gradient(#352a87 -6px,#3637a0 8px,#353dad 13px,#352a87 16px,#3637a0 18px,#352a87 24px,#3243ba 26px,#0363e1 32px,#2053d4 35px,#0268e1 41px,#0363e1 43px,#0d75dc 49px,#3243ba 59px,#352a87 76px,#2c4ac7 79px,#3243ba 83px,#0268e1 86px,#0363e1 90px,#353dad 94px,#1485d4 98px,#079ccf 106px,#0871de 114px,#0363e1 123px,#2053d4 132px,#046de0 137px,#127dd8 146px,#3637a0 151px,#1389d3 162px,#046de0 167px,#1481d6 173px,#0998d1 185px,#108ed2 191px,#07a9c2 198px,#07a9c2 211px,#0faeb9 218px,#353dad 225px,#06a7c6 233px,#06a4ca 241px,#2c4ac7 249px,#108ed2 258px,#06a0cd 277px,#3637a0 287px,#108ed2 297px,#0aacbe 320px)"></i><i style="left:216px;width:3px;background:linear-gradient(#3243ba -6px,#2053d4 -4px,#352a87 16px,#352a87 26px,#3243ba 29px,#3243ba 32px,#363093 35px,#2053d4 38px,#2c4ac7 41px,#0363e1 43px,#353dad 49px,#3637a0 56px,#352a87 69px,#2053d4 72px,#2c4ac7 76px,#0268e1 83px,#0268e1 90px,#0871de 94px,#3637a0 98px,#0f5cdd 102px,#363093 106px,#0268e1 110px,#127dd8 118px,#1079da 123px,#079ccf 132px,#1079da 141px,#2053d4 146px,#1079da 157px,#1079da 162px,#108ed2 167px,#1389d3 173px,#2053d4 179px,#353dad 185px,#1db3af 191px,#42bb98 198px,#38b99e 204px,#0998d1 218px,#0998d1 233px,#0aacbe 241px,#07a9c2 249px,#0faeb9 258px,#0faeb9 267px,#06a0cd 277px,#15b1b4 287px,#2eb7a4 297px,#06a7c6 308px,#07a9c2 320px)"></i><i style="left:219px;width:3px;background:linear-gradient(#127dd8 -6px,#0f5cdd -4px,#2053d4 -1px,#0d75dc 1px,#353dad 6px,#353dad 11px,#0d75dc 16px,#353dad 18px,#0871de 21px,#0f5cdd 24px,#2c4ac7 29px,#0363e1 32px,#2053d4 38px,#0363e1 41px,#3243ba 43px,#2c4ac7 46px,#363093 53px,#2c4ac7 56px,#363093 62px,#2c4ac7 65px,#363093 69px,#0363e1 72px,#046de0 76px,#352a87 86px,#352a87 90px,#3243ba 94px,#1481d6 98px,#06a7c6 106px,#0c93d2 110px,#079ccf 114px,#1485d4 118px,#079ccf 123px,#1485d4 127px,#1389d3 132px,#0d75dc 137px,#1485d4 141px,#1481d6 151px,#06a4ca 162px,#06a0cd 167px,#0faeb9 179px,#079ccf 185px,#0c93d2 218px,#1389d3 225px,#42bb98 249px,#4dbc92 258px,#0aacbe 287px,#0faeb9 297px,#06a0cd 308px,#06a0cd 320px)"></i><i style="left:222px;width:3px;background:linear-gradient(#0f5cdd -6px,#3243ba -1px,#3637a0 3px,#0f5cdd 6px,#363093 8px,#0363e1 11px,#353dad 13px,#353dad 18px,#1481d6 24px,#079ccf 29px,#0c93d2 32px,#3243ba 41px,#3243ba 56px,#2053d4 59px,#3637a0 62px,#2053d4 65px,#0363e1 72px,#1481d6 76px,#0268e1 86px,#2053d4 90px,#1389d3 94px,#1485d4 98px,#0998d1 106px,#127dd8 110px,#0871de 137px,#0998d1 146px,#0c93d2 151px,#06a7c6 157px,#06a0cd 162px,#2053d4 167px,#2053d4 173px,#079ccf 179px,#1389d3 185px,#127dd8 198px,#0c93d2 218px,#06a7c6 225px,#07a9c2 233px,#0998d1 249px,#15b1b4 287px,#0aacbe 297px,#38b99e 308px,#2eb7a4 320px)"></i><i style="left:225px;width:3px;background:linear-gradient(#0268e1 -6px,#0d75dc -4px,#3637a0 -1px,#0363e1 3px,#352a87 8px,#352a87 16px,#3637a0 18px,#352a87 21px,#0268e1 26px,#046de0 35px,#3243ba 41px,#3243ba 43px,#0268e1 46px,#0268e1 49px,#353dad 53px,#3243ba 59px,#0363e1 62px,#2053d4 72px,#0871de 83px,#0998d1 86px,#108ed2 90px,#046de0 94px,#352a87 102px,#352a87 106px,#1485d4 123px,#1079da 127px,#127dd8 132px,#0871de 137px,#108ed2 146px,#1481d6 151px,#1481d6 162px,#0268e1 167px,#0f5cdd 179px,#1485d4 185px,#0c93d2 191px,#0faeb9 198px,#0aacbe 204px,#06a0cd 211px,#06a0cd 225px,#1db3af 233px,#38b99e 258px,#2eb7a4 287px,#0aacbe 297px,#71bf80 320px)"></i><i style="left:228px;width:3px;background:linear-gradient(#2053d4 -6px,#3637a0 -1px,#2053d4 3px,#363093 8px,#2053d4 13px,#0871de 16px,#1079da 18px,#352a87 24px,#3637a0 26px,#352a87 32px,#0268e1 41px,#0871de 46px,#0363e1 49px,#0f5cdd 56px,#0871de 59px,#0f5cdd 62px,#046de0 65px,#0268e1 76px,#0f5cdd 79px,#0363e1 83px,#353dad 90px,#2053d4 98px,#3243ba 110px,#2053d4 114px,#3243ba 118px,#046de0 123px,#06a0cd 137px,#1485d4 157px,#0aacbe 167px,#0aacbe 179px,#4dbc92 191px,#42bb98 204px,#2053d4 211px,#06a0cd 218px,#0c93d2 225px,#07a9c2 233px,#06a7c6 241px,#38b99e 249px,#2eb7a4 267px,#2c4ac7 277px,#07a9c2 287px,#079ccf 320px)"></i><i style="left:231px;width:3px;background:linear-gradient(#0871de -6px,#127dd8 1px,#1389d3 3px,#127dd8 6px,#1389d3 8px,#2c4ac7 11px,#0871de 13px,#0363e1 18px,#1481d6 29px,#046de0 35px,#1481d6 41px,#0871de 46px,#1389d3 49px,#1485d4 56px,#0871de 59px,#0871de 65px,#0f5cdd 72px,#2c4ac7 83px,#0363e1 86px,#0f5cdd 90px,#127dd8 98px,#0998d1 102px,#1389d3 106px,#0363e1 110px,#0268e1 114px,#352a87 118px,#353dad 123px,#046de0 127px,#1389d3 137px,#353dad 141px,#0871de 146px,#1079da 157px,#0268e1 167px,#3637a0 173px,#0871de 179px,#127dd8 198px,#0d75dc 204px,#0998d1 211px,#0aacbe 218px,#0aacbe 225px,#25b5a9 233px,#0aacbe 249px,#0faeb9 277px,#06a4ca 297px,#0c93d2 320px)"></i><i style="left:234px;width:3px;background:linear-gradient(#0363e1 -6px,#2c4ac7 -4px,#0871de -1px,#2053d4 3px,#352a87 6px,#352a87 11px,#2053d4 13px,#353dad 16px,#1389d3 18px,#0f5cdd 24px,#0363e1 26px,#363093 29px,#2053d4 32px,#0363e1 35px,#0d75dc 38px,#046de0 41px,#352a87 46px,#352a87 56px,#0871de 65px,#0871de 72px,#0363e1 76px,#046de0 83px,#127dd8 86px,#0871de 90px,#1481d6 94px,#127dd8 102px,#0871de 106px,#352a87 114px,#353dad 123px,#046de0 132px,#0998d1 137px,#1485d4 141px,#0c93d2 151px,#1485d4 157px,#3243ba 162px,#079ccf 167px,#06a0cd 179px,#1485d4 185px,#1481d6 198px,#0c93d2 204px,#0c93d2 211px,#15b1b4 225px,#06a4ca 233px,#0aacbe 241px,#079ccf 249px,#079ccf 277px,#1389d3 297px,#06a7c6 308px,#06a0cd 320px)"></i><i style="left:237px;width:3px;background:linear-gradient(#363093 -6px,#0268e1 -1px,#2c4ac7 3px,#363093 6px,#352a87 26px,#3243ba 29px,#3637a0 32px,#3243ba 35px,#363093 38px,#0363e1 41px,#353dad 43px,#127dd8 46px,#1481d6 49px,#0871de 53px,#108ed2 59px,#0d75dc 62px,#1079da 69px,#1389d3 72px,#108ed2 83px,#079ccf 86px,#046de0 94px,#352a87 98px,#363093 110px,#2053d4 118px,#0d75dc 123px,#3243ba 127px,#0c93d2 132px,#07a9c2 137px,#0faeb9 141px,#079ccf 157px,#1389d3 162px,#2053d4 167px,#0871de 173px,#353dad 179px,#1389d3 191px,#108ed2 198px,#1485d4 204px,#1389d3 211px,#0d75dc 218px,#1485d4 225px,#1481d6 241px,#0998d1 258px,#15b1b4 267px,#15b1b4 277px,#65be86 287px,#87bf77 297px,#0faeb9 308px,#0c93d2 320px)"></i><i style="left:240px;width:3px;background:linear-gradient(#352a87 -6px,#363093 3px,#0d75dc 11px,#0d75dc 18px,#0268e1 21px,#1079da 24px,#3243ba 26px,#0363e1 29px,#2c4ac7 32px,#0268e1 35px,#0363e1 43px,#353dad 46px,#3637a0 49px,#2053d4 56px,#352a87 62px,#2c4ac7 65px,#352a87 69px,#3637a0 72px,#352a87 76px,#046de0 83px,#2c4ac7 86px,#0d75dc 90px,#1485d4 94px,#1079da 98px,#108ed2 102px,#0363e1 114px,#046de0 127px,#2c4ac7 132px,#127dd8 141px,#1481d6 146px,#06a4ca 151px,#0aacbe 157px,#108ed2 162px,#06a7c6 173px,#3243ba 179px,#1481d6 185px,#1079da 191px,#0363e1 198px,#1389d3 204px,#0998d1 218px,#38b99e 241px,#65be86 258px,#42bb98 267px,#38b99e 287px,#0998d1 320px)"></i><i style="left:243px;width:3px;background:linear-gradient(#2053d4 -6px,#0871de -4px,#046de0 1px,#353dad 3px,#3243ba 6px,#352a87 13px,#352a87 21px,#2c4ac7 24px,#127dd8 26px,#127dd8 29px,#0f5cdd 32px,#352a87 38px,#352a87 43px,#2c4ac7 46px,#353dad 49px,#0871de 53px,#2c4ac7 56px,#0268e1 59px,#2053d4 65px,#353dad 76px,#363093 79px,#2c4ac7 86px,#363093 90px,#0268e1 114px,#046de0 127px,#3637a0 132px,#0d75dc 137px,#0d75dc 141px,#06a4ca 151px,#0aacbe 157px,#2c4ac7 162px,#0871de 167px,#2c4ac7 173px,#3637a0 179px,#046de0 185px,#0d75dc 198px,#0998d1 204px,#0faeb9 233px,#07a9c2 241px,#1485d4 249px,#1481d6 258px,#2053d4 267px,#0c93d2 277px,#0f5cdd 287px,#06a4ca 297px,#1db3af 320px)"></i><i style="left:246px;width:1px;background:linear-gradient(#0d75dc -6px,#127dd8 -1px,#352a87 6px,#352a87 13px,#0871de 18px,#363093 29px,#352a87 32px,#2c4ac7 35px,#353dad 38px,#1481d6 46px,#0c93d2 49px,#2053d4 53px,#1481d6 56px,#0268e1 59px,#0f5cdd 62px,#0871de 65px,#2053d4 69px,#046de0 72px,#127dd8 83px,#0998d1 90px,#0c93d2 94px,#0871de 98px,#2c4ac7 106px,#046de0 110px,#2c4ac7 114px,#353dad 118px,#127dd8 127px,#0c93d2 137px,#1481d6 141px,#2053d4 146px,#0871de 151px,#0268e1 157px,#06a4ca 173px,#108ed2 179px,#127dd8 198px,#1481d6 204px,#1db3af 218px,#0aacbe 233px,#0faeb9 241px,#079ccf 249px,#06a7c6 277px,#079ccf 297px,#06a4ca 308px,#1389d3 320px)"></i><i style="left:247px;width:1px;background:linear-gradient(#0d75dc -6px,#127dd8 -1px,#352a87 6px,#352a87 13px,#0871de 18px,#363093 29px,#352a87 32px,#2c4ac7 35px,#353dad 38px,#1481d6 46px,#0c93d2 49px,#2053d4 53px,#1481d6 56px,#0268e1 59px,#0f5cdd 62px,#0871de 65px,#2053d4 69px,#046de0 72px,#127dd8 83px,#0998d1 90px,#0c93d2 94px,#0871de 98px,#2c4ac7 106px,#046de0 110px,#2c4ac7 114px,#353dad 118px,#127dd8 127px,#0c93d2 137px,#1481d6 141px,#2053d4 146px,#0d75dc 151px,#1079da 157px,#1db3af 173px,#15b1b4 179px,#2eb7a4 185px,#0aacbe 204px,#38b99e 218px,#15b1b4 241px,#06a0cd 249px,#06a7c6 287px,#079ccf 297px,#06a4ca 308px,#1389d3 320px)"></i><i style="left:248px;width:1px;background:linear-gradient(#0d75dc -6px,#127dd8 -1px,#352a87 6px,#352a87 13px,#0871de 18px,#363093 29px,#352a87 32px,#2c4ac7 35px,#353dad 38px,#1481d6 46px,#0c93d2 49px,#2053d4 53px,#1481d6 56px,#0268e1 59px,#0f5cdd 62px,#0871de 65px,#2053d4 69px,#046de0 72px,#127dd8 83px,#0998d1 90px,#0c93d2 94px,#0871de 98px,#2c4ac7 106px,#046de0 110px,#2c4ac7 114px,#2c4ac7 118px,#0c93d2 127px,#0aacbe 137px,#0aacbe 141px,#2053d4 146px,#15b1b4 151px,#1db3af 162px,#42bb98 173px,#1db3af 204px,#59bd8c 218px,#0faeb9 287px,#06a4ca 297px,#06a4ca 308px,#1389d3 320px)"></i><i style="left:249px;width:1px;background:linear-gradient(#0998d1 -6px,#06a0cd -4px,#0871de 6px,#0871de 8px,#0f5cdd 11px,#0871de 13px,#2c4ac7 18px,#1485d4 29px,#0f5cdd 35px,#0363e1 38px,#363093 41px,#0268e1 43px,#3243ba 46px,#3637a0 53px,#2053d4 59px,#1079da 65px,#2053d4 69px,#1079da 72px,#046de0 76px,#1389d3 79px,#127dd8 83px,#0c93d2 86px,#108ed2 102px,#2eb7a4 118px,#25b5a9 157px,#353dad 162px,#4dbc92 167px,#92bf73 185px,#65be86 198px,#92bf73 225px,#42bb98 241px,#38b99e 249px,#2c4ac7 258px,#38b99e 267px,#42bb98 320px)"></i><i style="left:250px;width:1px;background:linear-gradient(#0998d1 -6px,#06a0cd -4px,#0871de 6px,#0871de 8px,#0f5cdd 11px,#0871de 13px,#2c4ac7 18px,#1485d4 29px,#0f5cdd 35px,#0363e1 38px,#363093 41px,#0268e1 43px,#3243ba 46px,#3637a0 53px,#0f5cdd 59px,#1389d3 65px,#2053d4 69px,#0998d1 72px,#0998d1 76px,#07a9c2 79px,#15b1b4 90px,#0faeb9 106px,#71bf80 132px,#f8bb44 167px,#e9b94e 191px,#d9ba56 198px,#fcce2e 225px,#f1b94a 241px,#f1b94a 258px,#59bd8c 308px,#42bb98 320px)"></i><i style="left:251px;width:1px;background:linear-gradient(#06a7c6 -6px,#0c93d2 11px,#0c93d2 16px,#06a0cd 26px,#06a0cd 32px,#108ed2 41px,#079ccf 43px,#0c93d2 53px,#0faeb9 65px,#2053d4 69px,#1db3af 72px,#1db3af 76px,#42bb98 79px,#87bf77 98px,#a5be6b 106px,#e9b94e 123px,#e1b952 151px,#fdbe3d 179px,#d9ba56 198px,#fcce2e 225px,#f1b94a 241px,#f8bb44 320px)"></i><i style="left:252px;width:3px;background:linear-gradient(#7cbf7b -6px,#2eb7a4 1px,#4dbc92 6px,#38b99e 8px,#71bf80 18px,#59bd8c 26px,#2053d4 29px,#65be86 32px,#9cbf6f 41px,#71bf80 43px,#65be86 53px,#9cbf6f 69px,#92bf73 79px,#b7bd64 94px,#e1b952 123px,#e9b94e 141px,#fec832 167px,#ffc337 191px,#fdbe3d 204px,#fec832 225px,#fdbe3d 249px,#ffc337 287px,#d9ba56 320px)"></i><i style="left:255px;width:2px;background:linear-gradient(#1db3af -6px,#42bb98 3px,#4dbc92 8px,#42bb98 21px,#1db3af 26px,#59bd8c 43px,#4dbc92 62px,#a5be6b 76px,#a5be6b 86px,#b7bd64 106px,#f1b94a 118px,#d9ba56 173px,#fdbe3d 191px,#f8bb44 233px,#f7d826 249px,#fad32a 258px,#e1b952 287px,#d9ba56 320px)"></i><i style="left:257px;width:1px;background:linear-gradient(#1481d6 -6px,#0c93d2 3px,#0998d1 8px,#0c93d2 21px,#127dd8 26px,#079ccf 43px,#079ccf 62px,#2eb7a4 76px,#4dbc92 86px,#353dad 90px,#71bf80 94px,#9cbf6f 106px,#e1b952 114px,#f1b94a 132px,#d9ba56 173px,#fdbe3d 191px,#f8bb44 233px,#f7d826 249px,#fad32a 258px,#e1b952 287px,#d9ba56 320px)"></i><i style="left:258px;width:1px;background:linear-gradient(#06a4ca -6px,#0c93d2 3px,#0c93d2 18px,#0c93d2 21px,#079ccf 24px,#079ccf 56px,#06a7c6 59px,#06a4ca 65px,#0aacbe 69px,#06a7c6 76px,#0aacbe 79px,#06a4ca 83px,#0aacbe 86px,#0aacbe 94px,#15b1b4 102px,#15b1b4 106px,#3637a0 110px,#38b99e 114px,#87bf77 132px,#87bf77 137px,#c8bc5d 146px,#fec832 185px,#f8bb44 191px,#ffc337 233px,#d9ba56 267px,#aebe67 287px,#aebe67 297px,#59bd8c 320px)"></i><i style="left:259px;width:1px;background:linear-gradient(#1485d4 -6px,#046de0 -4px,#2c4ac7 3px,#046de0 16px,#2c4ac7 21px,#0871de 24px,#0268e1 26px,#0d75dc 29px,#0f5cdd 41px,#0363e1 46px,#2053d4 53px,#0363e1 56px,#1389d3 59px,#1481d6 65px,#0998d1 69px,#0c93d2 76px,#06a7c6 79px,#06a0cd 83px,#0aacbe 86px,#0aacbe 94px,#15b1b4 102px,#15b1b4 106px,#3637a0 110px,#38b99e 114px,#38b99e 127px,#353dad 132px,#25b5a9 137px,#38b99e 146px,#25b5a9 162px,#c0bc60 185px,#92bf73 191px,#71bf80 233px,#38b99e 249px,#4dbc92 287px,#87bf77 297px,#59bd8c 320px)"></i><i style="left:260px;width:1px;background:linear-gradient(#1485d4 -6px,#046de0 -4px,#2c4ac7 3px,#046de0 16px,#2c4ac7 21px,#0871de 24px,#0268e1 26px,#0d75dc 29px,#0f5cdd 41px,#0363e1 46px,#2053d4 53px,#0363e1 56px,#1481d6 59px,#046de0 65px,#1485d4 69px,#046de0 76px,#1481d6 79px,#2053d4 83px,#127dd8 86px,#0d75dc 90px,#079ccf 98px,#06a7c6 106px,#3637a0 110px,#2eb7a4 114px,#42bb98 118px,#38b99e 127px,#353dad 132px,#25b5a9 137px,#38b99e 146px,#25b5a9 167px,#4dbc92 185px,#2eb7a4 191px,#42bb98 233px,#38b99e 258px,#4dbc92 287px,#87bf77 297px,#59bd8c 320px)"></i><i style="left:261px;width:1px;background:linear-gradient(#352a87 -6px,#3637a0 1px,#352a87 11px,#353dad 16px,#1079da 21px,#0d75dc 24px,#127dd8 26px,#1079da 29px,#2053d4 32px,#0f5cdd 35px,#3637a0 38px,#0f5cdd 43px,#353dad 46px,#2c4ac7 53px,#0d75dc 59px,#108ed2 62px,#046de0 69px,#353dad 72px,#3243ba 76px,#3637a0 79px,#046de0 83px,#127dd8 90px,#3243ba 98px,#3243ba 106px,#127dd8 110px,#07a9c2 118px,#06a4ca 132px,#079ccf 137px,#42bb98 151px,#38b99e 167px,#25b5a9 173px,#38b99e 185px,#25b5a9 191px,#38b99e 198px,#1db3af 225px,#2053d4 233px,#2eb7a4 241px,#4dbc92 258px,#2eb7a4 277px,#59bd8c 287px,#42bb98 308px,#15b1b4 320px)"></i><i style="left:262px;width:1px;background:linear-gradient(#352a87 -6px,#3637a0 1px,#352a87 11px,#353dad 16px,#1079da 21px,#0d75dc 24px,#127dd8 26px,#1079da 29px,#2053d4 32px,#0f5cdd 35px,#3637a0 38px,#0f5cdd 43px,#353dad 46px,#2c4ac7 53px,#0d75dc 59px,#108ed2 62px,#046de0 69px,#353dad 72px,#3243ba 76px,#3637a0 79px,#046de0 83px,#127dd8 90px,#3243ba 98px,#3243ba 106px,#127dd8 110px,#06a7c6 118px,#079ccf 127px,#0871de 137px,#0c93d2 146px,#07a9c2 151px,#0aacbe 157px,#06a4ca 162px,#0faeb9 167px,#07a9c2 173px,#25b5a9 179px,#38b99e 185px,#1db3af 191px,#2eb7a4 198px,#06a4ca 218px,#06a0cd 225px,#2053d4 233px,#06a4ca 241px,#06a4ca 249px,#2eb7a4 258px,#0faeb9 267px,#1db3af 277px,#59bd8c 287px,#38b99e 297px,#38b99e 308px,#15b1b4 320px)"></i><i style="left:263px;width:1px;background:linear-gradient(#352a87 -6px,#3637a0 1px,#352a87 11px,#353dad 16px,#1079da 21px,#0d75dc 24px,#127dd8 26px,#1079da 29px,#2053d4 32px,#0f5cdd 35px,#3637a0 38px,#0f5cdd 43px,#353dad 46px,#2c4ac7 53px,#0d75dc 59px,#108ed2 62px,#046de0 69px,#353dad 72px,#3243ba 76px,#3637a0 79px,#046de0 83px,#127dd8 90px,#3243ba 98px,#3243ba 106px,#127dd8 110px,#06a7c6 118px,#079ccf 127px,#0871de 137px,#07a9c2 151px,#06a7c6 157px,#0c93d2 162px,#079ccf 167px,#1481d6 173px,#079ccf 179px,#1485d4 191px,#06a4ca 198px,#0c93d2 204px,#0c93d2 211px,#1481d6 218px,#1485d4 225px,#2053d4 233px,#079ccf 241px,#06a4ca 249px,#2eb7a4 258px,#0faeb9 267px,#1db3af 277px,#59bd8c 287px,#38b99e 297px,#38b99e 308px,#15b1b4 320px)"></i><i style="left:264px;width:3px;background:linear-gradient(#2053d4 -6px,#352a87 1px,#353dad 3px,#3637a0 6px,#0268e1 8px,#0871de 11px,#0363e1 13px,#1079da 21px,#0871de 24px,#046de0 29px,#1481d6 35px,#0871de 38px,#0871de 41px,#2c4ac7 43px,#1079da 49px,#1485d4 53px,#0363e1 59px,#3243ba 62px,#046de0 72px,#0d75dc 76px,#0268e1 79px,#046de0 83px,#2c4ac7 90px,#108ed2 102px,#1481d6 118px,#1389d3 127px,#079ccf 132px,#1481d6 137px,#127dd8 141px,#046de0 146px,#046de0 151px,#2053d4 157px,#0c93d2 162px,#0c93d2 167px,#25b5a9 173px,#38b99e 179px,#0faeb9 185px,#25b5a9 191px,#07a9c2 198px,#0aacbe 204px,#06a4ca 211px,#353dad 218px,#06a4ca 225px,#06a4ca 241px,#2c4ac7 249px,#06a0cd 258px,#07a9c2 287px,#079ccf 297px,#07a9c2 308px,#07a9c2 320px)"></i><i style="left:267px;width:3px;background:linear-gradient(#3637a0 -6px,#0363e1 -4px,#3243ba -1px,#127dd8 3px,#0d75dc 6px,#2053d4 8px,#0871de 16px,#353dad 18px,#2053d4 21px,#3637a0 29px,#0363e1 35px,#1481d6 38px,#1079da 41px,#0f5cdd 43px,#3243ba 49px,#352a87 53px,#3243ba 69px,#046de0 72px,#2053d4 76px,#0363e1 79px,#363093 86px,#353dad 90px,#352a87 94px,#0268e1 102px,#0871de 106px,#0363e1 110px,#1079da 114px,#0268e1 123px,#0363e1 127px,#0871de 132px,#3243ba 137px,#046de0 151px,#07a9c2 167px,#38b99e 185px,#0faeb9 191px,#2eb7a4 198px,#07a9c2 204px,#0faeb9 211px,#0871de 225px,#1485d4 249px,#079ccf 258px,#0998d1 267px,#38b99e 287px,#38b99e 320px)"></i><i style="left:270px;width:3px;background:linear-gradient(#353dad -6px,#2c4ac7 -4px,#352a87 -1px,#2053d4 1px,#046de0 11px,#0f5cdd 16px,#3637a0 24px,#2c4ac7 26px,#352a87 29px,#352a87 32px,#0363e1 35px,#127dd8 41px,#06a0cd 43px,#06a4ca 46px,#1db3af 49px,#25b5a9 53px,#1389d3 59px,#0871de 65px,#1481d6 72px,#0998d1 76px,#0363e1 86px,#1079da 94px,#0268e1 98px,#1485d4 102px,#1481d6 110px,#0998d1 114px,#127dd8 118px,#06a4ca 127px,#06a4ca 132px,#38b99e 137px,#25b5a9 151px,#4dbc92 157px,#1db3af 162px,#0f5cdd 167px,#0faeb9 173px,#25b5a9 185px,#0faeb9 191px,#2eb7a4 204px,#0aacbe 218px,#0aacbe 241px,#079ccf 249px,#079ccf 258px,#0aacbe 267px,#07a9c2 277px,#38b99e 287px,#71bf80 308px,#9cbf6f 320px)"></i><i style="left:273px;width:3px;background:linear-gradient(#0f5cdd -6px,#352a87 1px,#352a87 11px,#2053d4 18px,#0871de 21px,#0363e1 24px,#0871de 26px,#046de0 29px,#1485d4 32px,#1481d6 41px,#353dad 46px,#352a87 53px,#0363e1 65px,#2053d4 72px,#0268e1 76px,#2053d4 79px,#127dd8 86px,#127dd8 90px,#046de0 98px,#0f5cdd 110px,#3637a0 118px,#2053d4 123px,#0d75dc 132px,#3243ba 137px,#0c93d2 141px,#1485d4 146px,#2c4ac7 151px,#0268e1 157px,#046de0 185px,#1485d4 198px,#0871de 211px,#108ed2 218px,#108ed2 225px,#06a4ca 241px,#25b5a9 249px,#1db3af 258px,#0c93d2 277px,#0c93d2 287px,#1481d6 297px,#06a4ca 320px)"></i><i style="left:276px;width:3px;background:linear-gradient(#2053d4 -6px,#352a87 -1px,#353dad 6px,#2053d4 8px,#2c4ac7 11px,#108ed2 16px,#2053d4 18px,#1481d6 21px,#0f5cdd 26px,#3243ba 32px,#0363e1 38px,#0f5cdd 43px,#127dd8 46px,#0d75dc 53px,#353dad 56px,#352a87 62px,#3637a0 72px,#0871de 86px,#046de0 94px,#352a87 102px,#352a87 114px,#2053d4 123px,#1481d6 127px,#06a7c6 137px,#06a4ca 151px,#0998d1 157px,#0998d1 162px,#0363e1 173px,#0363e1 179px,#108ed2 191px,#353dad 198px,#06a4ca 204px,#0998d1 211px,#07a9c2 218px,#079ccf 233px,#079ccf 277px,#1485d4 287px,#15b1b4 320px)"></i><i style="left:279px;width:3px;background:linear-gradient(#363093 -6px,#3243ba -1px,#363093 1px,#3243ba 3px,#363093 8px,#2c4ac7 11px,#353dad 13px,#2053d4 16px,#1485d4 18px,#046de0 24px,#1079da 26px,#2c4ac7 29px,#2c4ac7 38px,#3637a0 41px,#3243ba 43px,#352a87 46px,#352a87 56px,#2c4ac7 65px,#363093 76px,#2053d4 79px,#1481d6 83px,#0998d1 90px,#0268e1 102px,#127dd8 106px,#079ccf 118px,#1481d6 127px,#0998d1 132px,#1079da 137px,#1389d3 141px,#1389d3 151px,#06a7c6 191px,#06a4ca 204px,#25b5a9 211px,#38b99e 218px,#07a9c2 225px,#06a7c6 241px,#108ed2 249px,#0998d1 267px,#1485d4 277px,#108ed2 297px,#06a7c6 320px)"></i><i style="left:282px;width:3px;background:linear-gradient(#1079da -6px,#0d75dc -1px,#2c4ac7 1px,#3243ba 6px,#0268e1 8px,#046de0 11px,#352a87 18px,#353dad 21px,#352a87 24px,#363093 32px,#046de0 35px,#1485d4 41px,#1485d4 43px,#0d75dc 46px,#353dad 49px,#2053d4 53px,#2053d4 56px,#352a87 62px,#363093 69px,#2c4ac7 72px,#0f5cdd 83px,#3243ba 86px,#1079da 90px,#108ed2 102px,#1079da 106px,#0d75dc 110px,#353dad 118px,#127dd8 127px,#1389d3 132px,#0aacbe 137px,#1079da 146px,#3243ba 157px,#2c4ac7 162px,#0871de 167px,#0f5cdd 173px,#0871de 191px,#127dd8 211px,#079ccf 218px,#108ed2 241px,#3637a0 249px,#06a4ca 258px,#0871de 277px,#0d75dc 308px,#0c93d2 320px)"></i><i style="left:285px;width:3px;background:linear-gradient(#353dad -6px,#1481d6 1px,#353dad 3px,#2c4ac7 11px,#363093 13px,#2053d4 21px,#3243ba 24px,#0871de 26px,#0f5cdd 29px,#0363e1 35px,#3243ba 41px,#0268e1 43px,#0363e1 49px,#1481d6 53px,#127dd8 59px,#2053d4 62px,#1389d3 65px,#1079da 69px,#1079da 72px,#0363e1 76px,#127dd8 79px,#2053d4 83px,#0998d1 86px,#06a4ca 90px,#0998d1 98px,#0f5cdd 106px,#1481d6 110px,#1389d3 118px,#1079da 123px,#3637a0 127px,#1481d6 132px,#1079da 137px,#0998d1 146px,#25b5a9 151px,#2eb7a4 157px,#0faeb9 167px,#108ed2 173px,#06a0cd 185px,#079ccf 198px,#046de0 218px,#0363e1 225px,#1079da 233px,#1079da 241px,#0aacbe 267px,#7cbf7b 287px,#2eb7a4 308px,#06a0cd 320px)"></i><i style="left:288px;width:3px;background:linear-gradient(#1485d4 -6px,#3243ba -4px,#0871de -1px,#0363e1 1px,#352a87 3px,#352a87 13px,#3637a0 18px,#352a87 32px,#352a87 35px,#3243ba 38px,#1079da 41px,#0d75dc 46px,#353dad 49px,#127dd8 53px,#2053d4 56px,#0363e1 59px,#3637a0 62px,#2c4ac7 65px,#3243ba 69px,#046de0 79px,#0f5cdd 83px,#0871de 90px,#352a87 102px,#2053d4 110px,#353dad 123px,#0871de 127px,#046de0 137px,#1481d6 141px,#353dad 146px,#0f5cdd 151px,#1485d4 157px,#0c93d2 162px,#1389d3 167px,#079ccf 191px,#0c93d2 198px,#06a4ca 211px,#0998d1 218px,#06a0cd 225px,#079ccf 233px,#06a0cd 241px,#0f5cdd 249px,#079ccf 258px,#1389d3 267px,#1481d6 308px,#108ed2 320px)"></i><i style="left:291px;width:3px;background:linear-gradient(#0268e1 -6px,#0268e1 3px,#0d75dc 6px,#1079da 11px,#0268e1 21px,#3637a0 24px,#352a87 29px,#0363e1 38px,#1481d6 41px,#127dd8 43px,#0268e1 46px,#0363e1 53px,#2053d4 59px,#0f5cdd 65px,#0871de 69px,#2c4ac7 72px,#0f5cdd 76px,#3243ba 83px,#2c4ac7 90px,#0871de 94px,#1079da 102px,#0c93d2 106px,#06a0cd 114px,#06a0cd 118px,#1485d4 123px,#0998d1 127px,#108ed2 137px,#0d75dc 141px,#1481d6 146px,#0871de 151px,#1485d4 157px,#1485d4 162px,#25b5a9 179px,#06a0cd 185px,#06a0cd 191px,#1485d4 198px,#1485d4 204px,#06a0cd 211px,#3243ba 218px,#38b99e 225px,#25b5a9 233px,#25b5a9 249px,#0aacbe 258px,#25b5a9 267px,#06a7c6 287px,#0aacbe 308px,#06a7c6 320px)"></i><i style="left:294px;width:3px;background:linear-gradient(#352a87 -6px,#352a87 1px,#2c4ac7 3px,#352a87 6px,#352a87 13px,#0f5cdd 18px,#352a87 21px,#352a87 24px,#0f5cdd 26px,#353dad 29px,#2053d4 32px,#046de0 43px,#0871de 46px,#3243ba 49px,#1481d6 53px,#2c4ac7 56px,#352a87 62px,#352a87 65px,#0268e1 72px,#046de0 79px,#353dad 86px,#0363e1 98px,#3637a0 102px,#2c4ac7 110px,#352a87 118px,#352a87 123px,#3243ba 127px,#0f5cdd 141px,#3243ba 146px,#1079da 157px,#0d75dc 167px,#0998d1 173px,#1485d4 179px,#15b1b4 198px,#0faeb9 204px,#1481d6 211px,#0f5cdd 225px,#2eb7a4 249px,#42bb98 267px,#1db3af 287px,#0faeb9 320px)"></i><i style="left:297px;width:3px;background:linear-gradient(#1079da -6px,#363093 1px,#2053d4 6px,#3637a0 11px,#0f5cdd 13px,#3637a0 16px,#3637a0 18px,#1485d4 26px,#06a4ca 29px,#1481d6 35px,#0f5cdd 38px,#046de0 43px,#0363e1 46px,#0871de 49px,#2053d4 53px,#2053d4 56px,#1079da 62px,#046de0 65px,#0d75dc 69px,#0f5cdd 72px,#0871de 76px,#0871de 83px,#2053d4 86px,#0c93d2 90px,#0f5cdd 98px,#3243ba 102px,#353dad 110px,#0363e1 118px,#353dad 123px,#0268e1 141px,#127dd8 146px,#108ed2 157px,#1389d3 162px,#353dad 167px,#079ccf 173px,#2eb7a4 185px,#65be86 198px,#71bf80 204px,#15b1b4 211px,#07a9c2 233px,#06a0cd 258px,#07a9c2 297px,#06a7c6 320px)"></i><i style="left:300px;width:3px;background:linear-gradient(#3637a0 -6px,#352a87 -1px,#3637a0 6px,#363093 8px,#2053d4 13px,#352a87 21px,#363093 38px,#2c4ac7 41px,#363093 43px,#2053d4 46px,#363093 53px,#352a87 69px,#0d75dc 72px,#1485d4 76px,#352a87 86px,#363093 98px,#3243ba 106px,#2053d4 114px,#363093 127px,#3637a0 141px,#0871de 151px,#0871de 157px,#1389d3 162px,#1481d6 179px,#108ed2 185px,#046de0 191px,#3243ba 204px,#0998d1 211px,#71bf80 225px,#1485d4 258px,#0363e1 297px,#0f5cdd 320px)"></i><i style="left:303px;width:3px;background:linear-gradient(#3637a0 -6px,#352a87 -1px,#3637a0 1px,#352a87 3px,#352a87 11px,#1481d6 16px,#0c93d2 18px,#1389d3 21px,#2053d4 26px,#3637a0 32px,#2053d4 35px,#353dad 38px,#0268e1 46px,#0268e1 65px,#352a87 72px,#352a87 79px,#0268e1 90px,#2053d4 94px,#046de0 98px,#2053d4 102px,#0871de 110px,#0c93d2 114px,#079ccf 123px,#1389d3 127px,#1389d3 132px,#0871de 141px,#1389d3 162px,#1485d4 173px,#0c93d2 179px,#1485d4 191px,#0d75dc 198px,#25b5a9 225px,#38b99e 233px,#25b5a9 241px,#4dbc92 249px,#42bb98 267px,#87bf77 277px,#9cbf6f 287px,#7cbf7b 297px,#aebe67 308px,#59bd8c 320px)"></i><i style="left:306px;width:3px;background:linear-gradient(#352a87 -6px,#352a87 8px,#3637a0 11px,#352a87 13px,#2053d4 21px,#353dad 24px,#2053d4 29px,#3243ba 32px,#3243ba 43px,#0f5cdd 53px,#1389d3 62px,#1485d4 65px,#3243ba 76px,#1079da 83px,#079ccf 86px,#108ed2 98px,#0c93d2 102px,#1481d6 110px,#108ed2 114px,#0c93d2 123px,#1481d6 137px,#06a7c6 151px,#0faeb9 162px,#0aacbe 167px,#1db3af 173px,#0c93d2 191px,#0d75dc 198px,#0998d1 204px,#25b5a9 218px,#06a7c6 233px,#2053d4 241px,#079ccf 249px,#06a7c6 258px,#0c93d2 267px,#06a0cd 277px,#0c93d2 297px,#07a9c2 320px)"></i><i style="left:309px;width:3px;background:linear-gradient(#0268e1 -6px,#353dad 1px,#3243ba 3px,#3637a0 6px,#3637a0 11px,#3243ba 13px,#353dad 16px,#2c4ac7 18px,#3243ba 21px,#0363e1 26px,#2c4ac7 32px,#0f5cdd 35px,#353dad 38px,#0871de 43px,#0363e1 49px,#1079da 56px,#046de0 59px,#1485d4 69px,#0f5cdd 72px,#0363e1 79px,#127dd8 83px,#1389d3 90px,#2c4ac7 98px,#2c4ac7 102px,#0871de 110px,#2053d4 114px,#0871de 118px,#0d75dc 132px,#108ed2 137px,#0268e1 146px,#1079da 167px,#0268e1 173px,#079ccf 191px,#06a4ca 204px,#0faeb9 211px,#07a9c2 218px,#0faeb9 225px,#06a0cd 233px,#06a7c6 258px,#0f5cdd 267px,#15b1b4 277px,#2eb7a4 287px,#1db3af 320px)"></i><i style="left:312px;width:3px;background:linear-gradient(#363093 -6px,#363093 3px,#3637a0 8px,#352a87 16px,#353dad 21px,#352a87 24px,#353dad 29px,#0268e1 32px,#0268e1 35px,#1485d4 41px,#0363e1 46px,#363093 49px,#046de0 62px,#046de0 65px,#127dd8 69px,#3243ba 76px,#1485d4 86px,#0998d1 98px,#0c93d2 102px,#3637a0 106px,#127dd8 110px,#2053d4 118px,#0268e1 127px,#127dd8 132px,#108ed2 141px,#1389d3 157px,#0c93d2 162px,#0d75dc 173px,#0871de 179px,#1389d3 185px,#127dd8 198px,#1481d6 204px,#06a0cd 211px,#108ed2 218px,#0998d1 225px,#079ccf 287px,#108ed2 297px,#06a0cd 308px,#0871de 320px)"></i><i style="left:315px;width:3px;background:linear-gradient(#1485d4 -6px,#046de0 -4px,#127dd8 8px,#0268e1 11px,#0d75dc 16px,#0268e1 18px,#1481d6 21px,#1389d3 32px,#0d75dc 38px,#1079da 43px,#06a0cd 49px,#0998d1 53px,#3243ba 56px,#0871de 59px,#2c4ac7 62px,#046de0 72px,#1079da 76px,#0268e1 79px,#0d75dc 86px,#0363e1 90px,#127dd8 94px,#3243ba 98px,#1389d3 102px,#1485d4 110px,#079ccf 114px,#1389d3 118px,#1481d6 127px,#108ed2 132px,#1481d6 137px,#0c93d2 141px,#0c93d2 151px,#15b1b4 162px,#0aacbe 173px,#25b5a9 179px,#0aacbe 198px,#06a0cd 204px,#079ccf 211px,#3243ba 218px,#1485d4 233px,#108ed2 241px,#0aacbe 249px,#06a0cd 267px,#1389d3 277px,#0268e1 287px,#0268e1 297px,#1485d4 308px,#2c4ac7 320px)"></i><i style="left:318px;width:3px;background:linear-gradient(#352a87 -6px,#352a87 1px,#353dad 3px,#352a87 8px,#2c4ac7 11px,#2c4ac7 16px,#0871de 18px,#3637a0 21px,#046de0 24px,#0363e1 32px,#352a87 35px,#3637a0 56px,#0f5cdd 65px,#0268e1 69px,#1481d6 72px,#0268e1 83px,#1389d3 94px,#3243ba 98px,#0faeb9 102px,#06a0cd 106px,#06a7c6 110px,#1079da 118px,#0d75dc 123px,#0c93d2 132px,#108ed2 141px,#06a0cd 146px,#0998d1 151px,#0aacbe 157px,#1db3af 167px,#06a4ca 185px,#1389d3 204px,#0c93d2 225px,#15b1b4 233px,#0faeb9 241px,#42bb98 249px,#25b5a9 267px,#06a7c6 277px,#0998d1 308px,#079ccf 320px)"></i><i style="left:321px;width:3px;background:linear-gradient(#1485d4 -6px,#108ed2 -4px,#06a7c6 -1px,#352a87 8px,#353dad 11px,#352a87 13px,#0f5cdd 16px,#3637a0 21px,#3243ba 29px,#1389d3 38px,#0c93d2 41px,#0871de 56px,#1079da 59px,#0871de 62px,#3243ba 65px,#127dd8 69px,#1389d3 76px,#1389d3 79px,#1481d6 83px,#06a0cd 90px,#108ed2 94px,#2053d4 98px,#079ccf 102px,#1481d6 106px,#0c93d2 110px,#1389d3 118px,#0d75dc 123px,#1485d4 127px,#2053d4 146px,#352a87 151px,#352a87 162px,#1481d6 173px,#127dd8 185px,#0c93d2 191px,#2053d4 198px,#0998d1 204px,#25b5a9 225px,#38b99e 233px,#c8bc5d 258px,#92bf73 267px,#65be86 277px,#42bb98 297px,#65be86 308px,#1db3af 320px)"></i><i style="left:324px;width:3px;background:linear-gradient(#0268e1 -6px,#0d75dc -4px,#0871de -1px,#353dad 1px,#0f5cdd 3px,#352a87 8px,#2053d4 13px,#2053d4 16px,#1389d3 18px,#2c4ac7 21px,#0363e1 24px,#352a87 26px,#3637a0 29px,#352a87 35px,#0f5cdd 46px,#0f5cdd 49px,#0871de 53px,#2053d4 56px,#2c4ac7 59px,#0871de 65px,#127dd8 69px,#0d75dc 72px,#1389d3 76px,#0363e1 90px,#0d75dc 98px,#0363e1 102px,#1079da 106px,#0268e1 114px,#046de0 118px,#1481d6 123px,#127dd8 127px,#079ccf 137px,#0c93d2 141px,#079ccf 146px,#0998d1 157px,#127dd8 167px,#108ed2 173px,#1389d3 185px,#07a9c2 204px,#06a7c6 211px,#2053d4 218px,#0c93d2 225px,#0aacbe 233px,#06a4ca 241px,#2c4ac7 249px,#07a9c2 258px,#079ccf 297px,#06a4ca 308px,#1db3af 320px)"></i><i style="left:327px;width:3px;background:linear-gradient(#1389d3 -6px,#0268e1 1px,#0268e1 3px,#3243ba 6px,#3637a0 8px,#0f5cdd 11px,#353dad 13px,#0363e1 16px,#3243ba 18px,#2053d4 24px,#1079da 29px,#0268e1 32px,#1079da 38px,#2c4ac7 41px,#363093 49px,#3243ba 56px,#3637a0 59px,#0f5cdd 65px,#2053d4 72px,#0d75dc 76px,#0871de 79px,#1389d3 83px,#1389d3 90px,#0f5cdd 94px,#1389d3 98px,#0d75dc 102px,#0d75dc 106px,#2053d4 110px,#0268e1 114px,#2c4ac7 118px,#0c93d2 132px,#1079da 137px,#0c93d2 141px,#1389d3 146px,#353dad 151px,#1389d3 157px,#1481d6 162px,#0c93d2 167px,#0c93d2 173px,#06a7c6 179px,#079ccf 185px,#0998d1 204px,#15b1b4 225px,#06a7c6 233px,#07a9c2 241px,#127dd8 249px,#0998d1 277px,#108ed2 320px)"></i><i style="left:330px;width:3px;background:linear-gradient(#108ed2 -6px,#1079da 1px,#1389d3 8px,#0d75dc 11px,#353dad 13px,#127dd8 16px,#3637a0 18px,#0f5cdd 21px,#1481d6 24px,#127dd8 29px,#0998d1 32px,#0c93d2 38px,#07a9c2 43px,#0d75dc 53px,#1485d4 56px,#3243ba 65px,#3243ba 72px,#352a87 76px,#127dd8 90px,#046de0 94px,#046de0 102px,#1079da 110px,#1389d3 132px,#1481d6 137px,#1389d3 141px,#127dd8 146px,#1481d6 167px,#06a0cd 179px,#353dad 185px,#0faeb9 191px,#2eb7a4 198px,#0faeb9 211px,#1389d3 225px,#06a4ca 233px,#108ed2 241px,#06a4ca 249px,#06a7c6 258px,#1485d4 277px,#2053d4 287px,#046de0 297px,#108ed2 308px,#079ccf 320px)"></i><i style="left:333px;width:2px;background:linear-gradient(#046de0 -6px,#1485d4 6px,#1481d6 8px,#1389d3 11px,#046de0 13px,#0f5cdd 18px,#0f5cdd 21px,#079ccf 29px,#079ccf 35px,#06a7c6 38px,#0d75dc 49px,#0d75dc 53px,#3243ba 56px,#0c93d2 59px,#079ccf 62px,#1481d6 69px,#079ccf 72px,#3243ba 86px,#2053d4 94px,#0d75dc 98px,#108ed2 106px,#127dd8 114px,#1481d6 123px,#2053d4 132px,#1079da 151px,#0363e1 179px,#0d75dc 185px,#046de0 191px,#127dd8 198px,#2c4ac7 204px,#0c93d2 211px,#07a9c2 218px,#0f5cdd 225px,#15b1b4 233px,#15b1b4 241px,#25b5a9 249px,#1db3af 258px,#38b99e 267px,#0aacbe 287px,#42bb98 308px,#1db3af 320px)"></i><i style="left:335px;width:1px;background:linear-gradient(#0c93d2 -6px,#06a4ca 6px,#06a7c6 11px,#1389d3 16px,#1389d3 21px,#0faeb9 29px,#15b1b4 41px,#0998d1 53px,#3243ba 56px,#07a9c2 59px,#0aacbe 65px,#06a4ca 69px,#0faeb9 72px,#1481d6 86px,#1389d3 94px,#07a9c2 106px,#06a4ca 114px,#06a4ca 123px,#1389d3 132px,#06a0cd 151px,#0c93d2 179px,#06a0cd 185px,#0998d1 191px,#06a4ca 198px,#2c4ac7 204px,#0aacbe 211px,#2eb7a4 218px,#0f5cdd 225px,#38b99e 233px,#42bb98 277px,#25b5a9 287px,#59bd8c 308px,#42bb98 320px)"></i><i style="left:336px;width:2px;background:linear-gradient(#07a9c2 -6px,#15b1b4 6px,#07a9c2 8px,#0faeb9 16px,#07a9c2 18px,#0faeb9 26px,#07a9c2 29px,#25b5a9 41px,#0faeb9 46px,#15b1b4 49px,#06a7c6 53px,#1db3af 62px,#07a9c2 65px,#2c4ac7 69px,#0faeb9 72px,#0faeb9 90px,#07a9c2 106px,#0faeb9 110px,#3637a0 114px,#38b99e 118px,#2eb7a4 141px,#2053d4 146px,#42bb98 151px,#1db3af 185px,#1db3af 204px,#42bb98 218px,#2eb7a4 249px,#38b99e 320px)"></i><i style="left:338px;width:1px;background:linear-gradient(#1481d6 -6px,#0c93d2 1px,#0c93d2 6px,#1481d6 8px,#108ed2 11px,#1485d4 13px,#1389d3 16px,#127dd8 18px,#1389d3 21px,#1481d6 29px,#108ed2 32px,#0998d1 38px,#06a0cd 41px,#1485d4 46px,#108ed2 49px,#0d75dc 53px,#0998d1 62px,#2c4ac7 69px,#1485d4 72px,#108ed2 79px,#1485d4 83px,#1389d3 86px,#0871de 102px,#1481d6 110px,#3637a0 114px,#06a7c6 118px,#06a0cd 132px,#06a7c6 137px,#06a0cd 141px,#2053d4 146px,#06a7c6 151px,#07a9c2 157px,#0998d1 162px,#079ccf 167px,#108ed2 173px,#0c93d2 204px,#0aacbe 218px,#06a4ca 249px,#0aacbe 258px,#06a0cd 267px,#07a9c2 277px,#07a9c2 320px)"></i><i style="left:339px;width:3px;background:linear-gradient(#2053d4 -6px,#3637a0 -4px,#2053d4 -1px,#352a87 1px,#2053d4 8px,#1079da 11px,#127dd8 13px,#0998d1 16px,#0998d1 21px,#0871de 24px,#352a87 32px,#0268e1 38px,#0268e1 41px,#353dad 43px,#0f5cdd 46px,#3637a0 49px,#352a87 53px,#0363e1 56px,#2c4ac7 59px,#1079da 65px,#1389d3 76px,#0d75dc 79px,#353dad 83px,#352a87 90px,#0f5cdd 94px,#2053d4 98px,#1481d6 110px,#1389d3 114px,#06a0cd 118px,#06a0cd 123px,#1481d6 127px,#127dd8 137px,#0998d1 146px,#0998d1 151px,#07a9c2 157px,#3637a0 162px,#079ccf 167px,#2053d4 173px,#06a7c6 179px,#06a4ca 191px,#0faeb9 198px,#06a7c6 204px,#15b1b4 211px,#2eb7a4 225px,#15b1b4 233px,#1db3af 267px,#0aacbe 277px,#15b1b4 287px,#06a7c6 297px,#07a9c2 320px)"></i><i style="left:342px;width:3px;background:linear-gradient(#352a87 -6px,#352a87 3px,#3243ba 6px,#0871de 8px,#2c4ac7 11px,#363093 18px,#0f5cdd 26px,#1079da 29px,#0268e1 32px,#1079da 38px,#0d75dc 41px,#2c4ac7 43px,#0363e1 49px,#2c4ac7 53px,#046de0 56px,#0871de 59px,#0363e1 62px,#127dd8 65px,#1389d3 72px,#06a4ca 76px,#0363e1 90px,#0268e1 94px,#1481d6 98px,#1485d4 102px,#352a87 118px,#3637a0 123px,#0268e1 127px,#2c4ac7 132px,#06a7c6 137px,#2053d4 141px,#0998d1 146px,#0998d1 157px,#0d75dc 162px,#0268e1 167px,#352a87 173px,#1485d4 204px,#0c93d2 218px,#127dd8 225px,#353dad 233px,#0c93d2 241px,#06a4ca 249px,#06a4ca 258px,#2c4ac7 297px,#1485d4 320px)"></i><i style="left:345px;width:3px;background:linear-gradient(#2c4ac7 -6px,#0363e1 -4px,#2053d4 -1px,#0871de 1px,#363093 6px,#352a87 11px,#046de0 16px,#0f5cdd 18px,#1079da 32px,#108ed2 38px,#0c93d2 41px,#2c4ac7 49px,#1079da 59px,#046de0 62px,#0363e1 69px,#3243ba 76px,#1481d6 83px,#1079da 86px,#0998d1 94px,#108ed2 98px,#06a0cd 102px,#1481d6 110px,#1481d6 118px,#0998d1 123px,#0c93d2 127px,#0aacbe 137px,#06a7c6 141px,#07a9c2 146px,#1485d4 157px,#0c93d2 162px,#127dd8 167px,#0c93d2 173px,#1481d6 185px,#0998d1 198px,#0c93d2 204px,#127dd8 211px,#1389d3 233px,#127dd8 241px,#1485d4 258px,#1db3af 287px,#15b1b4 320px)"></i><i style="left:348px;width:3px;background:linear-gradient(#1389d3 -6px,#1485d4 -4px,#0268e1 -1px,#0871de 1px,#0f5cdd 3px,#127dd8 6px,#0d75dc 8px,#127dd8 11px,#046de0 13px,#1079da 18px,#2053d4 26px,#0d75dc 35px,#1389d3 38px,#1389d3 43px,#046de0 46px,#0363e1 49px,#353dad 53px,#0871de 56px,#1389d3 59px,#079ccf 72px,#0998d1 76px,#127dd8 79px,#1481d6 86px,#0f5cdd 90px,#3243ba 94px,#0871de 98px,#0f5cdd 102px,#2053d4 110px,#0871de 114px,#0363e1 118px,#0363e1 127px,#1079da 132px,#1389d3 141px,#0d75dc 157px,#1485d4 162px,#0d75dc 173px,#3243ba 179px,#06a4ca 185px,#06a4ca 191px,#1db3af 198px,#0998d1 211px,#1389d3 225px,#0faeb9 249px,#25b5a9 277px,#38b99e 287px,#0f5cdd 297px,#15b1b4 308px,#07a9c2 320px)"></i><i style="left:351px;width:3px;background:linear-gradient(#0f5cdd -6px,#3637a0 -1px,#353dad 6px,#0f5cdd 8px,#2053d4 13px,#0268e1 16px,#2053d4 21px,#3637a0 24px,#353dad 26px,#352a87 29px,#046de0 38px,#1079da 46px,#1481d6 53px,#1079da 56px,#2053d4 59px,#0f5cdd 62px,#363093 76px,#0363e1 79px,#0d75dc 83px,#0d75dc 86px,#0c93d2 90px,#0998d1 94px,#127dd8 98px,#127dd8 106px,#0c93d2 110px,#0aacbe 118px,#2053d4 123px,#1db3af 127px,#06a4ca 132px,#0998d1 141px,#0998d1 151px,#353dad 157px,#06a0cd 162px,#079ccf 173px,#07a9c2 179px,#06a7c6 185px,#0faeb9 191px,#079ccf 204px,#0871de 211px,#363093 225px,#0871de 241px,#2053d4 249px,#3243ba 258px,#079ccf 267px,#0998d1 297px,#38b99e 320px)"></i><i style="left:354px;width:3px;background:linear-gradient(#0363e1 -6px,#0f5cdd -4px,#1079da 1px,#0871de 8px,#1481d6 11px,#1079da 13px,#2c4ac7 16px,#0d75dc 18px,#1485d4 21px,#0268e1 24px,#353dad 29px,#0d75dc 35px,#1389d3 43px,#1485d4 46px,#0c93d2 49px,#0998d1 59px,#1389d3 62px,#0998d1 65px,#0d75dc 69px,#2c4ac7 79px,#0d75dc 86px,#0268e1 90px,#1481d6 94px,#0c93d2 106px,#1485d4 110px,#0c93d2 114px,#127dd8 118px,#108ed2 123px,#1389d3 137px,#046de0 146px,#0363e1 157px,#108ed2 162px,#1389d3 167px,#06a7c6 173px,#3637a0 179px,#06a7c6 185px,#1db3af 191px,#07a9c2 211px,#1db3af 225px,#0998d1 241px,#108ed2 258px,#0faeb9 267px,#87bf77 297px,#15b1b4 320px)"></i><i style="left:357px;width:3px;background:linear-gradient(#352a87 -6px,#363093 1px,#0d75dc 8px,#1079da 11px,#0f5cdd 13px,#0f5cdd 16px,#3243ba 18px,#0363e1 26px,#108ed2 32px,#108ed2 35px,#06a7c6 38px,#07a9c2 41px,#108ed2 46px,#353dad 49px,#1079da 53px,#127dd8 56px,#046de0 59px,#0d75dc 62px,#0f5cdd 69px,#352a87 76px,#2053d4 83px,#353dad 86px,#079ccf 102px,#108ed2 110px,#079ccf 114px,#0c93d2 118px,#079ccf 123px,#1485d4 151px,#108ed2 162px,#1079da 167px,#1079da 179px,#079ccf 191px,#0aacbe 198px,#0c93d2 218px,#06a4ca 225px,#0998d1 241px,#0aacbe 249px,#0aacbe 287px,#353dad 297px,#06a7c6 308px,#06a0cd 320px)"></i><i style="left:360px;width:1px;background:linear-gradient(#0871de -6px,#127dd8 -4px,#1079da 3px,#1389d3 6px,#1485d4 11px,#0c93d2 13px,#353dad 16px,#1485d4 18px,#1079da 21px,#1485d4 24px,#127dd8 26px,#1485d4 43px,#079ccf 46px,#06a0cd 49px,#0998d1 53px,#1079da 56px,#0d75dc 59px,#353dad 62px,#0363e1 65px,#2c4ac7 69px,#127dd8 72px,#1481d6 76px,#1079da 79px,#108ed2 94px,#0998d1 102px,#0998d1 110px,#0aacbe 114px,#06a4ca 118px,#15b1b4 123px,#15b1b4 137px,#0871de 151px,#3243ba 157px,#0871de 162px,#0f5cdd 173px,#1389d3 179px,#06a0cd 185px,#0998d1 191px,#4dbc92 198px,#2eb7a4 211px,#06a7c6 218px,#1db3af 233px,#59bd8c 241px,#38b99e 249px,#87bf77 258px,#65be86 267px,#7cbf7b 277px,#2eb7a4 287px,#42bb98 297px,#0f5cdd 308px,#2eb7a4 320px)"></i><i style="left:361px;width:1px;background:linear-gradient(#0871de -6px,#127dd8 -4px,#1079da 3px,#1389d3 6px,#1485d4 11px,#0c93d2 13px,#353dad 16px,#1485d4 18px,#1079da 21px,#1485d4 24px,#127dd8 26px,#1485d4 43px,#079ccf 46px,#06a0cd 49px,#0998d1 53px,#1079da 56px,#0d75dc 59px,#353dad 62px,#0363e1 65px,#2c4ac7 69px,#127dd8 72px,#1481d6 76px,#1079da 79px,#108ed2 94px,#0998d1 102px,#0998d1 110px,#0aacbe 114px,#06a7c6 118px,#1db3af 123px,#1db3af 137px,#0c93d2 151px,#3243ba 157px,#079ccf 162px,#06a4ca 173px,#38b99e 185px,#2eb7a4 191px,#71bf80 198px,#42bb98 218px,#71bf80 241px,#65be86 249px,#87bf77 258px,#7cbf7b 277px,#59bd8c 287px,#65be86 297px,#0f5cdd 308px,#59bd8c 320px)"></i><i style="left:362px;width:1px;background:linear-gradient(#0c93d2 -6px,#06a4ca 13px,#353dad 16px,#06a0cd 18px,#06a4ca 43px,#07a9c2 53px,#06a0cd 59px,#353dad 62px,#079ccf 65px,#2c4ac7 69px,#06a7c6 72px,#15b1b4 110px,#2eb7a4 114px,#38b99e 137px,#0aacbe 151px,#3243ba 157px,#0faeb9 162px,#0aacbe 173px,#38b99e 185px,#2eb7a4 191px,#71bf80 198px,#42bb98 218px,#71bf80 241px,#65be86 249px,#87bf77 258px,#7cbf7b 277px,#59bd8c 287px,#65be86 297px,#0f5cdd 308px,#59bd8c 320px)"></i><i style="left:363px;width:3px;background:linear-gradient(#1481d6 -6px,#3243ba -4px,#1481d6 -1px,#108ed2 24px,#06a4ca 29px,#079ccf 35px,#0faeb9 46px,#2c4ac7 49px,#38b99e 53px,#06a7c6 62px,#079ccf 72px,#2053d4 76px,#06a7c6 79px,#06a0cd 83px,#0faeb9 90px,#06a7c6 102px,#3637a0 106px,#06a4ca 110px,#1db3af 141px,#07a9c2 151px,#15b1b4 167px,#59bd8c 185px,#42bb98 241px,#38b99e 297px,#71bf80 320px)"></i><i style="left:366px;width:1px;background:linear-gradient(#0c93d2 -6px,#0998d1 1px,#1389d3 6px,#2053d4 8px,#1481d6 11px,#1485d4 21px,#0c93d2 29px,#0998d1 32px,#1389d3 41px,#0aacbe 65px,#25b5a9 76px,#0faeb9 79px,#353dad 83px,#06a0cd 86px,#06a0cd 94px,#15b1b4 102px,#0faeb9 123px,#25b5a9 132px,#2053d4 137px,#4dbc92 141px,#353dad 146px,#42bb98 151px,#2eb7a4 185px,#42bb98 198px,#42bb98 211px,#15b1b4 225px,#25b5a9 241px,#1db3af 267px,#2eb7a4 277px,#38b99e 320px)"></i><i style="left:367px;width:1px;background:linear-gradient(#0c93d2 -6px,#0998d1 1px,#1389d3 6px,#2053d4 8px,#1481d6 11px,#1485d4 21px,#0c93d2 29px,#0998d1 32px,#1389d3 41px,#0aacbe 65px,#25b5a9 76px,#0faeb9 79px,#353dad 83px,#06a0cd 86px,#06a0cd 94px,#15b1b4 102px,#0faeb9 123px,#2eb7a4 132px,#2053d4 137px,#59bd8c 141px,#353dad 146px,#59bd8c 151px,#59bd8c 185px,#7cbf7b 198px,#87bf77 211px,#59bd8c 225px,#87bf77 241px,#a5be6b 277px,#a5be6b 320px)"></i><i style="left:368px;width:1px;background:linear-gradient(#06a7c6 -6px,#07a9c2 1px,#06a0cd 6px,#2053d4 8px,#0998d1 11px,#0998d1 21px,#06a4ca 29px,#06a7c6 32px,#079ccf 41px,#25b5a9 65px,#4dbc92 76px,#2eb7a4 79px,#353dad 83px,#07a9c2 86px,#07a9c2 94px,#38b99e 102px,#2eb7a4 123px,#59bd8c 132px,#2053d4 137px,#87bf77 141px,#87bf77 185px,#a5be6b 198px,#a5be6b 211px,#71bf80 225px,#92bf73 241px,#92bf73 267px,#a5be6b 277px,#a5be6b 320px)"></i><i style="left:369px;width:3px;background:linear-gradient(#06a4ca -6px,#06a7c6 -1px,#0998d1 8px,#0aacbe 18px,#0998d1 29px,#353dad 32px,#06a4ca 35px,#0aacbe 41px,#07a9c2 49px,#0faeb9 53px,#06a4ca 59px,#06a4ca 72px,#25b5a9 90px,#0faeb9 102px,#65be86 118px,#25b5a9 137px,#87bf77 151px,#87bf77 162px,#65be86 179px,#a5be6b 198px,#87bf77 233px,#aebe67 249px,#b7bd64 287px,#9cbf6f 320px)"></i><i style="left:372px;width:1px;background:linear-gradient(#1481d6 -6px,#0d75dc 8px,#0c93d2 32px,#06a0cd 56px,#0c93d2 62px,#079ccf 76px,#15b1b4 90px,#07a9c2 94px,#3637a0 98px,#06a7c6 102px,#079ccf 110px,#0aacbe 137px,#1db3af 141px,#2eb7a4 162px,#1db3af 173px,#59bd8c 225px,#b7bd64 277px,#b7bd64 320px)"></i><i style="left:373px;width:1px;background:linear-gradient(#1481d6 -6px,#0d75dc 8px,#0c93d2 32px,#06a0cd 56px,#0c93d2 62px,#079ccf 76px,#15b1b4 90px,#07a9c2 94px,#3637a0 98px,#06a7c6 102px,#079ccf 110px,#07a9c2 137px,#15b1b4 141px,#15b1b4 162px,#0aacbe 173px,#1db3af 233px,#2c4ac7 241px,#25b5a9 249px,#4dbc92 320px)"></i><i style="left:374px;width:1px;background:linear-gradient(#363093 -6px,#3637a0 -4px,#352a87 1px,#352a87 16px,#2053d4 24px,#2053d4 35px,#1481d6 49px,#1079da 56px,#353dad 62px,#2c4ac7 69px,#353dad 72px,#2053d4 76px,#0d75dc 79px,#079ccf 90px,#1079da 94px,#3637a0 98px,#0871de 102px,#353dad 110px,#2053d4 118px,#2053d4 123px,#0d75dc 127px,#127dd8 137px,#079ccf 141px,#07a9c2 157px,#06a0cd 167px,#0aacbe 191px,#1db3af 233px,#2c4ac7 241px,#25b5a9 249px,#4dbc92 320px)"></i><i style="left:375px;width:3px;background:linear-gradient(#0268e1 -6px,#0998d1 1px,#3243ba 3px,#108ed2 6px,#0268e1 8px,#0f5cdd 13px,#3637a0 16px,#3243ba 21px,#353dad 24px,#0268e1 26px,#0363e1 29px,#0d75dc 38px,#2c4ac7 41px,#0d75dc 43px,#1079da 46px,#0363e1 49px,#0268e1 62px,#0d75dc 65px,#046de0 79px,#0f5cdd 83px,#0268e1 86px,#2c4ac7 90px,#0363e1 98px,#2c4ac7 102px,#1079da 118px,#0d75dc 127px,#1481d6 132px,#0d75dc 141px,#1079da 146px,#3243ba 151px,#3637a0 157px,#0d75dc 162px,#1389d3 167px,#1389d3 179px,#046de0 185px,#0268e1 198px,#1079da 218px,#108ed2 225px,#07a9c2 249px,#353dad 258px,#42bb98 267px,#1db3af 277px,#15b1b4 297px,#2eb7a4 308px,#25b5a9 320px)"></i><i style="left:378px;width:2px;background:linear-gradient(#2053d4 -6px,#0268e1 -4px,#108ed2 -1px,#108ed2 3px,#0268e1 6px,#0d75dc 8px,#353dad 13px,#1079da 16px,#1481d6 18px,#2c4ac7 26px,#3243ba 32px,#0268e1 35px,#046de0 38px,#1389d3 41px,#1079da 43px,#1481d6 46px,#1079da 56px,#1485d4 59px,#0871de 69px,#2c4ac7 72px,#2c4ac7 86px,#1485d4 94px,#06a0cd 102px,#079ccf 106px,#1485d4 110px,#1485d4 114px,#2053d4 118px,#1481d6 123px,#1079da 132px,#3637a0 137px,#1481d6 141px,#079ccf 146px,#079ccf 162px,#108ed2 167px,#0c93d2 173px,#1079da 179px,#0c93d2 198px,#06a0cd 218px,#0998d1 225px,#42bb98 241px,#71bf80 249px,#2eb7a4 267px,#079ccf 287px,#079ccf 297px,#2eb7a4 320px)"></i><i style="left:380px;width:1px;background:linear-gradient(#079ccf -6px,#0aacbe -1px,#0aacbe 3px,#06a4ca 6px,#06a0cd 11px,#353dad 13px,#07a9c2 16px,#06a7c6 21px,#06a0cd 32px,#15b1b4 41px,#1db3af 69px,#0faeb9 72px,#38b99e 90px,#7cbf7b 102px,#87bf77 141px,#9cbf6f 151px,#a5be6b 173px,#92bf73 179px,#a5be6b 218px,#9cbf6f 225px,#c8bc5d 249px,#7cbf7b 297px,#a5be6b 320px)"></i><i style="left:381px;width:3px;background:linear-gradient(#079ccf -6px,#06a0cd -4px,#108ed2 -1px,#108ed2 6px,#353dad 8px,#108ed2 11px,#1481d6 16px,#06a0cd 29px,#25b5a9 43px,#0faeb9 72px,#1db3af 79px,#2c4ac7 83px,#353dad 86px,#65be86 90px,#4dbc92 102px,#65be86 110px,#59bd8c 118px,#9cbf6f 137px,#b7bd64 179px,#9cbf6f 204px,#c0bc60 258px,#71bf80 287px,#71bf80 320px)"></i><i style="left:384px;width:3px;background:linear-gradient(#2053d4 -6px,#0363e1 -1px,#2c4ac7 1px,#2053d4 3px,#363093 6px,#352a87 21px,#0f5cdd 32px,#0f5cdd 35px,#363093 38px,#046de0 41px,#1481d6 49px,#353dad 53px,#1079da 56px,#3243ba 59px,#0363e1 62px,#2c4ac7 69px,#0268e1 76px,#2053d4 79px,#0363e1 83px,#3243ba 86px,#2053d4 90px,#2c4ac7 94px,#0d75dc 106px,#0363e1 123px,#0d75dc 132px,#0871de 137px,#108ed2 146px,#3637a0 151px,#0faeb9 157px,#42bb98 167px,#87bf77 173px,#59bd8c 179px,#06a0cd 191px,#108ed2 204px,#06a0cd 218px,#079ccf 225px,#06a7c6 233px,#079ccf 241px,#2053d4 249px,#108ed2 258px,#15b1b4 277px,#2eb7a4 287px,#07a9c2 308px,#0aacbe 320px)"></i><i style="left:387px;width:3px;background:linear-gradient(#0871de -6px,#0871de -4px,#353dad -1px,#363093 3px,#046de0 11px,#0268e1 13px,#1079da 16px,#046de0 18px,#0268e1 24px,#3243ba 29px,#0268e1 32px,#2c4ac7 38px,#0268e1 41px,#0f5cdd 46px,#0d75dc 49px,#046de0 53px,#0d75dc 56px,#0c93d2 59px,#127dd8 65px,#1481d6 69px,#353dad 76px,#0363e1 86px,#0268e1 98px,#0d75dc 102px,#0871de 110px,#127dd8 114px,#06a4ca 118px,#1389d3 123px,#0c93d2 127px,#108ed2 137px,#07a9c2 146px,#06a7c6 157px,#1db3af 162px,#06a7c6 173px,#0aacbe 179px,#1079da 191px,#046de0 198px,#0871de 218px,#0363e1 225px,#1485d4 233px,#0faeb9 267px,#3243ba 277px,#0aacbe 287px,#06a7c6 297px,#1db3af 308px,#1db3af 320px)"></i><i style="left:390px;width:3px;background:linear-gradient(#0268e1 -6px,#0268e1 -4px,#3243ba 1px,#0f5cdd 8px,#0d75dc 11px,#0268e1 13px,#0871de 18px,#127dd8 24px,#108ed2 26px,#1481d6 32px,#2c4ac7 35px,#0d75dc 38px,#0363e1 46px,#2053d4 49px,#0d75dc 56px,#0268e1 59px,#046de0 62px,#2053d4 65px,#0f5cdd 72px,#2c4ac7 76px,#3243ba 83px,#3637a0 86px,#1079da 102px,#0871de 106px,#2053d4 110px,#0f5cdd 114px,#352a87 118px,#0268e1 127px,#1389d3 132px,#0c93d2 137px,#0d75dc 141px,#0871de 146px,#352a87 157px,#2053d4 162px,#1079da 173px,#2053d4 179px,#0d75dc 185px,#0871de 198px,#1389d3 211px,#0aacbe 225px,#06a7c6 241px,#108ed2 249px,#06a4ca 258px,#06a4ca 267px,#0faeb9 277px,#4dbc92 308px,#42bb98 320px)"></i><i style="left:393px;width:3px;background:linear-gradient(#127dd8 -6px,#0871de -4px,#108ed2 -1px,#108ed2 3px,#353dad 6px,#07a9c2 8px,#079ccf 11px,#06a4ca 18px,#353dad 26px,#352a87 29px,#2c4ac7 35px,#06a7c6 38px,#07a9c2 41px,#2053d4 49px,#2c4ac7 53px,#1481d6 59px,#2c4ac7 62px,#1481d6 65px,#3243ba 69px,#127dd8 72px,#363093 86px,#3243ba 94px,#108ed2 98px,#06a7c6 102px,#07a9c2 106px,#1389d3 114px,#1389d3 118px,#0d75dc 123px,#1079da 127px,#2053d4 137px,#2c4ac7 141px,#1389d3 146px,#06a7c6 151px,#0faeb9 157px,#079ccf 162px,#079ccf 167px,#1389d3 173px,#0998d1 179px,#0c93d2 185px,#0aacbe 198px,#0faeb9 204px,#06a4ca 211px,#2eb7a4 225px,#25b5a9 233px,#38b99e 241px,#1db3af 249px,#2c4ac7 258px,#0faeb9 267px,#2eb7a4 287px,#1db3af 297px,#38b99e 308px,#2eb7a4 320px)"></i><i style="left:396px;width:3px;background:linear-gradient(#127dd8 -6px,#06a0cd -1px,#079ccf 1px,#0f5cdd 8px,#108ed2 16px,#1389d3 18px,#079ccf 21px,#046de0 26px,#046de0 29px,#2c4ac7 32px,#0871de 35px,#1481d6 41px,#1079da 43px,#127dd8 46px,#0871de 49px,#1079da 56px,#0871de 62px,#353dad 65px,#1079da 69px,#1485d4 72px,#127dd8 79px,#046de0 83px,#046de0 86px,#2c4ac7 90px,#1485d4 94px,#1485d4 98px,#079ccf 102px,#108ed2 106px,#2053d4 110px,#0aacbe 114px,#15b1b4 118px,#079ccf 127px,#353dad 132px,#0d75dc 137px,#06a0cd 151px,#079ccf 157px,#06a0cd 162px,#079ccf 185px,#353dad 191px,#1481d6 198px,#06a4ca 204px,#06a4ca 211px,#2eb7a4 218px,#59bd8c 233px,#25b5a9 241px,#0faeb9 258px,#15b1b4 277px,#06a7c6 287px,#42bb98 308px,#42bb98 320px)"></i><i style="left:399px;width:3px;background:linear-gradient(#2c4ac7 -6px,#0f5cdd -1px,#353dad 1px,#0268e1 3px,#3637a0 6px,#1389d3 8px,#108ed2 11px,#0268e1 13px,#2053d4 21px,#1079da 26px,#0871de 29px,#108ed2 35px,#1481d6 43px,#0363e1 46px,#363093 56px,#353dad 62px,#2053d4 65px,#1389d3 72px,#1389d3 79px,#0998d1 83px,#0c93d2 86px,#079ccf 90px,#0d75dc 102px,#108ed2 110px,#1389d3 118px,#1485d4 132px,#1481d6 141px,#4dbc92 198px,#65be86 204px,#38b99e 211px,#25b5a9 225px,#38b99e 241px,#0faeb9 258px,#06a4ca 277px,#108ed2 297px,#0998d1 308px,#07a9c2 320px)"></i><i style="left:402px;width:3px;background:linear-gradient(#0c93d2 -6px,#079ccf -4px,#0871de 6px,#0871de 8px,#0268e1 11px,#1079da 13px,#2c4ac7 16px,#1079da 18px,#046de0 21px,#1485d4 24px,#0c93d2 26px,#1485d4 29px,#079ccf 32px,#1481d6 35px,#0998d1 43px,#0faeb9 49px,#06a7c6 56px,#127dd8 62px,#108ed2 76px,#1079da 79px,#1389d3 83px,#1485d4 86px,#0c93d2 90px,#0871de 94px,#0d75dc 98px,#0363e1 102px,#0363e1 106px,#079ccf 118px,#1481d6 123px,#3637a0 127px,#0268e1 132px,#0363e1 141px,#0c93d2 151px,#0c93d2 162px,#06a4ca 167px,#079ccf 173px,#0aacbe 179px,#15b1b4 198px,#2eb7a4 204px,#07a9c2 211px,#0faeb9 218px,#0998d1 225px,#06a7c6 233px,#07a9c2 267px,#06a0cd 277px,#06a4ca 297px,#4dbc92 320px)"></i><i style="left:405px;width:3px;background:linear-gradient(#363093 -6px,#352a87 3px,#0871de 8px,#1079da 18px,#3243ba 21px,#046de0 24px,#0f5cdd 29px,#0d75dc 38px,#046de0 41px,#0d75dc 43px,#0871de 46px,#1485d4 49px,#353dad 59px,#352a87 86px,#1389d3 110px,#1485d4 118px,#1485d4 127px,#0268e1 137px,#0363e1 141px,#1389d3 146px,#1389d3 151px,#06a0cd 157px,#0faeb9 167px,#3637a0 173px,#2eb7a4 179px,#1485d4 198px,#108ed2 211px,#1079da 218px,#1389d3 233px,#0aacbe 241px,#1db3af 267px,#65be86 277px,#2eb7a4 308px,#4dbc92 320px)"></i><i style="left:408px;width:3px;background:linear-gradient(#0363e1 -6px,#2053d4 -4px,#127dd8 1px,#0871de 6px,#0d75dc 11px,#0363e1 13px,#0363e1 18px,#2053d4 21px,#2c4ac7 26px,#363093 35px,#352a87 43px,#2c4ac7 46px,#363093 49px,#046de0 56px,#0871de 59px,#108ed2 62px,#0871de 69px,#353dad 72px,#127dd8 86px,#1485d4 98px,#1481d6 102px,#108ed2 106px,#127dd8 114px,#1481d6 123px,#3243ba 132px,#0f5cdd 141px,#2c4ac7 146px,#0363e1 151px,#353dad 157px,#1389d3 162px,#06a0cd 167px,#2eb7a4 173px,#06a4ca 185px,#3637a0 191px,#1485d4 198px,#0363e1 218px,#1079da 233px,#2c4ac7 241px,#0c93d2 249px,#0aacbe 287px,#079ccf 308px,#06a0cd 320px)"></i><i style="left:411px;width:3px;background:linear-gradient(#3243ba -6px,#2c4ac7 3px,#352a87 6px,#352a87 11px,#0363e1 13px,#0f5cdd 16px,#079ccf 18px,#0871de 24px,#1079da 26px,#0268e1 29px,#046de0 35px,#2c4ac7 38px,#0268e1 43px,#3243ba 53px,#1485d4 56px,#353dad 59px,#0aacbe 62px,#07a9c2 65px,#0c93d2 69px,#1389d3 76px,#2053d4 79px,#2053d4 83px,#352a87 86px,#352a87 90px,#0268e1 98px,#0c93d2 102px,#079ccf 106px,#1481d6 110px,#127dd8 114px,#0268e1 118px,#0d75dc 123px,#0d75dc 141px,#127dd8 146px,#1079da 151px,#079ccf 157px,#1079da 167px,#3243ba 173px,#108ed2 179px,#1079da 185px,#1079da 191px,#0f5cdd 198px,#2053d4 204px,#108ed2 211px,#0faeb9 225px,#1079da 258px,#1389d3 277px,#127dd8 287px,#0aacbe 320px)"></i><i style="left:414px;width:3px;background:linear-gradient(#353dad -6px,#0871de -4px,#2053d4 1px,#2053d4 8px,#353dad 11px,#0363e1 13px,#046de0 18px,#0268e1 24px,#3243ba 26px,#0268e1 29px,#1079da 46px,#0871de 53px,#2053d4 56px,#0268e1 65px,#3243ba 72px,#108ed2 76px,#3637a0 90px,#0363e1 94px,#127dd8 106px,#0c93d2 110px,#0998d1 114px,#15b1b4 118px,#06a7c6 123px,#0f5cdd 127px,#0d75dc 132px,#0363e1 141px,#0268e1 146px,#0c93d2 151px,#1389d3 157px,#2053d4 162px,#1389d3 167px,#0c93d2 179px,#1485d4 198px,#108ed2 204px,#127dd8 211px,#0998d1 233px,#15b1b4 249px,#07a9c2 258px,#0aacbe 267px,#0998d1 277px,#07a9c2 297px,#06a7c6 308px,#25b5a9 320px)"></i><i style="left:417px;width:3px;background:linear-gradient(#2053d4 -6px,#0363e1 -1px,#3243ba 1px,#0f5cdd 3px,#3637a0 8px,#3243ba 16px,#363093 18px,#0d75dc 29px,#1485d4 41px,#108ed2 46px,#046de0 53px,#046de0 56px,#1481d6 59px,#0f5cdd 62px,#0363e1 65px,#1481d6 69px,#127dd8 79px,#0c93d2 83px,#079ccf 94px,#1389d3 98px,#0c93d2 102px,#1389d3 106px,#079ccf 110px,#1389d3 118px,#108ed2 123px,#1079da 127px,#108ed2 146px,#0c93d2 157px,#06a0cd 162px,#25b5a9 167px,#38b99e 179px,#15b1b4 185px,#0998d1 191px,#0c93d2 204px,#07a9c2 211px,#65be86 218px,#1389d3 258px,#1485d4 287px,#06a7c6 308px,#06a4ca 320px)"></i><i style="left:420px;width:3px;background:linear-gradient(#2053d4 -6px,#352a87 -4px,#352a87 3px,#353dad 6px,#0d75dc 8px,#046de0 13px,#2053d4 16px,#3243ba 18px,#1389d3 26px,#0c93d2 29px,#1485d4 32px,#3637a0 38px,#353dad 41px,#1389d3 46px,#06a4ca 56px,#0d75dc 59px,#1079da 62px,#0871de 65px,#0871de 72px,#2053d4 79px,#352a87 83px,#352a87 94px,#0f5cdd 98px,#0363e1 106px,#127dd8 110px,#1481d6 123px,#0998d1 127px,#0c93d2 132px,#06a7c6 141px,#2eb7a4 146px,#87bf77 157px,#38b99e 162px,#1db3af 167px,#079ccf 173px,#0998d1 179px,#0aacbe 185px,#59bd8c 198px,#079ccf 225px,#07a9c2 233px,#38b99e 267px,#0aacbe 297px,#07a9c2 320px)"></i><i style="left:423px;width:3px;background:linear-gradient(#0d75dc -6px,#108ed2 -1px,#0c93d2 1px,#1485d4 3px,#0f5cdd 6px,#3637a0 16px,#2053d4 24px,#0363e1 29px,#0d75dc 35px,#0f5cdd 38px,#0363e1 43px,#2053d4 46px,#0268e1 59px,#127dd8 65px,#353dad 69px,#127dd8 72px,#108ed2 79px,#1389d3 83px,#06a0cd 86px,#0998d1 90px,#2c4ac7 94px,#046de0 98px,#353dad 102px,#3243ba 118px,#1481d6 132px,#1481d6 137px,#06a0cd 151px,#15b1b4 173px,#06a4ca 204px,#0faeb9 211px,#07a9c2 218px,#25b5a9 225px,#1db3af 241px,#42bb98 258px,#07a9c2 267px,#06a4ca 277px,#1389d3 287px,#108ed2 297px,#07a9c2 308px,#15b1b4 320px)"></i><i style="left:426px;width:3px;background:linear-gradient(#0268e1 -6px,#2c4ac7 1px,#353dad 8px,#2053d4 11px,#2053d4 21px,#352a87 26px,#363093 46px,#3243ba 49px,#2053d4 56px,#1079da 59px,#1481d6 65px,#0363e1 69px,#0363e1 76px,#3243ba 79px,#0363e1 83px,#353dad 86px,#0aacbe 102px,#0aacbe 106px,#1485d4 114px,#0998d1 127px,#0c93d2 132px,#3243ba 137px,#1481d6 141px,#3243ba 146px,#0268e1 151px,#046de0 167px,#1485d4 173px,#1481d6 185px,#3243ba 191px,#108ed2 198px,#079ccf 204px,#108ed2 211px,#06a0cd 218px,#108ed2 225px,#06a7c6 233px,#15b1b4 258px,#2eb7a4 277px,#3243ba 287px,#0aacbe 297px,#06a4ca 320px)"></i><i style="left:429px;width:3px;background:linear-gradient(#0f5cdd -6px,#0268e1 -1px,#3243ba 1px,#1079da 3px,#0363e1 6px,#0268e1 13px,#2053d4 16px,#046de0 18px,#1079da 24px,#3637a0 26px,#0998d1 29px,#06a0cd 32px,#108ed2 38px,#079ccf 46px,#2053d4 49px,#108ed2 53px,#1389d3 59px,#0871de 62px,#0998d1 65px,#1389d3 69px,#06a4ca 72px,#0aacbe 76px,#0c93d2 79px,#0998d1 94px,#06a0cd 102px,#0871de 118px,#0871de 127px,#0268e1 132px,#046de0 141px,#1481d6 151px,#0998d1 157px,#0998d1 162px,#06a7c6 167px,#06a0cd 173px,#15b1b4 179px,#0faeb9 191px,#079ccf 198px,#15b1b4 204px,#1db3af 211px,#4dbc92 218px,#4dbc92 225px,#1db3af 233px,#25b5a9 267px,#0aacbe 277px,#15b1b4 297px,#0faeb9 308px,#25b5a9 320px)"></i><i style="left:432px;width:3px;background:linear-gradient(#0268e1 -6px,#0363e1 -1px,#3243ba 1px,#0871de 3px,#046de0 6px,#1389d3 8px,#0363e1 16px,#0d75dc 24px,#0d75dc 29px,#3243ba 35px,#363093 46px,#0f5cdd 49px,#352a87 65px,#352a87 69px,#127dd8 83px,#0871de 86px,#1485d4 90px,#1389d3 94px,#0d75dc 98px,#1481d6 102px,#2053d4 106px,#0c93d2 110px,#0c93d2 114px,#06a7c6 118px,#079ccf 123px,#127dd8 127px,#046de0 137px,#0998d1 157px,#127dd8 167px,#1481d6 179px,#1079da 185px,#108ed2 204px,#1485d4 211px,#2c4ac7 218px,#0c93d2 225px,#06a0cd 249px,#079ccf 258px,#42bb98 287px,#42bb98 308px,#0aacbe 320px)"></i><i style="left:435px;width:3px;background:linear-gradient(#2c4ac7 -6px,#0268e1 -4px,#2053d4 1px,#2053d4 3px,#046de0 6px,#0363e1 11px,#0d75dc 21px,#0268e1 24px,#127dd8 26px,#1481d6 29px,#0268e1 32px,#0f5cdd 35px,#352a87 38px,#363093 41px,#0f5cdd 43px,#108ed2 46px,#0aacbe 53px,#07a9c2 56px,#0faeb9 59px,#0998d1 62px,#06a0cd 65px,#127dd8 69px,#1481d6 72px,#0f5cdd 79px,#0d75dc 83px,#0871de 90px,#1079da 98px,#108ed2 102px,#046de0 114px,#353dad 118px,#353dad 127px,#2053d4 132px,#2053d4 137px,#0871de 141px,#0871de 151px,#1485d4 157px,#1481d6 167px,#046de0 173px,#079ccf 179px,#06a7c6 185px,#38b99e 191px,#4dbc92 198px,#15b1b4 204px,#15b1b4 211px,#079ccf 225px,#0c93d2 233px,#06a0cd 241px,#1389d3 258px,#0aacbe 277px,#07a9c2 287px,#1db3af 297px,#25b5a9 320px)"></i><i style="left:438px;width:3px;background:linear-gradient(#1079da -6px,#046de0 -4px,#1481d6 -1px,#1485d4 3px,#0363e1 8px,#0f5cdd 11px,#046de0 13px,#0871de 18px,#1481d6 21px,#0871de 26px,#1481d6 29px,#1079da 32px,#1481d6 35px,#0268e1 41px,#2053d4 46px,#352a87 49px,#352a87 53px,#2c4ac7 56px,#2c4ac7 59px,#1485d4 62px,#3637a0 65px,#127dd8 69px,#1481d6 76px,#0363e1 86px,#0268e1 90px,#2c4ac7 94px,#2c4ac7 98px,#1079da 102px,#2c4ac7 106px,#0d75dc 110px,#0d75dc 118px,#1079da 123px,#0d75dc 127px,#1389d3 132px,#3637a0 137px,#079ccf 141px,#079ccf 151px,#25b5a9 167px,#38b99e 179px,#07a9c2 204px,#0faeb9 211px,#2053d4 218px,#06a7c6 225px,#42bb98 233px,#2eb7a4 249px,#71bf80 267px,#59bd8c 297px,#1db3af 308px,#71bf80 320px)"></i><i style="left:441px;width:3px;background:linear-gradient(#127dd8 -6px,#0f5cdd 1px,#1485d4 6px,#1485d4 13px,#108ed2 16px,#1389d3 18px,#0d75dc 21px,#1485d4 24px,#2c4ac7 29px,#352a87 38px,#3637a0 41px,#352a87 43px,#353dad 49px,#0871de 56px,#046de0 59px,#1485d4 62px,#0d75dc 72px,#1485d4 76px,#1481d6 83px,#079ccf 90px,#1389d3 102px,#0871de 110px,#2c4ac7 118px,#0f5cdd 127px,#1481d6 132px,#1481d6 137px,#1079da 141px,#1485d4 146px,#0d75dc 151px,#1481d6 162px,#1079da 167px,#1389d3 185px,#1481d6 198px,#2c4ac7 204px,#079ccf 211px,#15b1b4 233px,#15b1b4 241px,#42bb98 249px,#87bf77 267px,#1db3af 277px,#42bb98 287px,#25b5a9 320px)"></i><i style="left:444px;width:3px;background:linear-gradient(#1079da -6px,#046de0 -4px,#1485d4 -1px,#1079da 3px,#2053d4 8px,#0268e1 11px,#353dad 13px,#0f5cdd 16px,#352a87 18px,#0268e1 24px,#0268e1 26px,#0c93d2 32px,#108ed2 35px,#07a9c2 38px,#079ccf 41px,#06a7c6 43px,#1389d3 46px,#0aacbe 49px,#0c93d2 53px,#0998d1 56px,#0871de 62px,#0871de 72px,#079ccf 83px,#079ccf 86px,#07a9c2 90px,#0998d1 98px,#127dd8 102px,#1389d3 106px,#108ed2 123px,#2053d4 127px,#0998d1 132px,#1389d3 137px,#06a4ca 141px,#06a0cd 157px,#108ed2 162px,#1079da 179px,#108ed2 185px,#127dd8 198px,#0998d1 204px,#0998d1 218px,#06a4ca 225px,#06a4ca 233px,#1db3af 241px,#42bb98 258px,#15b1b4 267px,#2eb7a4 277px,#0aacbe 308px,#1db3af 320px)"></i><i style="left:447px;width:3px;background:linear-gradient(#2053d4 -6px,#0871de -4px,#0268e1 -1px,#1481d6 1px,#0268e1 3px,#0d75dc 11px,#0c93d2 18px,#0c93d2 21px,#2c4ac7 26px,#353dad 32px,#0268e1 35px,#2c4ac7 43px,#0268e1 46px,#3637a0 49px,#0f5cdd 56px,#0d75dc 59px,#0998d1 72px,#06a0cd 76px,#0c93d2 83px,#2c4ac7 86px,#108ed2 90px,#1485d4 94px,#0f5cdd 102px,#3243ba 106px,#0268e1 110px,#0268e1 118px,#3637a0 123px,#046de0 132px,#0f5cdd 141px,#0871de 146px,#046de0 162px,#1481d6 173px,#108ed2 185px,#0faeb9 198px,#0aacbe 211px,#06a4ca 218px,#0aacbe 233px,#2eb7a4 241px,#4dbc92 258px,#06a4ca 287px,#0faeb9 320px)"></i><i style="left:450px;width:3px;background:linear-gradient(#0d75dc -6px,#353dad 1px,#0f5cdd 3px,#0363e1 8px,#3637a0 11px,#0f5cdd 21px,#0363e1 29px,#0268e1 32px,#353dad 38px,#0268e1 41px,#0f5cdd 43px,#363093 46px,#352a87 49px,#0363e1 56px,#079ccf 65px,#0d75dc 72px,#0871de 79px,#2053d4 94px,#0871de 98px,#0363e1 102px,#046de0 106px,#0f5cdd 110px,#046de0 123px,#0f5cdd 132px,#0363e1 146px,#0f5cdd 151px,#0268e1 157px,#2c4ac7 162px,#079ccf 167px,#0faeb9 173px,#15b1b4 179px,#07a9c2 185px,#1481d6 198px,#1079da 211px,#0c93d2 218px,#1481d6 225px,#06a7c6 267px,#06a7c6 277px,#25b5a9 287px,#07a9c2 297px,#2053d4 308px,#06a0cd 320px)"></i><i style="left:453px;width:3px;background:linear-gradient(#1481d6 -6px,#0268e1 -1px,#0871de 8px,#1485d4 11px,#1485d4 13px,#0aacbe 18px,#353dad 26px,#352a87 29px,#3243ba 32px,#0871de 35px,#0c93d2 41px,#1481d6 53px,#3243ba 56px,#046de0 62px,#353dad 65px,#0268e1 72px,#0d75dc 79px,#1481d6 83px,#0d75dc 86px,#108ed2 90px,#046de0 98px,#1079da 102px,#0f5cdd 106px,#0871de 118px,#0d75dc 123px,#046de0 127px,#1485d4 141px,#1079da 146px,#06a4ca 167px,#07a9c2 179px,#06a4ca 191px,#2eb7a4 225px,#38b99e 241px,#0faeb9 249px,#2eb7a4 267px,#0faeb9 277px,#1db3af 287px,#353dad 297px,#25b5a9 308px,#0aacbe 320px)"></i><i style="left:456px;width:3px;background:linear-gradient(#2053d4 -6px,#0871de -4px,#046de0 3px,#1079da 6px,#0268e1 11px,#1485d4 13px,#1481d6 18px,#046de0 21px,#1079da 24px,#1079da 32px,#353dad 35px,#046de0 38px,#0363e1 41px,#127dd8 49px,#0d75dc 56px,#2053d4 59px,#353dad 62px,#046de0 69px,#0363e1 76px,#1079da 79px,#0871de 83px,#1485d4 86px,#1481d6 90px,#1389d3 94px,#0871de 102px,#353dad 106px,#046de0 110px,#2053d4 118px,#06a7c6 127px,#0aacbe 132px,#42bb98 137px,#2eb7a4 141px,#2c4ac7 146px,#1389d3 151px,#0c93d2 167px,#2c4ac7 173px,#0998d1 179px,#046de0 198px,#1389d3 204px,#06a4ca 218px,#25b5a9 225px,#0faeb9 233px,#0aacbe 258px,#1389d3 277px,#079ccf 297px,#38b99e 320px)"></i><i style="left:459px;width:3px;background:linear-gradient(#1079da -6px,#0f5cdd -1px,#0871de 3px,#0363e1 6px,#046de0 8px,#2053d4 11px,#0268e1 13px,#0f5cdd 16px,#3637a0 18px,#0268e1 26px,#1481d6 29px,#2053d4 35px,#353dad 41px,#0d75dc 53px,#0363e1 62px,#1079da 69px,#046de0 72px,#1079da 79px,#0871de 83px,#1389d3 86px,#108ed2 98px,#079ccf 102px,#127dd8 114px,#1481d6 118px,#0871de 123px,#0c93d2 137px,#108ed2 157px,#0c93d2 162px,#2eb7a4 173px,#4dbc92 185px,#1db3af 198px,#0faeb9 204px,#3243ba 211px,#108ed2 218px,#0c93d2 233px,#07a9c2 249px,#06a7c6 277px,#079ccf 287px,#0aacbe 308px,#07a9c2 320px)"></i><i style="left:462px;width:1px;background:linear-gradient(#0268e1 -6px,#352a87 1px,#352a87 18px,#353dad 21px,#352a87 24px,#0f5cdd 29px,#352a87 38px,#352a87 41px,#2c4ac7 43px,#0f5cdd 46px,#1481d6 49px,#1481d6 53px,#363093 59px,#352a87 62px,#2053d4 65px,#352a87 69px,#2053d4 72px,#352a87 76px,#352a87 90px,#0268e1 98px,#1485d4 102px,#1485d4 106px,#2c4ac7 114px,#363093 123px,#1079da 137px,#0871de 141px,#353dad 146px,#3243ba 151px,#352a87 157px,#1079da 167px,#0998d1 179px,#0998d1 191px,#1485d4 204px,#0998d1 225px,#1389d3 249px,#07a9c2 287px,#06a0cd 308px,#1389d3 320px)"></i><i style="left:463px;width:1px;background:linear-gradient(#0268e1 -6px,#352a87 1px,#352a87 18px,#353dad 21px,#352a87 24px,#0f5cdd 29px,#352a87 38px,#352a87 41px,#2c4ac7 43px,#0f5cdd 46px,#1481d6 49px,#1481d6 53px,#0f5cdd 56px,#352a87 62px,#2053d4 65px,#363093 69px,#2053d4 72px,#353dad 76px,#2c4ac7 83px,#3243ba 86px,#0c93d2 98px,#0aacbe 102px,#0faeb9 106px,#079ccf 114px,#079ccf 123px,#38b99e 137px,#1db3af 146px,#2eb7a4 151px,#25b5a9 157px,#92bf73 167px,#d9ba56 185px,#87bf77 211px,#59bd8c 233px,#25b5a9 249px,#42bb98 297px,#0faeb9 320px)"></i><i style="left:464px;width:1px;background:linear-gradient(#1db3af -6px,#06a7c6 11px,#15b1b4 21px,#0aacbe 24px,#1db3af 32px,#0faeb9 41px,#4dbc92 53px,#15b1b4 62px,#2053d4 65px,#1db3af 69px,#2053d4 72px,#25b5a9 76px,#25b5a9 86px,#92bf73 102px,#71bf80 123px,#a5be6b 137px,#7cbf7b 157px,#d9ba56 179px,#92bf73 258px,#a5be6b 297px,#7cbf7b 320px)"></i><i style="left:465px;width:3px;background:linear-gradient(#15b1b4 -6px,#07a9c2 -4px,#07a9c2 1px,#2eb7a4 8px,#25b5a9 13px,#38b99e 18px,#0faeb9 21px,#353dad 24px,#07a9c2 26px,#06a4ca 29px,#71bf80 41px,#42bb98 43px,#38b99e 56px,#2c4ac7 59px,#3637a0 62px,#38b99e 65px,#2eb7a4 79px,#59bd8c 83px,#42bb98 86px,#87bf77 94px,#7cbf7b 98px,#a5be6b 106px,#7cbf7b 123px,#aebe67 137px,#a5be6b 141px,#f8bb44 191px,#b7bd64 233px,#92bf73 287px,#aebe67 297px,#87bf77 320px)"></i><i style="left:468px;width:1px;background:linear-gradient(#2053d4 -6px,#352a87 -4px,#363093 16px,#0871de 18px,#352a87 24px,#352a87 46px,#353dad 49px,#046de0 53px,#3243ba 56px,#0268e1 59px,#0268e1 62px,#2053d4 69px,#363093 72px,#353dad 79px,#2c4ac7 83px,#2053d4 90px,#046de0 94px,#0d75dc 102px,#07a9c2 118px,#0aacbe 127px,#2053d4 132px,#0aacbe 137px,#2eb7a4 141px,#42bb98 146px,#7cbf7b 151px,#65be86 167px,#4dbc92 173px,#353dad 179px,#92bf73 185px,#7cbf7b 211px,#4dbc92 233px,#38b99e 241px,#38b99e 249px,#108ed2 287px,#1485d4 308px,#1389d3 320px)"></i><i style="left:469px;width:2px;background:linear-gradient(#2053d4 -6px,#352a87 -4px,#363093 16px,#0871de 18px,#352a87 24px,#352a87 46px,#353dad 49px,#046de0 53px,#3243ba 56px,#0363e1 59px,#2053d4 65px,#352a87 72px,#352a87 79px,#2c4ac7 83px,#352a87 86px,#363093 106px,#0f5cdd 118px,#3243ba 123px,#2053d4 132px,#363093 137px,#0f5cdd 141px,#0f5cdd 146px,#127dd8 151px,#1079da 157px,#363093 167px,#352a87 173px,#353dad 179px,#352a87 185px,#3243ba 204px,#127dd8 218px,#1481d6 233px,#127dd8 241px,#108ed2 249px,#363093 287px,#352a87 320px)"></i><i style="left:471px;width:3px;background:linear-gradient(#0f5cdd -6px,#0871de -4px,#0871de -1px,#3243ba 1px,#0268e1 3px,#353dad 6px,#2053d4 11px,#352a87 13px,#352a87 16px,#3243ba 18px,#353dad 21px,#0268e1 24px,#1079da 32px,#1079da 38px,#2c4ac7 41px,#1481d6 43px,#0871de 46px,#0871de 49px,#0f5cdd 53px,#0d75dc 59px,#1079da 65px,#0268e1 69px,#0268e1 72px,#1079da 76px,#0f5cdd 79px,#0268e1 83px,#0f5cdd 90px,#0f5cdd 98px,#0268e1 102px,#2053d4 106px,#0268e1 110px,#0363e1 114px,#0d75dc 118px,#046de0 123px,#1079da 127px,#1079da 132px,#0c93d2 141px,#0871de 146px,#2053d4 157px,#0871de 167px,#3243ba 179px,#0871de 185px,#2c4ac7 191px,#1079da 218px,#0d75dc 225px,#108ed2 233px,#0871de 241px,#0268e1 249px,#0871de 258px,#0f5cdd 267px,#0d75dc 277px,#0d75dc 297px,#1481d6 308px,#0d75dc 320px)"></i><i style="left:474px;width:3px;background:linear-gradient(#352a87 -6px,#3637a0 -1px,#352a87 6px,#352a87 8px,#2c4ac7 11px,#363093 13px,#3243ba 16px,#353dad 18px,#2c4ac7 21px,#352a87 24px,#352a87 110px,#3637a0 123px,#0f5cdd 127px,#3637a0 132px,#2c4ac7 141px,#352a87 146px,#3637a0 162px,#0363e1 173px,#0363e1 179px,#352a87 191px,#3637a0 198px,#352a87 204px,#2053d4 218px,#127dd8 225px,#0f5cdd 241px,#1079da 249px,#046de0 277px,#0268e1 297px,#353dad 308px,#352a87 320px)"></i><i style="left:477px;width:3px;background:linear-gradient(#352a87 -6px,#353dad -1px,#0268e1 1px,#0363e1 3px,#352a87 6px,#352a87 16px,#353dad 21px,#352a87 24px,#3637a0 32px,#0268e1 38px,#2053d4 41px,#2c4ac7 46px,#0d75dc 49px,#353dad 53px,#3243ba 59px,#352a87 62px,#352a87 72px,#2053d4 79px,#363093 94px,#363093 114px,#2053d4 123px,#3637a0 127px,#0268e1 132px,#2053d4 137px,#0f5cdd 141px,#108ed2 146px,#127dd8 151px,#06a0cd 157px,#1485d4 167px,#0998d1 173px,#1485d4 179px,#0f5cdd 185px,#127dd8 191px,#0871de 198px,#1079da 204px,#0871de 218px,#1481d6 225px,#0d75dc 233px,#353dad 241px,#1389d3 249px,#1079da 277px,#0363e1 287px,#0f5cdd 308px,#1079da 320px)"></i><i style="left:480px;width:3px;background:linear-gradient(#352a87 -6px,#3637a0 26px,#0f5cdd 29px,#353dad 32px,#3243ba 38px,#363093 41px,#2053d4 43px,#0f5cdd 49px,#2c4ac7 53px,#352a87 56px,#352a87 98px,#046de0 110px,#0363e1 123px,#0268e1 127px,#3637a0 141px,#2c4ac7 146px,#352a87 151px,#352a87 162px,#0363e1 173px,#0f5cdd 191px,#353dad 204px,#3243ba 211px,#352a87 225px,#046de0 267px,#3637a0 277px,#1389d3 287px,#1389d3 297px,#0871de 308px,#0363e1 320px)"></i><i style="left:483px;width:3px;background:linear-gradient(#0f5cdd -6px,#2c4ac7 -4px,#0d75dc -1px,#1079da 1px,#2c4ac7 3px,#3637a0 6px,#0f5cdd 8px,#352a87 11px,#352a87 24px,#3637a0 26px,#352a87 29px,#353dad 32px,#3637a0 35px,#2053d4 41px,#352a87 53px,#3637a0 59px,#352a87 65px,#3637a0 69px,#0363e1 72px,#3637a0 79px,#0f5cdd 83px,#2c4ac7 98px,#0871de 102px,#0363e1 110px,#352a87 118px,#2053d4 137px,#3637a0 141px,#0f5cdd 146px,#2053d4 151px,#0363e1 157px,#0f5cdd 162px,#046de0 167px,#0268e1 173px,#127dd8 179px,#0871de 185px,#1079da 191px,#3243ba 198px,#2053d4 204px,#352a87 218px,#3243ba 225px,#352a87 233px,#352a87 241px,#2053d4 249px,#0268e1 267px,#1485d4 297px,#1481d6 308px,#108ed2 320px)"></i><i style="left:486px;width:3px;background:linear-gradient(#3637a0 -6px,#352a87 1px,#2053d4 3px,#046de0 8px,#1481d6 11px,#2c4ac7 13px,#0f5cdd 16px,#353dad 18px,#0f5cdd 29px,#0f5cdd 35px,#2c4ac7 41px,#0f5cdd 43px,#2c4ac7 46px,#1079da 53px,#0d75dc 56px,#3243ba 59px,#1485d4 62px,#1079da 76px,#1079da 79px,#1389d3 83px,#1389d3 90px,#046de0 98px,#0268e1 118px,#1079da 123px,#0363e1 127px,#127dd8 132px,#0871de 137px,#1485d4 141px,#0d75dc 151px,#0c93d2 157px,#108ed2 162px,#06a4ca 167px,#1389d3 198px,#06a0cd 204px,#0faeb9 225px,#1079da 249px,#353dad 258px,#1079da 267px,#1079da 277px,#0f5cdd 287px,#0d75dc 297px,#046de0 308px,#1485d4 320px)"></i><i style="left:489px;width:3px;background:linear-gradient(#2c4ac7 -6px,#352a87 -4px,#352a87 1px,#0f5cdd 3px,#352a87 6px,#3637a0 13px,#2053d4 16px,#352a87 24px,#363093 38px,#0268e1 41px,#2c4ac7 46px,#0268e1 56px,#363093 62px,#0f5cdd 65px,#353dad 69px,#2053d4 72px,#2c4ac7 79px,#352a87 83px,#3637a0 90px,#352a87 94px,#2c4ac7 98px,#363093 102px,#352a87 106px,#0363e1 110px,#3243ba 114px,#0363e1 123px,#108ed2 127px,#0998d1 132px,#15b1b4 137px,#1079da 146px,#353dad 157px,#3243ba 162px,#0871de 167px,#0363e1 173px,#1079da 191px,#046de0 204px,#127dd8 211px,#0268e1 218px,#0363e1 225px,#127dd8 233px,#127dd8 241px,#0c93d2 249px,#108ed2 258px,#0c93d2 267px,#1481d6 277px,#0f5cdd 320px)"></i><i style="left:492px;width:3px;background:linear-gradient(#352a87 -6px,#3637a0 -1px,#0363e1 1px,#353dad 6px,#0d75dc 8px,#2c4ac7 11px,#1079da 16px,#0d75dc 18px,#352a87 26px,#352a87 32px,#2053d4 35px,#352a87 38px,#353dad 41px,#352a87 46px,#363093 59px,#046de0 62px,#363093 69px,#352a87 98px,#353dad 102px,#352a87 110px,#352a87 127px,#0871de 137px,#0363e1 141px,#363093 146px,#352a87 173px,#3637a0 179px,#363093 204px,#0268e1 218px,#0f5cdd 233px,#0d75dc 241px,#2c4ac7 267px,#2053d4 277px,#3637a0 287px,#2c4ac7 297px,#3243ba 320px)"></i><i style="left:495px;width:3px;background:linear-gradient(#3243ba -6px,#0363e1 -1px,#353dad 1px,#0268e1 3px,#353dad 8px,#2c4ac7 11px,#046de0 13px,#0268e1 16px,#127dd8 18px,#3243ba 21px,#352a87 29px,#352a87 35px,#0f5cdd 38px,#0d75dc 43px,#046de0 49px,#0d75dc 56px,#1485d4 59px,#046de0 65px,#1481d6 69px,#1079da 90px,#046de0 98px,#353dad 102px,#2c4ac7 110px,#0d75dc 114px,#3243ba 123px,#0268e1 127px,#0268e1 132px,#2c4ac7 137px,#2053d4 141px,#1079da 146px,#0c93d2 157px,#0d75dc 162px,#1481d6 173px,#1079da 179px,#108ed2 185px,#1485d4 191px,#0c93d2 198px,#3243ba 204px,#127dd8 211px,#0363e1 218px,#0f5cdd 225px,#0c93d2 249px,#0998d1 258px,#1485d4 267px,#0c93d2 277px,#1481d6 287px,#2c4ac7 297px,#1389d3 308px,#127dd8 320px)"></i><i style="left:498px;width:3px;background:linear-gradient(#0871de -6px,#0268e1 1px,#3637a0 6px,#352a87 24px,#2053d4 26px,#352a87 29px,#0363e1 38px,#1079da 41px,#2053d4 43px,#353dad 53px,#0f5cdd 59px,#127dd8 62px,#0f5cdd 65px,#2c4ac7 69px,#352a87 72px,#352a87 76px,#2053d4 79px,#2c4ac7 83px,#127dd8 86px,#046de0 90px,#1485d4 94px,#2053d4 110px,#363093 114px,#3637a0 127px,#2c4ac7 132px,#2c4ac7 137px,#0363e1 141px,#0363e1 146px,#06a0cd 151px,#1481d6 162px,#353dad 173px,#2c4ac7 179px,#1079da 191px,#1389d3 204px,#0363e1 211px,#2053d4 233px,#3243ba 241px,#0363e1 267px,#06a4ca 287px,#079ccf 308px,#108ed2 320px)"></i><i style="left:501px;width:3px;background:linear-gradient(#2c4ac7 -6px,#352a87 -1px,#352a87 8px,#3637a0 11px,#352a87 16px,#0f5cdd 21px,#3243ba 24px,#046de0 26px,#353dad 32px,#352a87 43px,#352a87 59px,#0f5cdd 62px,#352a87 65px,#3637a0 83px,#352a87 94px,#0363e1 102px,#0f5cdd 106px,#1481d6 114px,#3637a0 118px,#127dd8 123px,#0268e1 132px,#352a87 137px,#3243ba 141px,#2053d4 151px,#352a87 173px,#352a87 191px,#0f5cdd 198px,#363093 218px,#2c4ac7 241px,#353dad 249px,#0268e1 277px,#3243ba 287px,#0363e1 297px,#2053d4 308px,#0268e1 320px)"></i><i style="left:504px;width:3px;background:linear-gradient(#079ccf -6px,#0d75dc 3px,#0998d1 8px,#1079da 11px,#127dd8 13px,#0f5cdd 21px,#0363e1 24px,#353dad 26px,#363093 29px,#2c4ac7 35px,#363093 38px,#352a87 41px,#2c4ac7 46px,#1079da 53px,#0871de 62px,#1079da 65px,#0f5cdd 69px,#1389d3 72px,#079ccf 76px,#1079da 79px,#1389d3 83px,#0871de 90px,#1079da 94px,#046de0 106px,#2053d4 110px,#1389d3 114px,#1079da 123px,#2053d4 127px,#353dad 137px,#2053d4 141px,#1389d3 151px,#0871de 167px,#2c4ac7 173px,#3243ba 185px,#2053d4 198px,#1485d4 211px,#0c93d2 233px,#1481d6 249px,#1485d4 267px,#0f5cdd 297px,#0d75dc 308px,#0363e1 320px)"></i><i style="left:507px;width:3px;background:linear-gradient(#352a87 -6px,#352a87 1px,#2c4ac7 3px,#352a87 6px,#352a87 49px,#353dad 53px,#352a87 56px,#363093 114px,#3243ba 118px,#352a87 123px,#352a87 141px,#3243ba 146px,#352a87 167px,#352a87 179px,#2053d4 185px,#0268e1 204px,#352a87 218px,#3637a0 241px,#2c4ac7 249px,#353dad 258px,#0363e1 267px,#3243ba 277px,#0871de 297px,#0871de 308px,#1481d6 320px)"></i><i style="left:510px;width:3px;background:linear-gradient(#352a87 -6px,#352a87 41px,#0363e1 49px,#0363e1 53px,#353dad 56px,#353dad 59px,#0f5cdd 62px,#352a87 65px,#352a87 76px,#3243ba 79px,#363093 83px,#353dad 86px,#352a87 94px,#2053d4 98px,#352a87 102px,#363093 127px,#046de0 137px,#0268e1 151px,#353dad 157px,#352a87 173px,#363093 179px,#127dd8 191px,#0998d1 204px,#046de0 211px,#0268e1 218px,#363093 225px,#0363e1 249px,#0363e1 258px,#3243ba 267px,#363093 308px,#2c4ac7 320px)"></i><i style="left:513px;width:3px;background:linear-gradient(#352a87 -6px,#352a87 3px,#3243ba 6px,#363093 11px,#0f5cdd 13px,#363093 16px,#3637a0 53px,#353dad 56px,#0d75dc 59px,#352a87 72px,#352a87 83px,#2053d4 86px,#2c4ac7 90px,#3637a0 94px,#3243ba 98px,#3637a0 102px,#2c4ac7 114px,#3637a0 123px,#353dad 127px,#352a87 137px,#352a87 162px,#2c4ac7 173px,#3637a0 185px,#0f5cdd 198px,#353dad 211px,#352a87 218px,#352a87 225px,#1481d6 249px,#1481d6 267px,#1485d4 277px,#127dd8 287px,#1485d4 297px,#079ccf 308px,#0998d1 320px)"></i><i style="left:516px;width:3px;background:linear-gradient(#352a87 -6px,#352a87 1px,#3243ba 6px,#0871de 8px,#0268e1 11px,#046de0 13px,#353dad 18px,#046de0 24px,#0268e1 26px,#1079da 29px,#353dad 32px,#352a87 41px,#352a87 46px,#3637a0 53px,#352a87 59px,#3637a0 69px,#046de0 72px,#1079da 79px,#0268e1 83px,#0d75dc 86px,#0268e1 90px,#0268e1 98px,#3243ba 102px,#353dad 114px,#046de0 118px,#353dad 127px,#353dad 132px,#363093 137px,#2053d4 141px,#2053d4 146px,#0d75dc 151px,#353dad 162px,#353dad 167px,#352a87 173px,#2c4ac7 185px,#352a87 191px,#0f5cdd 204px,#0f5cdd 211px,#0d75dc 225px,#0871de 233px,#0f5cdd 241px,#0268e1 249px,#3637a0 277px,#0f5cdd 287px,#0d75dc 320px)"></i><i style="left:519px;width:3px;background:linear-gradient(#363093 -6px,#352a87 11px,#2053d4 13px,#352a87 16px,#3637a0 53px,#353dad 56px,#352a87 59px,#352a87 94px,#0268e1 106px,#0f5cdd 110px,#127dd8 118px,#3243ba 127px,#352a87 151px,#3243ba 157px,#2c4ac7 173px,#0268e1 179px,#352a87 191px,#352a87 204px,#0871de 233px,#046de0 241px,#0d75dc 249px,#0268e1 258px,#046de0 277px,#3243ba 297px,#046de0 320px)"></i><i style="left:522px;width:3px;background:linear-gradient(#353dad -6px,#0f5cdd -4px,#2c4ac7 -1px,#046de0 1px,#2053d4 6px,#363093 8px,#353dad 11px,#352a87 16px,#352a87 21px,#2c4ac7 24px,#3637a0 26px,#353dad 32px,#046de0 35px,#0268e1 43px,#0d75dc 46px,#0871de 49px,#1481d6 53px,#127dd8 56px,#0c93d2 59px,#3637a0 62px,#0c93d2 65px,#127dd8 76px,#0268e1 79px,#0d75dc 83px,#2c4ac7 86px,#3243ba 90px,#352a87 94px,#352a87 110px,#2c4ac7 114px,#3637a0 118px,#0268e1 123px,#0268e1 127px,#3243ba 137px,#1079da 151px,#046de0 173px,#1485d4 185px,#0aacbe 198px,#0998d1 211px,#353dad 218px,#1079da 241px,#0268e1 249px,#127dd8 267px,#1389d3 297px,#1481d6 308px,#108ed2 320px)"></i><i style="left:525px;width:3px;background:linear-gradient(#3637a0 -6px,#3243ba 6px,#0871de 8px,#3243ba 13px,#3637a0 21px,#2c4ac7 24px,#352a87 29px,#363093 43px,#0363e1 49px,#2c4ac7 53px,#0f5cdd 56px,#3243ba 62px,#0363e1 65px,#0363e1 76px,#2c4ac7 79px,#1485d4 86px,#2053d4 98px,#2053d4 110px,#1389d3 118px,#1389d3 141px,#1079da 146px,#0d75dc 151px,#3637a0 162px,#0d75dc 173px,#0d75dc 179px,#108ed2 191px,#1389d3 204px,#2c4ac7 218px,#363093 233px,#3243ba 241px,#363093 267px,#2053d4 277px,#2c4ac7 287px,#046de0 297px,#046de0 308px,#363093 320px)"></i><i style="left:528px;width:3px;background:linear-gradient(#352a87 -6px,#0871de -1px,#0268e1 6px,#3637a0 8px,#352a87 18px,#352a87 41px,#2c4ac7 43px,#0f5cdd 49px,#0d75dc 53px,#3243ba 59px,#2053d4 65px,#0871de 69px,#0998d1 72px,#0871de 79px,#0268e1 86px,#363093 98px,#352a87 118px,#0871de 127px,#0d75dc 132px,#0998d1 137px,#353dad 157px,#2053d4 179px,#0d75dc 191px,#0363e1 204px,#046de0 211px,#0f5cdd 233px,#3637a0 241px,#3637a0 249px,#046de0 258px,#0268e1 267px,#1389d3 277px,#079ccf 297px,#0c93d2 308px,#353dad 320px)"></i><i style="left:531px;width:3px;background:linear-gradient(#352a87 -6px,#0363e1 -1px,#352a87 8px,#352a87 24px,#0363e1 29px,#353dad 32px,#2c4ac7 35px,#352a87 38px,#363093 43px,#046de0 49px,#352a87 56px,#352a87 98px,#2053d4 102px,#0f5cdd 110px,#3637a0 114px,#1485d4 132px,#07a9c2 137px,#2053d4 146px,#2c4ac7 151px,#352a87 157px,#046de0 173px,#363093 185px,#352a87 204px,#2053d4 211px,#3243ba 218px,#0f5cdd 225px,#1481d6 233px,#0871de 249px,#1481d6 267px,#1481d6 308px,#0d75dc 320px)"></i><i style="left:534px;width:1px;background:linear-gradient(#363093 -6px,#0871de -1px,#046de0 1px,#352a87 6px,#352a87 21px,#353dad 24px,#352a87 29px,#363093 35px,#3243ba 38px,#352a87 46px,#363093 59px,#0268e1 62px,#2c4ac7 65px,#2c4ac7 72px,#352a87 76px,#352a87 123px,#0f5cdd 132px,#1481d6 137px,#046de0 141px,#1481d6 146px,#1481d6 151px,#0d75dc 157px,#2c4ac7 162px,#363093 179px,#0f5cdd 185px,#0268e1 198px,#352a87 225px,#352a87 233px,#0f5cdd 241px,#1079da 258px,#2c4ac7 277px,#0f5cdd 287px,#3637a0 297px,#363093 320px)"></i><i style="left:535px;width:2px;background:linear-gradient(#0d75dc -6px,#0f5cdd -4px,#1485d4 -1px,#1079da 3px,#0f5cdd 8px,#0363e1 21px,#353dad 24px,#0363e1 29px,#127dd8 38px,#0363e1 53px,#1389d3 62px,#1485d4 72px,#1079da 79px,#127dd8 106px,#1389d3 118px,#0998d1 132px,#06a4ca 137px,#079ccf 141px,#06a4ca 151px,#0c93d2 167px,#1389d3 179px,#0998d1 198px,#1485d4 233px,#0998d1 258px,#1481d6 320px)"></i><i style="left:537px;width:2px;background:linear-gradient(#1079da -6px,#0f5cdd -1px,#0363e1 3px,#0d75dc 8px,#1389d3 21px,#108ed2 29px,#1481d6 35px,#3637a0 38px,#127dd8 41px,#1481d6 56px,#127dd8 62px,#1481d6 72px,#0c93d2 76px,#079ccf 102px,#0c93d2 141px,#079ccf 157px,#0998d1 198px,#06a0cd 211px,#0aacbe 218px,#07a9c2 233px,#079ccf 241px,#1481d6 287px,#0998d1 320px)"></i><i style="left:539px;width:1px;background:linear-gradient(#3243ba -6px,#352a87 -4px,#352a87 8px,#2053d4 13px,#2053d4 16px,#0871de 18px,#046de0 24px,#1485d4 26px,#0d75dc 32px,#3637a0 38px,#2c4ac7 43px,#0f5cdd 56px,#363093 59px,#0f5cdd 69px,#3243ba 72px,#0871de 76px,#0363e1 79px,#046de0 83px,#0363e1 86px,#127dd8 106px,#2053d4 114px,#0363e1 123px,#3243ba 127px,#353dad 137px,#0871de 146px,#0871de 157px,#0f5cdd 162px,#046de0 167px,#046de0 185px,#0f5cdd 198px,#1481d6 211px,#07a9c2 218px,#06a7c6 233px,#127dd8 241px,#3637a0 277px,#353dad 297px,#127dd8 320px)"></i><i style="left:540px;width:3px;background:linear-gradient(#353dad -6px,#2c4ac7 -1px,#363093 3px,#2c4ac7 6px,#352a87 21px,#0f5cdd 29px,#352a87 35px,#352a87 56px,#3637a0 59px,#352a87 62px,#3243ba 65px,#0363e1 76px,#127dd8 86px,#046de0 94px,#352a87 98px,#3243ba 102px,#363093 110px,#3243ba 118px,#363093 132px,#046de0 146px,#0871de 157px,#2053d4 162px,#0268e1 167px,#2053d4 173px,#046de0 179px,#2c4ac7 185px,#352a87 218px,#3243ba 233px,#1485d4 258px,#0363e1 267px,#352a87 297px,#353dad 320px)"></i><i style="left:543px;width:3px;background:linear-gradient(#046de0 -6px,#0268e1 6px,#3243ba 8px,#352a87 13px,#3243ba 16px,#352a87 24px,#3637a0 29px,#352a87 43px,#0871de 49px,#2053d4 62px,#108ed2 76px,#1485d4 83px,#0d75dc 86px,#0d75dc 90px,#0268e1 94px,#0871de 106px,#352a87 118px,#3637a0 146px,#2053d4 151px,#2053d4 162px,#0268e1 167px,#1485d4 173px,#1485d4 179px,#0268e1 191px,#2c4ac7 211px,#352a87 218px,#352a87 225px,#1389d3 241px,#2053d4 249px,#06a7c6 258px,#108ed2 267px,#0c93d2 277px,#046de0 287px,#2053d4 297px,#0268e1 308px,#2053d4 320px)"></i><i style="left:546px;width:3px;background:linear-gradient(#0f5cdd -6px,#352a87 3px,#3637a0 26px,#0363e1 35px,#3637a0 46px,#353dad 49px,#352a87 56px,#353dad 59px,#352a87 65px,#0f5cdd 76px,#352a87 86px,#352a87 98px,#2053d4 102px,#0f5cdd 110px,#3243ba 114px,#2053d4 123px,#046de0 127px,#353dad 132px,#0d75dc 137px,#2c4ac7 146px,#046de0 179px,#0f5cdd 185px,#046de0 198px,#3637a0 211px,#352a87 233px,#363093 241px,#0363e1 249px,#2053d4 258px,#046de0 267px,#2053d4 287px,#0f5cdd 320px)"></i><i style="left:549px;width:3px;background:linear-gradient(#352a87 -6px,#363093 1px,#353dad 8px,#0363e1 13px,#353dad 16px,#0f5cdd 18px,#352a87 26px,#3637a0 41px,#363093 46px,#3243ba 49px,#353dad 56px,#2c4ac7 59px,#352a87 62px,#0f5cdd 65px,#3243ba 69px,#0f5cdd 79px,#0d75dc 83px,#0f5cdd 86px,#046de0 90px,#353dad 102px,#353dad 114px,#0f5cdd 118px,#3243ba 127px,#0268e1 132px,#3243ba 146px,#0268e1 157px,#3637a0 173px,#3243ba 179px,#352a87 185px,#3637a0 191px,#352a87 225px,#2c4ac7 233px,#3637a0 241px,#2053d4 249px,#2c4ac7 258px,#0871de 277px,#0d75dc 287px,#046de0 297px,#1481d6 308px,#1481d6 320px)"></i><i style="left:552px;width:3px;background:linear-gradient(#0871de -6px,#2053d4 -4px,#1079da -1px,#1481d6 1px,#3243ba 3px,#2053d4 6px,#3243ba 11px,#352a87 13px,#352a87 26px,#3243ba 32px,#352a87 41px,#2053d4 56px,#352a87 59px,#352a87 94px,#2053d4 102px,#2c4ac7 110px,#363093 114px,#353dad 141px,#352a87 146px,#2053d4 151px,#352a87 157px,#0f5cdd 167px,#2c4ac7 173px,#0f5cdd 179px,#2053d4 185px,#0871de 191px,#1079da 198px,#3637a0 204px,#046de0 211px,#353dad 218px,#352a87 225px,#352a87 267px,#3243ba 277px,#363093 297px,#363093 320px)"></i><i style="left:555px;width:3px;background:linear-gradient(#352a87 -6px,#352a87 1px,#3243ba 16px,#2c4ac7 21px,#046de0 24px,#0268e1 26px,#1079da 29px,#046de0 32px,#3637a0 35px,#1079da 38px,#353dad 41px,#2053d4 43px,#352a87 46px,#352a87 56px,#3243ba 59px,#2053d4 65px,#352a87 72px,#3637a0 79px,#352a87 98px,#3637a0 127px,#2c4ac7 137px,#352a87 146px,#352a87 167px,#0268e1 173px,#0363e1 185px,#0d75dc 191px,#352a87 225px,#0268e1 249px,#2053d4 258px,#0f5cdd 267px,#353dad 277px,#352a87 297px,#3243ba 320px)"></i><i style="left:558px;width:3px;background:linear-gradient(#0363e1 -6px,#046de0 -4px,#2053d4 -1px,#0f5cdd 1px,#363093 6px,#352a87 13px,#0f5cdd 16px,#046de0 18px,#2c4ac7 21px,#0d75dc 29px,#0871de 32px,#2c4ac7 35px,#2c4ac7 41px,#0d75dc 46px,#1079da 49px,#353dad 53px,#0871de 56px,#1481d6 59px,#2c4ac7 62px,#0998d1 65px,#0c93d2 72px,#079ccf 76px,#0363e1 90px,#0871de 98px,#0d75dc 106px,#3243ba 118px,#2053d4 132px,#0268e1 137px,#363093 141px,#3243ba 146px,#352a87 151px,#352a87 173px,#127dd8 191px,#0998d1 204px,#0f5cdd 211px,#2053d4 218px,#0d75dc 225px,#127dd8 241px,#3243ba 249px,#1389d3 258px,#06a0cd 267px,#0998d1 277px,#1db3af 287px,#06a4ca 297px,#2053d4 308px,#108ed2 320px)"></i><i style="left:561px;width:3px;background:linear-gradient(#352a87 -6px,#363093 -4px,#0871de -1px,#127dd8 1px,#0f5cdd 3px,#3243ba 8px,#0268e1 13px,#0363e1 16px,#1389d3 21px,#0363e1 26px,#0d75dc 29px,#2053d4 32px,#0268e1 35px,#2053d4 38px,#046de0 41px,#2c4ac7 43px,#127dd8 46px,#0363e1 53px,#0363e1 56px,#3637a0 62px,#3243ba 65px,#108ed2 76px,#0268e1 79px,#352a87 86px,#352a87 98px,#2c4ac7 102px,#0d75dc 127px,#2053d4 137px,#0871de 141px,#0871de 157px,#352a87 173px,#2c4ac7 185px,#0871de 198px,#363093 218px,#352a87 233px,#0363e1 249px,#2c4ac7 258px,#0f5cdd 267px,#3637a0 277px,#3243ba 297px,#0871de 320px)"></i><i style="left:564px;width:3px;background:linear-gradient(#0268e1 -6px,#2c4ac7 -4px,#3243ba 3px,#0871de 8px,#0f5cdd 18px,#352a87 21px,#3243ba 24px,#352a87 26px,#352a87 35px,#3243ba 38px,#353dad 41px,#0363e1 43px,#353dad 46px,#2c4ac7 53px,#0871de 56px,#0268e1 59px,#1389d3 62px,#1079da 65px,#1481d6 72px,#0871de 76px,#1079da 79px,#2c4ac7 83px,#0f5cdd 86px,#3243ba 90px,#0268e1 94px,#0871de 102px,#2053d4 106px,#2053d4 110px,#0268e1 114px,#353dad 123px,#1079da 127px,#1079da 132px,#06a0cd 137px,#1079da 141px,#2053d4 151px,#0f5cdd 157px,#363093 162px,#046de0 167px,#352a87 198px,#352a87 204px,#0871de 211px,#0998d1 225px,#0998d1 241px,#1079da 249px,#0871de 277px,#127dd8 287px,#0268e1 297px,#0d75dc 308px,#0268e1 320px)"></i><i style="left:567px;width:3px;background:linear-gradient(#352a87 -6px,#2053d4 -4px,#352a87 -1px,#352a87 6px,#2c4ac7 11px,#353dad 21px,#352a87 26px,#2c4ac7 29px,#352a87 35px,#352a87 46px,#3243ba 53px,#363093 56px,#046de0 62px,#3637a0 65px,#352a87 69px,#352a87 98px,#0268e1 102px,#0363e1 106px,#352a87 114px,#3637a0 162px,#353dad 167px,#0f5cdd 173px,#3637a0 179px,#2053d4 185px,#353dad 198px,#3243ba 204px,#352a87 211px,#3637a0 267px,#352a87 287px,#2053d4 297px,#352a87 308px,#352a87 320px)"></i><i style="left:570px;width:3px;background:linear-gradient(#3637a0 -6px,#352a87 1px,#2c4ac7 6px,#352a87 18px,#352a87 26px,#2c4ac7 29px,#352a87 32px,#352a87 41px,#0871de 49px,#0363e1 59px,#353dad 62px,#2c4ac7 69px,#3637a0 72px,#2c4ac7 79px,#352a87 86px,#046de0 102px,#3243ba 106px,#0363e1 110px,#352a87 118px,#0363e1 127px,#0c93d2 132px,#079ccf 137px,#0871de 151px,#0f5cdd 162px,#0871de 167px,#0268e1 173px,#127dd8 185px,#108ed2 198px,#127dd8 211px,#1481d6 218px,#3637a0 233px,#352a87 258px,#3637a0 277px,#0363e1 297px,#0f5cdd 308px,#0d75dc 320px)"></i><i style="left:573px;width:3px;background:linear-gradient(#353dad -6px,#353dad -4px,#352a87 -1px,#3243ba 8px,#0f5cdd 13px,#352a87 21px,#2c4ac7 24px,#363093 29px,#2053d4 35px,#353dad 38px,#0871de 46px,#046de0 53px,#3637a0 59px,#2c4ac7 65px,#352a87 69px,#352a87 86px,#2c4ac7 90px,#352a87 94px,#352a87 110px,#0871de 118px,#0f5cdd 127px,#046de0 137px,#0f5cdd 141px,#0d75dc 157px,#3243ba 162px,#352a87 167px,#3637a0 185px,#2053d4 198px,#3243ba 204px,#0d75dc 225px,#0871de 241px,#2c4ac7 249px,#0d75dc 258px,#3243ba 297px,#3243ba 308px,#127dd8 320px)"></i><i style="left:576px;width:3px;background:linear-gradient(#352a87 -6px,#363093 8px,#3243ba 18px,#352a87 24px,#352a87 35px,#3243ba 43px,#352a87 62px,#352a87 106px,#2053d4 110px,#352a87 114px,#352a87 132px,#2c4ac7 141px,#3243ba 146px,#1079da 157px,#353dad 162px,#363093 173px,#2053d4 179px,#352a87 185px,#352a87 204px,#2c4ac7 211px,#3637a0 218px,#353dad 225px,#363093 233px,#2053d4 241px,#3243ba 258px,#0871de 277px,#3243ba 287px,#1481d6 297px,#0363e1 308px,#2053d4 320px)"></i><i style="left:579px;width:3px;background:linear-gradient(#352a87 -6px,#2053d4 1px,#2c4ac7 6px,#352a87 8px,#352a87 21px,#046de0 26px,#1079da 32px,#2c4ac7 35px,#363093 38px,#353dad 41px,#352a87 46px,#3637a0 62px,#353dad 65px,#352a87 69px,#353dad 72px,#352a87 79px,#352a87 94px,#3243ba 98px,#352a87 102px,#3637a0 106px,#0363e1 110px,#0871de 118px,#1079da 123px,#3243ba 127px,#3243ba 146px,#0363e1 151px,#0363e1 157px,#3243ba 162px,#352a87 179px,#352a87 225px,#353dad 233px,#046de0 241px,#046de0 249px,#108ed2 258px,#0f5cdd 267px,#0363e1 277px,#352a87 287px,#353dad 297px,#352a87 320px)"></i><i style="left:582px;width:3px;background:linear-gradient(#352a87 -6px,#352a87 13px,#2c4ac7 16px,#3243ba 21px,#0f5cdd 24px,#3637a0 26px,#353dad 32px,#0f5cdd 35px,#352a87 49px,#352a87 62px,#353dad 65px,#3243ba 72px,#352a87 76px,#2c4ac7 83px,#046de0 90px,#0f5cdd 94px,#0871de 98px,#1079da 106px,#046de0 110px,#046de0 118px,#0363e1 123px,#0871de 132px,#3243ba 137px,#0268e1 141px,#3637a0 151px,#0268e1 162px,#3243ba 167px,#1481d6 173px,#06a0cd 191px,#0c93d2 198px,#0998d1 204px,#1389d3 211px,#108ed2 218px,#046de0 225px,#1485d4 233px,#0268e1 241px,#1485d4 249px,#127dd8 277px,#0c93d2 287px,#1485d4 297px,#108ed2 308px,#1485d4 320px)"></i><i style="left:585px;width:1px;background:linear-gradient(#046de0 -6px,#3243ba 1px,#2053d4 3px,#363093 6px,#2053d4 16px,#2c4ac7 21px,#363093 26px,#2053d4 35px,#353dad 38px,#0871de 49px,#0268e1 59px,#2053d4 62px,#0268e1 72px,#2c4ac7 76px,#2053d4 83px,#0871de 90px,#2053d4 94px,#2c4ac7 102px,#0268e1 106px,#2c4ac7 110px,#046de0 118px,#0f5cdd 123px,#2053d4 127px,#0d75dc 132px,#0871de 141px,#0f5cdd 151px,#0268e1 157px,#2053d4 162px,#0268e1 173px,#3637a0 198px,#2c4ac7 211px,#3243ba 218px,#0871de 225px,#0268e1 233px,#127dd8 241px,#0268e1 249px,#0871de 277px,#353dad 287px,#1389d3 297px,#108ed2 308px,#0d75dc 320px)"></i></div>
<div class="a" style="left:360px;top:237px;width:2px;height:1px;background:#333"></div>
<div class="t" style="left:330px;top:231.5px;width:28px;text-align:right;font-size:11px;color:#262626">8</div>
<div class="a" style="left:360px;top:293px;width:2px;height:1px;background:#333"></div>
<div class="t" style="left:330px;top:287.5px;width:28px;text-align:right;font-size:11px;color:#262626">6</div>
<div class="a" style="left:360px;top:373px;width:2px;height:1px;background:#333"></div>
<div class="t" style="left:330px;top:367.5px;width:28px;text-align:right;font-size:11px;color:#262626">4</div>
<div class="a" style="left:360px;top:509px;width:2px;height:1px;background:#333"></div>
<div class="t" style="left:330px;top:503.5px;width:28px;text-align:right;font-size:11px;color:#262626">2</div>
<div class="a" style="left:364.1px;top:511px;width:1px;height:2px;background:#333"></div>
<div class="t" style="left:344.6px;top:513px;width:40px;text-align:center;font-size:11px;color:#262626">0</div>
<div class="a" style="left:441.9px;top:511px;width:1px;height:2px;background:#333"></div>
<div class="t" style="left:422.4px;top:513px;width:40px;text-align:center;font-size:11px;color:#262626">2</div>
<div class="a" style="left:519.7px;top:511px;width:1px;height:2px;background:#333"></div>
<div class="t" style="left:500.2px;top:513px;width:40px;text-align:center;font-size:11px;color:#262626">4</div>
<div class="a" style="left:597.5px;top:511px;width:1px;height:2px;background:#333"></div>
<div class="t" style="left:578.0px;top:513px;width:40px;text-align:center;font-size:11px;color:#262626">6</div>
<div class="a" style="left:675.3px;top:511px;width:1px;height:2px;background:#333"></div>
<div class="t" style="left:655.8px;top:513px;width:40px;text-align:center;font-size:11px;color:#262626">8</div>
<div class="a" style="left:753.1px;top:511px;width:1px;height:2px;background:#333"></div>
<div class="t" style="left:733.6px;top:513px;width:40px;text-align:center;font-size:11px;color:#262626">10</div>
<div class="a" style="left:830.9px;top:511px;width:1px;height:2px;background:#333"></div>
<div class="t" style="left:811.4px;top:513px;width:40px;text-align:center;font-size:11px;color:#262626">12</div>
<div class="a" style="left:908.7px;top:511px;width:1px;height:2px;background:#333"></div>
<div class="t" style="left:889.2px;top:513px;width:40px;text-align:center;font-size:11px;color:#262626">14</div>
<div class="t" style="left:600px;top:535.5px;width:100px;text-align:center;font-size:10.2px;color:#262626">Time (minutes)</div>
<div class="t" style="left:276px;top:346px;width:100px;text-align:center;font-size:10.2px;color:#262626;transform:rotate(-90deg)">Frequency (Hz)</div>
</body></html>
